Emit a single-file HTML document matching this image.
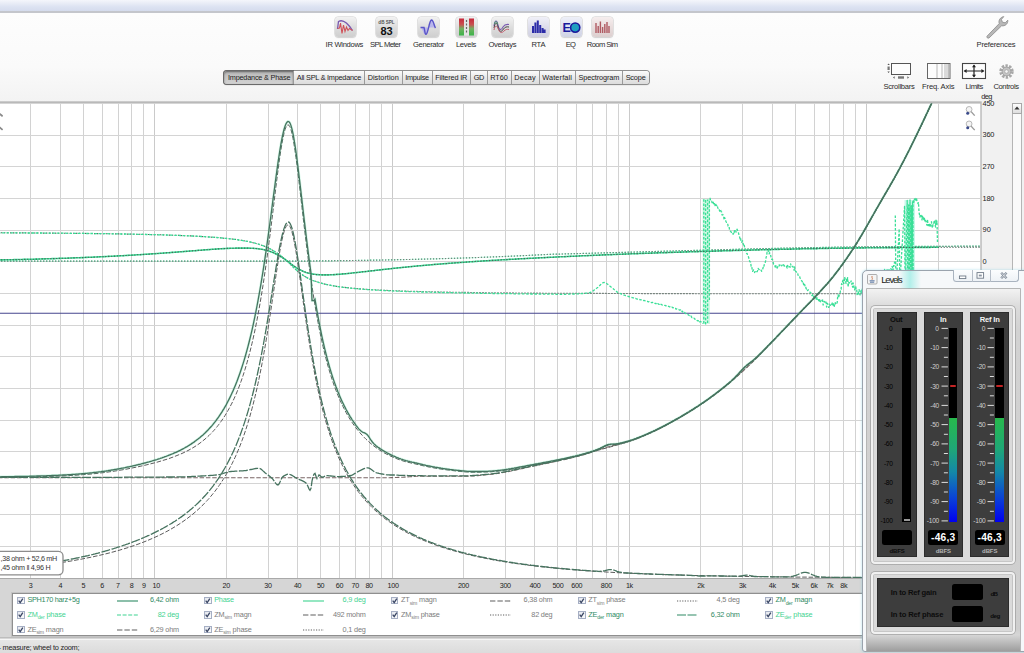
<!DOCTYPE html>
<html><head><meta charset="utf-8"><title>REW</title>
<style>
html,body{margin:0;padding:0}
body{width:1024px;height:653px;overflow:hidden;position:relative;background:#ececec;font-family:"Liberation Sans",sans-serif;}
.t{position:absolute;white-space:nowrap;}
.a{position:absolute;}
sub{font-size:70%;vertical-align:baseline;position:relative;top:2.5px;}
</style></head><body>

<div class="a" style="left:0;top:0;width:1024px;height:12px;background:linear-gradient(#f4f6fb 0%,#dde3f2 55%,#d3daec 100%);"></div>
<div class="a" style="left:0;top:11px;width:1024px;height:1.5px;background:#c4c6cc;"></div>
<div class="a" style="left:0;top:12.5px;width:1024px;height:89px;background:linear-gradient(#fdfdfd,#fafafa 60%,#f3f3f3);"></div>
<div class="a" style="left:335px;top:16.6px;width:21px;height:20px;border-radius:3.5px;background:linear-gradient(#f2f2f2,#dcdcdc 55%,#cfcfcf);box-shadow:0 0 0 0.6px #d0d0d0, 0 .8px 1.2px rgba(0,0,0,.15);overflow:hidden;"><svg width="21" height="20" viewBox="0 0 21 20" style="position:absolute;left:0;top:0"><path d="M2.5 12 L3.5 4.5 C7 2.5 12 5 17.5 13.5" fill="none" stroke="#7a5ab0" stroke-width="1.3"/><path d="M2.5 11.5 L4.5 11 L5.5 6 L7 16.5 L8.5 8 L10 14.5 L11.5 10 L13 13.5 L14.5 11.5 L17.5 13.5" fill="none" stroke="#d05058" stroke-width="1.1"/></svg></div>
<div class="t" style="left:325.6px;top:40.2px;font-size:7.6px;line-height:9.1px;color:#2b2b2b;letter-spacing:-0.30px;">IR Windows</div>
<div class="a" style="left:375.8px;top:16.6px;width:21px;height:20px;border-radius:3.5px;background:linear-gradient(#f2f2f2,#dcdcdc 55%,#cfcfcf);box-shadow:0 0 0 0.6px #d0d0d0, 0 .8px 1.2px rgba(0,0,0,.15);overflow:hidden;"><svg width="21" height="20" viewBox="0 0 21 20" style="position:absolute;left:0;top:0"><text x="10.5" y="6.9" font-size="4.6" font-weight="bold" text-anchor="middle" fill="#555" font-family="Liberation Sans, sans-serif">dB SPL</text><text x="10.5" y="17.9" font-size="11" font-weight="bold" text-anchor="middle" fill="#111" font-family="Liberation Sans, sans-serif">83</text></svg></div>
<div class="t" style="left:370.1px;top:40.2px;font-size:7.6px;line-height:9.1px;color:#2b2b2b;letter-spacing:-0.58px;">SPL Meter</div>
<div class="a" style="left:418px;top:16.6px;width:21px;height:20px;border-radius:3.5px;background:linear-gradient(#f2f2f2,#dcdcdc 55%,#cfcfcf);box-shadow:0 0 0 0.6px #d0d0d0, 0 .8px 1.2px rgba(0,0,0,.15);overflow:hidden;"><svg width="21" height="20" viewBox="0 0 21 20" style="position:absolute;left:0;top:0"><path d="M2.5 10.5 C4 10.5 5.5 18 7.5 17.5 C10.5 16.5 11 3.5 13.5 3 C15.5 2.7 16 9 17.5 10.5 Z" fill="#b9b6ec" stroke="none"/><path d="M2.5 10.5 L6 10.5 C7 14 7 17.6 8 17.3 C10.5 16 11 3.5 13.5 3 C15.5 2.7 16 9 17.5 11" fill="none" stroke="#5a55c8" stroke-width="1.4"/></svg></div>
<div class="t" style="left:413.0px;top:40.2px;font-size:7.6px;line-height:9.1px;color:#2b2b2b;letter-spacing:-0.36px;">Generator</div>
<div class="a" style="left:456px;top:16.6px;width:21px;height:20px;border-radius:3.5px;background:linear-gradient(#f2f2f2,#dcdcdc 55%,#cfcfcf);box-shadow:0 0 0 0.6px #d0d0d0, 0 .8px 1.2px rgba(0,0,0,.15);overflow:hidden;"><svg width="21" height="20" viewBox="0 0 21 20" style="position:absolute;left:0;top:0"><defs><linearGradient id="lg1" x1="0" y1="0" x2="0" y2="1"><stop offset="0" stop-color="#c8283c"/><stop offset=".35" stop-color="#c85050"/><stop offset=".6" stop-color="#70b060"/><stop offset="1" stop-color="#3cb44a"/></linearGradient></defs><rect x="3" y="1.5" width="5" height="17" fill="url(#lg1)"/><rect x="13" y="1.5" width="5" height="17" fill="url(#lg1)"/><rect x="8" y="1.5" width="5" height="17" fill="#e4e4e4"/><path d="M10.5 3 v2 M10.5 6.5 v2 M10.5 10 v2 M10.5 13.5 v2" stroke="#666" stroke-width="1.2"/></svg></div>
<div class="t" style="left:455.9px;top:40.2px;font-size:7.6px;line-height:9.1px;color:#2b2b2b;letter-spacing:-0.29px;">Levels</div>
<div class="a" style="left:492.3px;top:16.6px;width:21px;height:20px;border-radius:3.5px;background:linear-gradient(#f2f2f2,#dcdcdc 55%,#cfcfcf);box-shadow:0 0 0 0.6px #d0d0d0, 0 .8px 1.2px rgba(0,0,0,.15);overflow:hidden;"><svg width="21" height="20" viewBox="0 0 21 20" style="position:absolute;left:0;top:0"><path d="M2 9 C3 2 5 3 6 8 C7 13 9 14 11 10 C12.5 7.5 14 7 17 7.5" fill="none" stroke="#7a5ab0" stroke-width="1.1"/><path d="M2 11 C3 5 5 5 6 10 C7 15 9.5 15.5 11.5 12 C13 10 14.5 9.5 17 10" fill="none" stroke="#444" stroke-width="1"/><path d="M2 13 C3 8 5 8 6.5 12.5 C8 16.5 10 16 12 14 C13.5 12.5 15 12 17 12.5" fill="none" stroke="#c06070" stroke-width="1"/><path d="M2.5 7 C3.2 3.5 4.8 4 5.6 7" fill="none" stroke="#40a060" stroke-width=".9"/></svg></div>
<div class="t" style="left:488.4px;top:40.2px;font-size:7.6px;line-height:9.1px;color:#2b2b2b;letter-spacing:-0.27px;">Overlays</div>
<div class="a" style="left:528.3px;top:16.6px;width:21px;height:20px;border-radius:3.5px;background:linear-gradient(#f0f0f8,#dcdcea 55%,#d0d0e0);box-shadow:0 0 0 0.6px #d0d0d0, 0 .8px 1.2px rgba(0,0,0,.15);overflow:hidden;"><svg width="21" height="20" viewBox="0 0 21 20" style="position:absolute;left:0;top:0"><path d="M5 16 V9 M7.4 16 V5.5 M9.8 16 V3.5 M12.2 16 V8 M14.6 16 V11 M16.6 16 V12.5" stroke="#2c2ca8" stroke-width="2"/></svg></div>
<div class="t" style="left:531.5px;top:40.2px;font-size:7.6px;line-height:9.1px;color:#2b2b2b;letter-spacing:-0.27px;">RTA</div>
<div class="a" style="left:560.7px;top:16.6px;width:21px;height:20px;border-radius:3.5px;background:linear-gradient(#eef0f8,#dcdfee 55%,#d0d3e4);box-shadow:0 0 0 0.6px #d0d0d0, 0 .8px 1.2px rgba(0,0,0,.15);overflow:hidden;"><svg width="21" height="20" viewBox="0 0 21 20" style="position:absolute;left:0;top:0"><text x="1.6" y="15" font-size="12.5" font-weight="bold" fill="#1a1a9c" font-family="Liberation Sans, sans-serif">E</text><circle cx="14.2" cy="10.6" r="4.6" fill="#1e9ec0" stroke="#1a1a9c" stroke-width="1.6"/></svg></div>
<div class="t" style="left:565.8px;top:40.2px;font-size:7.6px;line-height:9.1px;color:#2b2b2b;letter-spacing:-0.89px;">EQ</div>
<div class="a" style="left:592.2px;top:16.6px;width:21px;height:20px;border-radius:3.5px;background:linear-gradient(#f6eeee,#e8dcdc 55%,#dccfcf);box-shadow:0 0 0 0.6px #d0d0d0, 0 .8px 1.2px rgba(0,0,0,.15);overflow:hidden;"><svg width="21" height="20" viewBox="0 0 21 20" style="position:absolute;left:0;top:0"><path d="M4 16 V6 M6.2 16 V9 M8.4 16 V4.5 M10.6 16 V10 M12.8 16 V7 M15 16 V5 M17 16 V9" stroke="#b05a62" stroke-width="1.4"/></svg></div>
<div class="t" style="left:586.8px;top:40.2px;font-size:7.6px;line-height:9.1px;color:#2b2b2b;letter-spacing:-0.58px;">Room Sim</div>
<svg class="a" style="left:984px;top:14px" width="27" height="25" viewBox="0 0 27 25"><path d="M3 22.2 L15.2 9.6 C14.2 6.5 16.2 3.2 19.8 2.6 L17.4 5.4 L18.4 8.2 L21.2 8.8 L23.8 6.2 C24.2 9.6 21.2 12.4 17.6 11.8 L5 24 C3.6 24.6 2.4 23.4 3 22.2 Z" fill="#b8b8b8" stroke="#8a8a8a" stroke-width=".8"/></svg>
<div class="t" style="left:976.6px;top:40.2px;font-size:7.6px;line-height:9.1px;color:#2b2b2b;letter-spacing:-0.20px;">Preferences</div>
<svg class="a" style="left:886px;top:62px" width="27" height="18" viewBox="0 0 27 18"><rect x="5.5" y="1.5" width="19" height="11" fill="#fdfdfd" stroke="#555" stroke-width="1"/><rect x="1.5" y="4.5" width="2.2" height="3.5" fill="#777"/><path d="M2.6 1.5 l1.2 1.6 h-2.4z M2.6 11 l1.2 -1.6 h-2.4z" fill="#555"/><rect x="12" y="14.3" width="6" height="2.4" fill="#777"/><path d="M7 15.5 l1.6 -1.2 v2.4z M23 15.5 l-1.6 -1.2 v2.4z" fill="#555"/></svg>
<div class="t" style="left:883.5px;top:82.4px;font-size:7.6px;line-height:9.1px;color:#2b2b2b;letter-spacing:-0.27px;">Scrollbars</div>
<svg class="a" style="left:926px;top:62px" width="26" height="18" viewBox="0 0 26 18"><rect x="1.5" y="1.5" width="22.5" height="15" fill="#fdfdfd" stroke="#666" stroke-width="1"/><path d="M11 2 V16 M16 2 V16 M19 2 V16 M21 2 V16 M22.6 2 V16" stroke="#9a9a9a" stroke-width=".7"/></svg>
<div class="t" style="left:922.1px;top:82.4px;font-size:7.6px;line-height:9.1px;color:#2b2b2b;letter-spacing:-0.15px;">Freq. Axis</div>
<svg class="a" style="left:961px;top:62px" width="26" height="18" viewBox="0 0 26 18"><rect x="1.5" y="1.5" width="23" height="15" fill="#fdfdfd" stroke="#444" stroke-width="1.1"/><path d="M3.5 9 H22.5 M13 3.2 V14.8" stroke="#222" stroke-width="1.2"/><path d="M2.6 9 l3 -2 v4z M23.4 9 l-3 -2 v4z M13 2.4 l-2 2.8 h4z M13 15.6 l-2 -2.8 h4z" fill="#222"/></svg>
<div class="t" style="left:965.5px;top:82.4px;font-size:7.6px;line-height:9.1px;color:#2b2b2b;letter-spacing:-0.39px;">Limits</div>
<svg class="a" style="left:998px;top:63px" width="17" height="17" viewBox="0 0 17 17"><circle cx="8.5" cy="8.5" r="5.4" fill="none" stroke="#a8a8a8" stroke-width="3.6" stroke-dasharray="2.2 1.2"/><circle cx="8.5" cy="8.5" r="4.4" fill="#c4c4c4" stroke="#999" stroke-width=".8"/><circle cx="8.5" cy="8.5" r="1.8" fill="#f4f4f4" stroke="#999" stroke-width=".6"/></svg>
<div class="t" style="left:993.4px;top:82.4px;font-size:7.6px;line-height:9.1px;color:#2b2b2b;letter-spacing:-0.37px;">Controls</div>
<div class="a" style="left:224.2px;top:71px;width:424.8px;height:13px;border-radius:3px;background:linear-gradient(#fbfbfb,#e9e9e9 50%,#dcdcdc);box-shadow:0 0 0 1px #8e8e8e,0 1px 1.5px rgba(0,0,0,.25);"></div>
<div class="a" style="left:224.2px;top:71px;width:69.3px;height:13px;border-radius:3px 0 0 3px;background:linear-gradient(#b4b4b4,#c6c6c6 45%,#d2d2d2);box-shadow:inset 0 1px 2px rgba(0,0,0,.45), 0 0 0 1px #6a6a6a;"></div>
<div class="t" style="left:224.7px;top:73.4px;width:68.8px;text-align:center;font-size:7.3px;line-height:9.6px;color:#1c1c1c;letter-spacing:-0.20px;">Impedance &amp; Phase</div>
<div class="a" style="left:293.0px;top:71px;width:1px;height:13px;background:#9a9a9a;"></div>
<div class="t" style="left:293.5px;top:73.4px;width:70.9px;text-align:center;font-size:7.3px;line-height:9.6px;color:#1c1c1c;letter-spacing:-0.23px;">All SPL &amp; Impedance</div>
<div class="a" style="left:363.9px;top:71px;width:1px;height:13px;background:#9a9a9a;"></div>
<div class="t" style="left:364.4px;top:73.4px;width:37.6px;text-align:center;font-size:7.3px;line-height:9.6px;color:#1c1c1c;letter-spacing:0.03px;">Distortion</div>
<div class="a" style="left:401.5px;top:71px;width:1px;height:13px;background:#9a9a9a;"></div>
<div class="t" style="left:402.0px;top:73.4px;width:30.0px;text-align:center;font-size:7.3px;line-height:9.6px;color:#1c1c1c;letter-spacing:-0.29px;">Impulse</div>
<div class="a" style="left:431.5px;top:71px;width:1px;height:13px;background:#9a9a9a;"></div>
<div class="t" style="left:432.0px;top:73.4px;width:38.5px;text-align:center;font-size:7.3px;line-height:9.6px;color:#1c1c1c;letter-spacing:-0.15px;">Filtered IR</div>
<div class="a" style="left:470.0px;top:71px;width:1px;height:13px;background:#9a9a9a;"></div>
<div class="t" style="left:470.5px;top:73.4px;width:16.5px;text-align:center;font-size:7.3px;line-height:9.6px;color:#1c1c1c;letter-spacing:-0.47px;">GD</div>
<div class="a" style="left:486.5px;top:71px;width:1px;height:13px;background:#9a9a9a;"></div>
<div class="t" style="left:487.0px;top:73.4px;width:24.0px;text-align:center;font-size:7.3px;line-height:9.6px;color:#1c1c1c;letter-spacing:-0.05px;">RT60</div>
<div class="a" style="left:510.5px;top:71px;width:1px;height:13px;background:#9a9a9a;"></div>
<div class="t" style="left:511.0px;top:73.4px;width:28.0px;text-align:center;font-size:7.3px;line-height:9.6px;color:#1c1c1c;letter-spacing:0.16px;">Decay</div>
<div class="a" style="left:538.5px;top:71px;width:1px;height:13px;background:#9a9a9a;"></div>
<div class="t" style="left:539.0px;top:73.4px;width:36.3px;text-align:center;font-size:7.3px;line-height:9.6px;color:#1c1c1c;letter-spacing:0.14px;">Waterfall</div>
<div class="a" style="left:574.8px;top:71px;width:1px;height:13px;background:#9a9a9a;"></div>
<div class="t" style="left:575.3px;top:73.4px;width:47.1px;text-align:center;font-size:7.3px;line-height:9.6px;color:#1c1c1c;letter-spacing:-0.11px;">Spectrogram</div>
<div class="a" style="left:621.9px;top:71px;width:1px;height:13px;background:#9a9a9a;"></div>
<div class="t" style="left:622.4px;top:73.4px;width:26.4px;text-align:center;font-size:7.3px;line-height:9.6px;color:#1c1c1c;letter-spacing:-0.16px;">Scope</div>
<svg class="a" style="left:0;top:0" width="1024" height="653" viewBox="0 0 1024 653">
<defs><clipPath id="cp"><rect x="0" y="103.6" width="980.3" height="474.4"/></clipPath></defs>
<rect x="-2" y="101.3" width="983.6999999999999" height="477.7" fill="#b9b9b9"/>
<rect x="-2" y="103.6" width="982.3" height="474.4" fill="#ffffff"/>
<g clip-path="url(#cp)">
<path d="M30.5 103.6 V578.0" stroke="#d2d2d2" stroke-width="1"/>
<path d="M60.5 103.6 V578.0" stroke="#d2d2d2" stroke-width="1"/>
<path d="M83.5 103.6 V578.0" stroke="#d2d2d2" stroke-width="1"/>
<path d="M102.5 103.6 V578.0" stroke="#d2d2d2" stroke-width="1"/>
<path d="M118.5 103.6 V578.0" stroke="#d2d2d2" stroke-width="1"/>
<path d="M131.5 103.6 V578.0" stroke="#d2d2d2" stroke-width="1"/>
<path d="M143.5 103.6 V578.0" stroke="#d2d2d2" stroke-width="1"/>
<path d="M154.5 103.6 V578.0" stroke="#cacaca" stroke-width="1"/>
<path d="M226.5 103.6 V578.0" stroke="#d2d2d2" stroke-width="1"/>
<path d="M268.5 103.6 V578.0" stroke="#d2d2d2" stroke-width="1"/>
<path d="M297.5 103.6 V578.0" stroke="#d2d2d2" stroke-width="1"/>
<path d="M320.5 103.6 V578.0" stroke="#d2d2d2" stroke-width="1"/>
<path d="M339.5 103.6 V578.0" stroke="#d2d2d2" stroke-width="1"/>
<path d="M355.5 103.6 V578.0" stroke="#d2d2d2" stroke-width="1"/>
<path d="M369.5 103.6 V578.0" stroke="#d2d2d2" stroke-width="1"/>
<path d="M381.5 103.6 V578.0" stroke="#d2d2d2" stroke-width="1"/>
<path d="M392.5 103.6 V578.0" stroke="#cacaca" stroke-width="1"/>
<path d="M463.5 103.6 V578.0" stroke="#d2d2d2" stroke-width="1"/>
<path d="M505.5 103.6 V578.0" stroke="#d2d2d2" stroke-width="1"/>
<path d="M534.5 103.6 V578.0" stroke="#d2d2d2" stroke-width="1"/>
<path d="M557.5 103.6 V578.0" stroke="#d2d2d2" stroke-width="1"/>
<path d="M576.5 103.6 V578.0" stroke="#d2d2d2" stroke-width="1"/>
<path d="M592.5 103.6 V578.0" stroke="#d2d2d2" stroke-width="1"/>
<path d="M606.5 103.6 V578.0" stroke="#d2d2d2" stroke-width="1"/>
<path d="M618.5 103.6 V578.0" stroke="#d2d2d2" stroke-width="1"/>
<path d="M629.5 103.6 V578.0" stroke="#cacaca" stroke-width="1"/>
<path d="M700.5 103.6 V578.0" stroke="#d2d2d2" stroke-width="1"/>
<path d="M742.5 103.6 V578.0" stroke="#d2d2d2" stroke-width="1"/>
<path d="M772.5 103.6 V578.0" stroke="#d2d2d2" stroke-width="1"/>
<path d="M795.5 103.6 V578.0" stroke="#d2d2d2" stroke-width="1"/>
<path d="M814.5 103.6 V578.0" stroke="#d2d2d2" stroke-width="1"/>
<path d="M829.5 103.6 V578.0" stroke="#d2d2d2" stroke-width="1"/>
<path d="M843.5 103.6 V578.0" stroke="#d2d2d2" stroke-width="1"/>
<path d="M855.5 103.6 V578.0" stroke="#d2d2d2" stroke-width="1"/>
<path d="M866.5 103.6 V578.0" stroke="#cacaca" stroke-width="1"/>
<path d="M938.5 103.6 V578.0" stroke="#d2d2d2" stroke-width="1"/>
<path d="M0 135.5 H980.3" stroke="#d4d4d4" stroke-width="1"/>
<path d="M0 166.5 H980.3" stroke="#d4d4d4" stroke-width="1"/>
<path d="M0 198.5 H980.3" stroke="#d4d4d4" stroke-width="1"/>
<path d="M0 230.5 H980.3" stroke="#d4d4d4" stroke-width="1"/>
<path d="M0 261.5 H980.3" stroke="#d4d4d4" stroke-width="1"/>
<path d="M0 293.5 H980.3" stroke="#d4d4d4" stroke-width="1"/>
<path d="M0 325.5 H980.3" stroke="#d4d4d4" stroke-width="1"/>
<path d="M0 356.5 H980.3" stroke="#d4d4d4" stroke-width="1"/>
<path d="M0 388.5 H980.3" stroke="#d4d4d4" stroke-width="1"/>
<path d="M0 420.5 H980.3" stroke="#d4d4d4" stroke-width="1"/>
<path d="M0 451.5 H980.3" stroke="#d4d4d4" stroke-width="1"/>
<path d="M0 483.5 H980.3" stroke="#d4d4d4" stroke-width="1"/>
<path d="M0 514.5 H980.3" stroke="#d4d4d4" stroke-width="1"/>
<path d="M0 546.5 H980.3" stroke="#d4d4d4" stroke-width="1"/>
<path d="M0 313.3 H980.3" stroke="#46468e" stroke-width="1.1"/>
<path d="M-2.0 261.1 L-1.0 261.1 L0.0 261.1 L1.0 261.1 L2.0 261.1 L3.0 261.1 L4.0 261.1 L5.0 261.1 L6.0 261.1 L7.0 261.1 L8.0 261.1 L9.0 261.1 L10.0 261.1 L11.0 261.1 L12.0 261.1 L13.0 261.1 L14.0 261.1 L15.0 261.1 L16.0 261.1 L17.0 261.1 L18.0 261.1 L19.0 261.1 L20.0 261.1 L21.0 261.1 L22.0 261.1 L23.0 261.1 L24.0 261.1 L25.0 261.1 L26.0 261.1 L27.0 261.1 L28.0 261.1 L29.0 261.1 L30.0 261.1 L31.0 261.1 L32.0 261.1 L33.0 261.1 L34.0 261.1 L35.0 261.1 L36.0 261.1 L37.0 261.1 L38.0 261.1 L39.0 261.1 L40.0 261.1 L41.0 261.1 L42.0 261.1 L43.0 261.1 L44.0 261.1 L45.0 261.1 L46.0 261.1 L47.0 261.1 L48.0 261.1 L49.0 261.1 L50.0 261.1 L51.0 261.1 L52.0 261.1 L53.0 261.1 L54.0 261.1 L55.0 261.1 L56.0 261.1 L57.0 261.1 L58.0 261.1 L59.0 261.1 L60.0 261.1 L61.0 261.1 L62.0 261.1 L63.0 261.1 L64.0 261.1 L65.0 261.1 L66.0 261.1 L67.0 261.1 L68.0 261.1 L69.0 261.1 L70.0 261.1 L71.0 261.1 L72.0 261.1 L73.0 261.1 L74.0 261.1 L75.0 261.1 L76.0 261.1 L77.0 261.1 L78.0 261.1 L79.0 261.1 L80.0 261.1 L81.0 261.1 L82.0 261.1 L83.0 261.1 L84.0 261.1 L85.0 261.1 L86.0 261.1 L87.0 261.1 L88.0 261.1 L89.0 261.1 L90.0 261.1 L91.0 261.1 L92.0 261.1 L93.0 261.1 L94.0 261.1 L95.0 261.1 L96.0 261.1 L97.0 261.1 L98.0 261.1 L99.0 261.1 L100.0 261.1 L101.0 261.1 L102.0 261.1 L103.0 261.1 L104.0 261.1 L105.0 261.1 L106.0 261.1 L107.0 261.1 L108.0 261.1 L109.0 261.1 L110.0 261.1 L111.0 261.1 L112.0 261.1 L113.0 261.1 L114.0 261.1 L115.0 261.1 L116.0 261.1 L117.0 261.1 L118.0 261.1 L119.0 261.1 L120.0 261.1 L121.0 261.1 L122.0 261.1 L123.0 261.1 L124.0 261.1 L125.0 261.1 L126.0 261.1 L127.0 261.1 L128.0 261.1 L129.0 261.1 L130.0 261.1 L131.0 261.1 L132.0 261.1 L133.0 261.1 L134.0 261.1 L135.0 261.1 L136.0 261.1 L137.0 261.1 L138.0 261.1 L139.0 261.1 L140.0 261.1 L141.0 261.1 L142.0 261.1 L143.0 261.1 L144.0 261.1 L145.0 261.1 L146.0 261.1 L147.0 261.1 L148.0 261.1 L149.0 261.1 L150.0 261.1 L151.0 261.1 L152.0 261.1 L153.0 261.1 L154.0 261.1 L155.0 261.1 L156.0 261.1 L157.0 261.1 L158.0 261.1 L159.0 261.1 L160.0 261.1 L161.0 261.1 L162.0 261.1 L163.0 261.1 L164.0 261.1 L165.0 261.1 L166.0 261.1 L167.0 261.1 L168.0 261.1 L169.0 261.1 L170.0 261.1 L171.0 261.1 L172.0 261.1 L173.0 261.1 L174.0 261.1 L175.0 261.1 L176.0 261.1 L177.0 261.1 L178.0 261.1 L179.0 261.1 L180.0 261.1 L181.0 261.1 L182.0 261.1 L183.0 261.1 L184.0 261.1 L185.0 261.1 L186.0 261.1 L187.0 261.1 L188.0 261.1 L189.0 261.1 L190.0 261.1 L191.0 261.1 L192.0 261.1 L193.0 261.1 L194.0 261.1 L195.0 261.1 L196.0 261.1 L197.0 261.1 L198.0 261.1 L199.0 261.1 L200.0 261.1 L201.0 261.1 L202.0 261.1 L203.0 261.1 L204.0 261.1 L205.0 261.1 L206.0 261.1 L207.0 261.1 L208.0 261.1 L209.0 261.1 L210.0 261.1 L211.0 261.1 L212.0 261.1 L213.0 261.1 L214.0 261.1 L215.0 261.1 L216.0 261.1 L217.0 261.1 L218.0 261.1 L219.0 261.1 L220.0 261.1 L221.0 261.1 L222.0 261.1 L223.0 261.1 L224.0 261.1 L225.0 261.1 L226.0 261.1 L227.0 261.1 L228.0 261.1 L229.0 261.1 L230.0 261.1 L231.0 261.1 L232.0 261.1 L233.0 261.1 L234.0 261.1 L235.0 261.1 L236.0 261.1 L237.0 261.1 L238.0 261.1 L239.0 261.1 L240.0 261.1 L241.0 261.1 L242.0 261.1 L243.0 261.1 L244.0 261.1 L245.0 261.1 L246.0 261.1 L247.0 261.1 L248.0 261.1 L249.0 261.1 L250.0 261.1 L251.0 261.1 L252.0 261.1 L253.0 261.1 L254.0 261.1 L255.0 261.1 L256.0 261.1 L257.0 261.1 L258.0 261.1 L259.0 261.1 L260.0 261.1 L261.0 261.1 L262.0 261.1 L263.0 261.1 L264.0 261.1 L265.0 261.1 L266.0 261.1 L267.0 261.1 L268.0 261.1 L269.0 261.1 L270.0 261.1 L271.0 261.1 L272.0 261.1 L273.0 261.1 L274.0 261.1 L275.0 261.1 L276.0 261.1 L277.0 261.1 L278.0 261.1 L279.0 261.1 L280.0 261.1 L281.0 261.1 L282.0 261.1 L283.0 261.1 L284.0 261.1 L285.0 261.1 L286.0 261.1 L287.0 261.1 L288.0 261.1 L289.0 261.1 L290.0 261.1 L291.0 261.1 L292.0 261.1 L293.0 261.1 L294.0 261.1 L295.0 261.1 L296.0 261.1 L297.0 261.1 L298.0 261.1 L299.0 261.1 L300.0 261.1 L301.0 261.1 L302.0 261.1 L303.0 261.1 L304.0 261.1 L305.0 261.1 L306.0 261.0 L307.0 261.0 L308.0 261.0 L309.0 261.0 L310.0 261.0 L311.0 261.0 L312.0 261.0 L313.0 261.0 L314.0 261.0 L315.0 261.0 L316.0 260.9 L317.0 260.9 L318.0 260.9 L319.0 260.9 L320.0 260.9 L321.0 260.9 L322.0 260.9 L323.0 260.9 L324.0 260.9 L325.0 260.9 L326.0 260.8 L327.0 260.8 L328.0 260.8 L329.0 260.8 L330.0 260.8 L331.0 260.8 L332.0 260.8 L333.0 260.8 L334.0 260.7 L335.0 260.7 L336.0 260.7 L337.0 260.7 L338.0 260.7 L339.0 260.7 L340.0 260.7 L341.0 260.7 L342.0 260.6 L343.0 260.6 L344.0 260.6 L345.0 260.6 L346.0 260.6 L347.0 260.6 L348.0 260.6 L349.0 260.6 L350.0 260.5 L351.0 260.5 L352.0 260.5 L353.0 260.5 L354.0 260.5 L355.0 260.5 L356.0 260.5 L357.0 260.4 L358.0 260.4 L359.0 260.4 L360.0 260.4 L361.0 260.4 L362.0 260.4 L363.0 260.3 L364.0 260.3 L365.0 260.3 L366.0 260.3 L367.0 260.3 L368.0 260.3 L369.0 260.3 L370.0 260.2 L371.0 260.2 L372.0 260.2 L373.0 260.2 L374.0 260.2 L375.0 260.2 L376.0 260.1 L377.0 260.1 L378.0 260.1 L379.0 260.1 L380.0 260.1 L381.0 260.0 L382.0 260.0 L383.0 260.0 L384.0 260.0 L385.0 260.0 L386.0 260.0 L387.0 259.9 L388.0 259.9 L389.0 259.9 L390.0 259.9 L391.0 259.9 L392.0 259.8 L393.0 259.8 L394.0 259.8 L395.0 259.8 L396.0 259.8 L397.0 259.7 L398.0 259.7 L399.0 259.7 L400.0 259.7 L401.0 259.7 L402.0 259.6 L403.0 259.6 L404.0 259.6 L405.0 259.6 L406.0 259.5 L407.0 259.5 L408.0 259.5 L409.0 259.5 L410.0 259.5 L411.0 259.4 L412.0 259.4 L413.0 259.4 L414.0 259.4 L415.0 259.3 L416.0 259.3 L417.0 259.3 L418.0 259.3 L419.0 259.2 L420.0 259.2 L421.0 259.2 L422.0 259.2 L423.0 259.1 L424.0 259.1 L425.0 259.1 L426.0 259.1 L427.0 259.0 L428.0 259.0 L429.0 259.0 L430.0 259.0 L431.0 258.9 L432.0 258.9 L433.0 258.9 L434.0 258.9 L435.0 258.8 L436.0 258.8 L437.0 258.8 L438.0 258.8 L439.0 258.7 L440.0 258.7 L441.0 258.7 L442.0 258.6 L443.0 258.6 L444.0 258.6 L445.0 258.6 L446.0 258.5 L447.0 258.5 L448.0 258.5 L449.0 258.4 L450.0 258.4 L451.0 258.4 L452.0 258.3 L453.0 258.3 L454.0 258.3 L455.0 258.3 L456.0 258.2 L457.0 258.2 L458.0 258.2 L459.0 258.1 L460.0 258.1 L461.0 258.1 L462.0 258.0 L463.0 258.0 L464.0 258.0 L465.0 257.9 L466.0 257.9 L467.0 257.9 L468.0 257.8 L469.0 257.8 L470.0 257.8 L471.0 257.7 L472.0 257.7 L473.0 257.7 L474.0 257.6 L475.0 257.6 L476.0 257.6 L477.0 257.5 L478.0 257.5 L479.0 257.5 L480.0 257.4 L481.0 257.4 L482.0 257.3 L483.0 257.3 L484.0 257.3 L485.0 257.2 L486.0 257.2 L487.0 257.2 L488.0 257.1 L489.0 257.1 L490.0 257.0 L491.0 257.0 L492.0 257.0 L493.0 256.9 L494.0 256.9 L495.0 256.8 L496.0 256.8 L497.0 256.8 L498.0 256.7 L499.0 256.7 L500.0 256.6 L501.0 256.6 L502.0 256.6 L503.0 256.5 L504.0 256.5 L505.0 256.4 L506.0 256.4 L507.0 256.4 L508.0 256.3 L509.0 256.3 L510.0 256.2 L511.0 256.2 L512.0 256.1 L513.0 256.1 L514.0 256.1 L515.0 256.0 L516.0 256.0 L517.0 255.9 L518.0 255.9 L519.0 255.8 L520.0 255.8 L521.0 255.7 L522.0 255.7 L523.0 255.7 L524.0 255.6 L525.0 255.6 L526.0 255.5 L527.0 255.5 L528.0 255.4 L529.0 255.4 L530.0 255.3 L531.0 255.3 L532.0 255.2 L533.0 255.2 L534.0 255.1 L535.0 255.1 L536.0 255.0 L537.0 255.0 L538.0 254.9 L539.0 254.9 L540.0 254.8 L541.0 254.8 L542.0 254.7 L543.0 254.7 L544.0 254.6 L545.0 254.6 L546.0 254.5 L547.0 254.5 L548.0 254.4 L549.0 254.4 L550.0 254.3 L551.0 254.3 L552.0 254.3 L553.0 254.2 L554.0 254.2 L555.0 254.2 L556.0 254.2 L557.0 254.1 L558.0 254.1 L559.0 254.1 L560.0 254.1 L561.0 254.0 L562.0 254.0 L563.0 254.0 L564.0 254.0 L565.0 253.9 L566.0 253.9 L567.0 253.9 L568.0 253.8 L569.0 253.8 L570.0 253.8 L571.0 253.8 L572.0 253.7 L573.0 253.7 L574.0 253.7 L575.0 253.7 L576.0 253.6 L577.0 253.6 L578.0 253.6 L579.0 253.6 L580.0 253.5 L581.0 253.5 L582.0 253.5 L583.0 253.4 L584.0 253.4 L585.0 253.4 L586.0 253.4 L587.0 253.3 L588.0 253.3 L589.0 253.3 L590.0 253.3 L591.0 253.2 L592.0 253.2 L593.0 253.2 L594.0 253.2 L595.0 253.1 L596.0 253.1 L597.0 253.1 L598.0 253.0 L599.0 253.0 L600.0 253.0 L601.0 253.0 L602.0 252.9 L603.0 252.9 L604.0 252.9 L605.0 252.9 L606.0 252.8 L607.0 252.8 L608.0 252.8 L609.0 252.7 L610.0 252.7 L611.0 252.7 L612.0 252.7 L613.0 252.6 L614.0 252.6 L615.0 252.6 L616.0 252.6 L617.0 252.5 L618.0 252.5 L619.0 252.5 L620.0 252.4 L621.0 252.4 L622.0 252.4 L623.0 252.4 L624.0 252.3 L625.0 252.3 L626.0 252.3 L627.0 252.2 L628.0 252.2 L629.0 252.2 L630.0 252.2 L631.0 252.1 L632.0 252.1 L633.0 252.1 L634.0 252.1 L635.0 252.0 L636.0 252.0 L637.0 252.0 L638.0 251.9 L639.0 251.9 L640.0 251.9 L641.0 251.9 L642.0 251.8 L643.0 251.8 L644.0 251.8 L645.0 251.8 L646.0 251.7 L647.0 251.7 L648.0 251.7 L649.0 251.6 L650.0 251.6 L651.0 251.6 L652.0 251.6 L653.0 251.5 L654.0 251.5 L655.0 251.5 L656.0 251.4 L657.0 251.4 L658.0 251.4 L659.0 251.4 L660.0 251.3 L661.0 251.3 L662.0 251.3 L663.0 251.3 L664.0 251.2 L665.0 251.2 L666.0 251.2 L667.0 251.1 L668.0 251.1 L669.0 251.1 L670.0 251.1 L671.0 251.0 L672.0 251.0 L673.0 251.0 L674.0 251.0 L675.0 250.9 L676.0 250.9 L677.0 250.9 L678.0 250.8 L679.0 250.8 L680.0 250.8 L681.0 250.8 L682.0 250.7 L683.0 250.7 L684.0 250.7 L685.0 250.7 L686.0 250.6 L687.0 250.6 L688.0 250.6 L689.0 250.5 L690.0 250.5 L691.0 250.5 L692.0 250.5 L693.0 250.4 L694.0 250.4 L695.0 250.4 L696.0 250.4 L697.0 250.3 L698.0 250.3 L699.0 250.3 L700.0 250.3 L701.0 250.2 L702.0 250.2 L703.0 250.2 L704.0 250.1 L705.0 250.1 L706.0 250.1 L707.0 250.1 L708.0 250.0 L709.0 250.0 L710.0 250.0 L711.0 250.0 L712.0 249.9 L713.0 249.9 L714.0 249.9 L715.0 249.9 L716.0 249.8 L717.0 249.8 L718.0 249.8 L719.0 249.8 L720.0 249.7 L721.0 249.7 L722.0 249.7 L723.0 249.7 L724.0 249.6 L725.0 249.6 L726.0 249.6 L727.0 249.5 L728.0 249.5 L729.0 249.5 L730.0 249.5 L731.0 249.4 L732.0 249.4 L733.0 249.4 L734.0 249.4 L735.0 249.3 L736.0 249.3 L737.0 249.3 L738.0 249.3 L739.0 249.2 L740.0 249.2 L741.0 249.2 L742.0 249.2 L743.0 249.1 L744.0 249.1 L745.0 249.1 L746.0 249.1 L747.0 249.0 L748.0 249.0 L749.0 249.0 L750.0 249.0 L751.0 248.9 L752.0 248.9 L753.0 248.9 L754.0 248.9 L755.0 248.8 L756.0 248.8 L757.0 248.8 L758.0 248.8 L759.0 248.8 L760.0 248.7 L761.0 248.7 L762.0 248.7 L763.0 248.7 L764.0 248.6 L765.0 248.6 L766.0 248.6 L767.0 248.6 L768.0 248.5 L769.0 248.5 L770.0 248.5 L771.0 248.5 L772.0 248.4 L773.0 248.4 L774.0 248.4 L775.0 248.4 L776.0 248.4 L777.0 248.3 L778.0 248.3 L779.0 248.3 L780.0 248.3 L781.0 248.2 L782.0 248.2 L783.0 248.2 L784.0 248.2 L785.0 248.1 L786.0 248.1 L787.0 248.1 L788.0 248.1 L789.0 248.1 L790.0 248.0 L791.0 248.0 L792.0 248.0 L793.0 248.0 L794.0 248.0 L795.0 247.9 L796.0 247.9 L797.0 247.9 L798.0 247.9 L799.0 247.9 L800.0 247.8 L801.0 247.8 L802.0 247.8 L803.0 247.8 L804.0 247.8 L805.0 247.7 L806.0 247.7 L807.0 247.7 L808.0 247.7 L809.0 247.7 L810.0 247.6 L811.0 247.6 L812.0 247.6 L813.0 247.6 L814.0 247.6 L815.0 247.5 L816.0 247.5 L817.0 247.5 L818.0 247.5 L819.0 247.5 L820.0 247.5 L821.0 247.4 L822.0 247.4 L823.0 247.4 L824.0 247.4 L825.0 247.4 L826.0 247.4 L827.0 247.3 L828.0 247.3 L829.0 247.3 L830.0 247.3 L831.0 247.3 L832.0 247.3 L833.0 247.3 L834.0 247.2 L835.0 247.2 L836.0 247.2 L837.0 247.2 L838.0 247.2 L839.0 247.2 L840.0 247.1 L841.0 247.1 L842.0 247.1 L843.0 247.1 L844.0 247.1 L845.0 247.1 L846.0 247.1 L847.0 247.1 L848.0 247.0 L849.0 247.0 L850.0 247.0 L851.0 247.0 L852.0 247.0 L853.0 247.0 L854.0 247.0 L855.0 247.0 L856.0 246.9 L857.0 246.9 L858.0 246.9 L859.0 246.9 L860.0 246.9 L861.0 246.9 L862.0 246.9 L863.0 246.9 L864.0 246.8 L865.0 246.8 L866.0 246.8 L867.0 246.8 L868.0 246.8 L869.0 246.8 L870.0 246.8 L871.0 246.8 L872.0 246.8 L873.0 246.8 L874.0 246.7 L875.0 246.7 L876.0 246.7 L877.0 246.7 L878.0 246.7 L879.0 246.7 L880.0 246.7 L881.0 246.7 L882.0 246.7 L883.0 246.7 L884.0 246.7 L885.0 246.6 L886.0 246.6 L887.0 246.6 L888.0 246.6 L889.0 246.6 L890.0 246.6 L891.0 246.6 L892.0 246.6 L893.0 246.6 L894.0 246.6 L895.0 246.6 L896.0 246.6 L897.0 246.6 L898.0 246.5 L899.0 246.5 L900.0 246.5 L901.0 246.5 L902.0 246.5 L903.0 246.5 L904.0 246.5 L905.0 246.5 L906.0 246.5 L907.0 246.5 L908.0 246.5 L909.0 246.5 L910.0 246.5 L911.0 246.5 L912.0 246.5 L913.0 246.4 L914.0 246.4 L915.0 246.4 L916.0 246.4 L917.0 246.4 L918.0 246.4 L919.0 246.4 L920.0 246.4 L921.0 246.4 L922.0 246.4 L923.0 246.4 L924.0 246.4 L925.0 246.4 L926.0 246.4 L927.0 246.4 L928.0 246.4 L929.0 246.4 L930.0 246.4 L931.0 246.3 L932.0 246.3 L933.0 246.3 L934.0 246.3 L935.0 246.3 L936.0 246.3 L937.0 246.3 L938.0 246.3 L939.0 246.3 L940.0 246.3 L941.0 246.3 L942.0 246.3 L943.0 246.3 L944.0 246.3 L945.0 246.3 L946.0 246.3 L947.0 246.3 L948.0 246.3 L949.0 246.3 L950.0 246.3 L951.0 246.3 L952.0 246.3 L953.0 246.3 L954.0 246.2 L955.0 246.2 L956.0 246.2 L957.0 246.2 L958.0 246.2 L959.0 246.2 L960.0 246.2 L961.0 246.2 L962.0 246.2 L963.0 246.2 L964.0 246.2 L965.0 246.2 L966.0 246.2 L967.0 246.2 L968.0 246.2 L969.0 246.2 L970.0 246.2 L971.0 246.2 L972.0 246.2 L973.0 246.2 L974.0 246.2 L975.0 246.2 L976.0 246.2 L977.0 246.2 L978.0 246.2 L979.0 246.2 L980.0 246.2 L981.0 246.2 L982.0 246.2" fill="none" stroke="#3adf97" stroke-width="1.2" stroke-dasharray="1.5 1.5"/>
<path d="M-2.0 261.1 L-1.0 261.1 L0.0 261.1 L1.0 261.1 L2.0 261.1 L3.0 261.1 L4.0 261.1 L5.0 261.1 L6.0 261.1 L7.0 261.1 L8.0 261.1 L9.0 261.1 L10.0 261.1 L11.0 261.1 L12.0 261.1 L13.0 261.1 L14.0 261.1 L15.0 261.1 L16.0 261.1 L17.0 261.1 L18.0 261.1 L19.0 261.1 L20.0 261.1 L21.0 261.1 L22.0 261.1 L23.0 261.1 L24.0 261.1 L25.0 261.1 L26.0 261.1 L27.0 261.1 L28.0 261.1 L29.0 261.1 L30.0 261.1 L31.0 261.1 L32.0 261.1 L33.0 261.1 L34.0 261.1 L35.0 261.1 L36.0 261.1 L37.0 261.1 L38.0 261.1 L39.0 261.1 L40.0 261.1 L41.0 261.1 L42.0 261.1 L43.0 261.1 L44.0 261.1 L45.0 261.1 L46.0 261.1 L47.0 261.1 L48.0 261.1 L49.0 261.1 L50.0 261.1 L51.0 261.1 L52.0 261.1 L53.0 261.1 L54.0 261.1 L55.0 261.1 L56.0 261.1 L57.0 261.1 L58.0 261.1 L59.0 261.1 L60.0 261.1 L61.0 261.1 L62.0 261.1 L63.0 261.1 L64.0 261.1 L65.0 261.1 L66.0 261.1 L67.0 261.1 L68.0 261.1 L69.0 261.1 L70.0 261.1 L71.0 261.1 L72.0 261.1 L73.0 261.1 L74.0 261.1 L75.0 261.1 L76.0 261.1 L77.0 261.1 L78.0 261.1 L79.0 261.1 L80.0 261.1 L81.0 261.1 L82.0 261.1 L83.0 261.1 L84.0 261.1 L85.0 261.1 L86.0 261.1 L87.0 261.1 L88.0 261.1 L89.0 261.1 L90.0 261.1 L91.0 261.1 L92.0 261.1 L93.0 261.1 L94.0 261.1 L95.0 261.1 L96.0 261.1 L97.0 261.1 L98.0 261.1 L99.0 261.1 L100.0 261.1 L101.0 261.1 L102.0 261.1 L103.0 261.1 L104.0 261.1 L105.0 261.1 L106.0 261.1 L107.0 261.1 L108.0 261.1 L109.0 261.1 L110.0 261.1 L111.0 261.1 L112.0 261.1 L113.0 261.1 L114.0 261.1 L115.0 261.1 L116.0 261.1 L117.0 261.1 L118.0 261.1 L119.0 261.1 L120.0 261.1 L121.0 261.1 L122.0 261.1 L123.0 261.1 L124.0 261.1 L125.0 261.1 L126.0 261.1 L127.0 261.1 L128.0 261.1 L129.0 261.1 L130.0 261.1 L131.0 261.1 L132.0 261.1 L133.0 261.1 L134.0 261.1 L135.0 261.1 L136.0 261.1 L137.0 261.1 L138.0 261.1 L139.0 261.1 L140.0 261.1 L141.0 261.1 L142.0 261.1 L143.0 261.1 L144.0 261.1 L145.0 261.1 L146.0 261.1 L147.0 261.1 L148.0 261.1 L149.0 261.1 L150.0 261.1 L151.0 261.1 L152.0 261.1 L153.0 261.1 L154.0 261.1 L155.0 261.1 L156.0 261.1 L157.0 261.1 L158.0 261.1 L159.0 261.1 L160.0 261.1 L161.0 261.1 L162.0 261.1 L163.0 261.1 L164.0 261.1 L165.0 261.1 L166.0 261.1 L167.0 261.1 L168.0 261.1 L169.0 261.1 L170.0 261.1 L171.0 261.1 L172.0 261.1 L173.0 261.1 L174.0 261.1 L175.0 261.1 L176.0 261.1 L177.0 261.1 L178.0 261.1 L179.0 261.1 L180.0 261.1 L181.0 261.1 L182.0 261.1 L183.0 261.1 L184.0 261.1 L185.0 261.1 L186.0 261.1 L187.0 261.1 L188.0 261.1 L189.0 261.1 L190.0 261.1 L191.0 261.1 L192.0 261.1 L193.0 261.1 L194.0 261.1 L195.0 261.1 L196.0 261.1 L197.0 261.1 L198.0 261.1 L199.0 261.1 L200.0 261.1 L201.0 261.1 L202.0 261.1 L203.0 261.1 L204.0 261.1 L205.0 261.1 L206.0 261.1 L207.0 261.1 L208.0 261.1 L209.0 261.1 L210.0 261.1 L211.0 261.1 L212.0 261.1 L213.0 261.1 L214.0 261.1 L215.0 261.1 L216.0 261.1 L217.0 261.1 L218.0 261.1 L219.0 261.1 L220.0 261.1 L221.0 261.1 L222.0 261.1 L223.0 261.1 L224.0 261.1 L225.0 261.1 L226.0 261.1 L227.0 261.1 L228.0 261.1 L229.0 261.1 L230.0 261.1 L231.0 261.1 L232.0 261.1 L233.0 261.1 L234.0 261.1 L235.0 261.1 L236.0 261.1 L237.0 261.1 L238.0 261.1 L239.0 261.1 L240.0 261.1 L241.0 261.1 L242.0 261.1 L243.0 261.1 L244.0 261.1 L245.0 261.1 L246.0 261.1 L247.0 261.1 L248.0 261.1 L249.0 261.1 L250.0 261.1 L251.0 261.1 L252.0 261.1 L253.0 261.1 L254.0 261.1 L255.0 261.1 L256.0 261.1 L257.0 261.1 L258.0 261.1 L259.0 261.1 L260.0 261.1 L261.0 261.1 L262.0 261.1 L263.0 261.1 L264.0 261.1 L265.0 261.1 L266.0 261.1 L267.0 261.1 L268.0 261.1 L269.0 261.1 L270.0 261.1 L271.0 261.1 L272.0 261.1 L273.0 261.1 L274.0 261.1 L275.0 261.1 L276.0 261.1 L277.0 261.1 L278.0 261.1 L279.0 261.1 L280.0 261.1 L281.0 261.1 L282.0 261.1 L283.0 261.1 L284.0 261.1 L285.0 261.1 L286.0 261.1 L287.0 261.1 L288.0 261.1 L289.0 261.1 L290.0 261.1 L291.0 261.1 L292.0 261.1 L293.0 261.1 L294.0 261.1 L295.0 261.1 L296.0 261.1 L297.0 261.1 L298.0 261.1 L299.0 261.1 L300.0 261.1 L301.0 261.1 L302.0 261.1 L303.0 261.1 L304.0 261.1 L305.0 261.1 L306.0 261.0 L307.0 261.0 L308.0 261.0 L309.0 261.0 L310.0 261.0 L311.0 261.0 L312.0 261.0 L313.0 261.0 L314.0 261.0 L315.0 261.0 L316.0 260.9 L317.0 260.9 L318.0 260.9 L319.0 260.9 L320.0 260.9 L321.0 260.9 L322.0 260.9 L323.0 260.9 L324.0 260.9 L325.0 260.9 L326.0 260.8 L327.0 260.8 L328.0 260.8 L329.0 260.8 L330.0 260.8 L331.0 260.8 L332.0 260.8 L333.0 260.8 L334.0 260.7 L335.0 260.7 L336.0 260.7 L337.0 260.7 L338.0 260.7 L339.0 260.7 L340.0 260.7 L341.0 260.7 L342.0 260.6 L343.0 260.6 L344.0 260.6 L345.0 260.6 L346.0 260.6 L347.0 260.6 L348.0 260.6 L349.0 260.6 L350.0 260.5 L351.0 260.5 L352.0 260.5 L353.0 260.5 L354.0 260.5 L355.0 260.5 L356.0 260.5 L357.0 260.4 L358.0 260.4 L359.0 260.4 L360.0 260.4 L361.0 260.4 L362.0 260.4 L363.0 260.3 L364.0 260.3 L365.0 260.3 L366.0 260.3 L367.0 260.3 L368.0 260.3 L369.0 260.3 L370.0 260.2 L371.0 260.2 L372.0 260.2 L373.0 260.2 L374.0 260.2 L375.0 260.2 L376.0 260.1 L377.0 260.1 L378.0 260.1 L379.0 260.1 L380.0 260.1 L381.0 260.0 L382.0 260.0 L383.0 260.0 L384.0 260.0 L385.0 260.0 L386.0 260.0 L387.0 259.9 L388.0 259.9 L389.0 259.9 L390.0 259.9 L391.0 259.9 L392.0 259.8 L393.0 259.8 L394.0 259.8 L395.0 259.8 L396.0 259.8 L397.0 259.7 L398.0 259.7 L399.0 259.7 L400.0 259.7 L401.0 259.7 L402.0 259.6 L403.0 259.6 L404.0 259.6 L405.0 259.6 L406.0 259.5 L407.0 259.5 L408.0 259.5 L409.0 259.5 L410.0 259.5 L411.0 259.4 L412.0 259.4 L413.0 259.4 L414.0 259.4 L415.0 259.3 L416.0 259.3 L417.0 259.3 L418.0 259.3 L419.0 259.2 L420.0 259.2 L421.0 259.2 L422.0 259.2 L423.0 259.1 L424.0 259.1 L425.0 259.1 L426.0 259.1 L427.0 259.0 L428.0 259.0 L429.0 259.0 L430.0 259.0 L431.0 258.9 L432.0 258.9 L433.0 258.9 L434.0 258.9 L435.0 258.8 L436.0 258.8 L437.0 258.8 L438.0 258.8 L439.0 258.7 L440.0 258.7 L441.0 258.7 L442.0 258.6 L443.0 258.6 L444.0 258.6 L445.0 258.6 L446.0 258.5 L447.0 258.5 L448.0 258.5 L449.0 258.4 L450.0 258.4 L451.0 258.4 L452.0 258.3 L453.0 258.3 L454.0 258.3 L455.0 258.3 L456.0 258.2 L457.0 258.2 L458.0 258.2 L459.0 258.1 L460.0 258.1 L461.0 258.1 L462.0 258.0 L463.0 258.0 L464.0 258.0 L465.0 257.9 L466.0 257.9 L467.0 257.9 L468.0 257.8 L469.0 257.8 L470.0 257.8 L471.0 257.7 L472.0 257.7 L473.0 257.7 L474.0 257.6 L475.0 257.6 L476.0 257.6 L477.0 257.5 L478.0 257.5 L479.0 257.5 L480.0 257.4 L481.0 257.4 L482.0 257.3 L483.0 257.3 L484.0 257.3 L485.0 257.2 L486.0 257.2 L487.0 257.2 L488.0 257.1 L489.0 257.1 L490.0 257.0 L491.0 257.0 L492.0 257.0 L493.0 256.9 L494.0 256.9 L495.0 256.8 L496.0 256.8 L497.0 256.8 L498.0 256.7 L499.0 256.7 L500.0 256.6 L501.0 256.6 L502.0 256.6 L503.0 256.5 L504.0 256.5 L505.0 256.4 L506.0 256.4 L507.0 256.4 L508.0 256.3 L509.0 256.3 L510.0 256.2 L511.0 256.2 L512.0 256.1 L513.0 256.1 L514.0 256.1 L515.0 256.0 L516.0 256.0 L517.0 255.9 L518.0 255.9 L519.0 255.8 L520.0 255.8 L521.0 255.7 L522.0 255.7 L523.0 255.7 L524.0 255.6 L525.0 255.6 L526.0 255.5 L527.0 255.5 L528.0 255.4 L529.0 255.4 L530.0 255.3 L531.0 255.3 L532.0 255.2 L533.0 255.2 L534.0 255.1 L535.0 255.1 L536.0 255.0 L537.0 255.0 L538.0 254.9 L539.0 254.9 L540.0 254.8 L541.0 254.8 L542.0 254.7 L543.0 254.7 L544.0 254.6 L545.0 254.6 L546.0 254.5 L547.0 254.5 L548.0 254.4 L549.0 254.4 L550.0 254.3 L551.0 254.3 L552.0 254.3 L553.0 254.2 L554.0 254.2 L555.0 254.2 L556.0 254.2 L557.0 254.1 L558.0 254.1 L559.0 254.1 L560.0 254.1 L561.0 254.0 L562.0 254.0 L563.0 254.0 L564.0 254.0 L565.0 253.9 L566.0 253.9 L567.0 253.9 L568.0 253.8 L569.0 253.8 L570.0 253.8 L571.0 253.8 L572.0 253.7 L573.0 253.7 L574.0 253.7 L575.0 253.7 L576.0 253.6 L577.0 253.6 L578.0 253.6 L579.0 253.6 L580.0 253.5 L581.0 253.5 L582.0 253.5 L583.0 253.4 L584.0 253.4 L585.0 253.4 L586.0 253.4 L587.0 253.3 L588.0 253.3 L589.0 253.3 L590.0 253.3 L591.0 253.2 L592.0 253.2 L593.0 253.2 L594.0 253.2 L595.0 253.1 L596.0 253.1 L597.0 253.1 L598.0 253.0 L599.0 253.0 L600.0 253.0 L601.0 253.0 L602.0 252.9 L603.0 252.9 L604.0 252.9 L605.0 252.9 L606.0 252.8 L607.0 252.8 L608.0 252.8 L609.0 252.7 L610.0 252.7 L611.0 252.7 L612.0 252.7 L613.0 252.6 L614.0 252.6 L615.0 252.6 L616.0 252.6 L617.0 252.5 L618.0 252.5 L619.0 252.5 L620.0 252.4 L621.0 252.4 L622.0 252.4 L623.0 252.4 L624.0 252.3 L625.0 252.3 L626.0 252.3 L627.0 252.2 L628.0 252.2 L629.0 252.2 L630.0 252.2 L631.0 252.1 L632.0 252.1 L633.0 252.1 L634.0 252.1 L635.0 252.0 L636.0 252.0 L637.0 252.0 L638.0 251.9 L639.0 251.9 L640.0 251.9 L641.0 251.9 L642.0 251.8 L643.0 251.8 L644.0 251.8 L645.0 251.8 L646.0 251.7 L647.0 251.7 L648.0 251.7 L649.0 251.6 L650.0 251.6 L651.0 251.6 L652.0 251.6 L653.0 251.5 L654.0 251.5 L655.0 251.5 L656.0 251.4 L657.0 251.4 L658.0 251.4 L659.0 251.4 L660.0 251.3 L661.0 251.3 L662.0 251.3 L663.0 251.3 L664.0 251.2 L665.0 251.2 L666.0 251.2 L667.0 251.1 L668.0 251.1 L669.0 251.1 L670.0 251.1 L671.0 251.0 L672.0 251.0 L673.0 251.0 L674.0 251.0 L675.0 250.9 L676.0 250.9 L677.0 250.9 L678.0 250.8 L679.0 250.8 L680.0 250.8 L681.0 250.8 L682.0 250.7 L683.0 250.7 L684.0 250.7 L685.0 250.7 L686.0 250.6 L687.0 250.6 L688.0 250.6 L689.0 250.5 L690.0 250.5 L691.0 250.5 L692.0 250.5 L693.0 250.4 L694.0 250.4 L695.0 250.4 L696.0 250.4 L697.0 250.3 L698.0 250.3 L699.0 250.3 L700.0 250.3 L701.0 250.2 L702.0 250.2 L703.0 250.2 L704.0 250.1 L705.0 250.1 L706.0 250.1 L707.0 250.1 L708.0 250.0 L709.0 250.0 L710.0 250.0 L711.0 250.0 L712.0 249.9 L713.0 249.9 L714.0 249.9 L715.0 249.9 L716.0 249.8 L717.0 249.8 L718.0 249.8 L719.0 249.8 L720.0 249.7 L721.0 249.7 L722.0 249.7 L723.0 249.7 L724.0 249.6 L725.0 249.6 L726.0 249.6 L727.0 249.5 L728.0 249.5 L729.0 249.5 L730.0 249.5 L731.0 249.4 L732.0 249.4 L733.0 249.4 L734.0 249.4 L735.0 249.3 L736.0 249.3 L737.0 249.3 L738.0 249.3 L739.0 249.2 L740.0 249.2 L741.0 249.2 L742.0 249.2 L743.0 249.1 L744.0 249.1 L745.0 249.1 L746.0 249.1 L747.0 249.0 L748.0 249.0 L749.0 249.0 L750.0 249.0 L751.0 248.9 L752.0 248.9 L753.0 248.9 L754.0 248.9 L755.0 248.8 L756.0 248.8 L757.0 248.8 L758.0 248.8 L759.0 248.8 L760.0 248.7 L761.0 248.7 L762.0 248.7 L763.0 248.7 L764.0 248.6 L765.0 248.6 L766.0 248.6 L767.0 248.6 L768.0 248.5 L769.0 248.5 L770.0 248.5 L771.0 248.5 L772.0 248.4 L773.0 248.4 L774.0 248.4 L775.0 248.4 L776.0 248.4 L777.0 248.3 L778.0 248.3 L779.0 248.3 L780.0 248.3 L781.0 248.2 L782.0 248.2 L783.0 248.2 L784.0 248.2 L785.0 248.1 L786.0 248.1 L787.0 248.1 L788.0 248.1 L789.0 248.1 L790.0 248.0 L791.0 248.0 L792.0 248.0 L793.0 248.0 L794.0 248.0 L795.0 247.9 L796.0 247.9 L797.0 247.9 L798.0 247.9 L799.0 247.9 L800.0 247.8 L801.0 247.8 L802.0 247.8 L803.0 247.8 L804.0 247.8 L805.0 247.7 L806.0 247.7 L807.0 247.7 L808.0 247.7 L809.0 247.7 L810.0 247.6 L811.0 247.6 L812.0 247.6 L813.0 247.6 L814.0 247.6 L815.0 247.5 L816.0 247.5 L817.0 247.5 L818.0 247.5 L819.0 247.5 L820.0 247.5 L821.0 247.4 L822.0 247.4 L823.0 247.4 L824.0 247.4 L825.0 247.4 L826.0 247.4 L827.0 247.3 L828.0 247.3 L829.0 247.3 L830.0 247.3 L831.0 247.3 L832.0 247.3 L833.0 247.3 L834.0 247.2 L835.0 247.2 L836.0 247.2 L837.0 247.2 L838.0 247.2 L839.0 247.2 L840.0 247.1 L841.0 247.1 L842.0 247.1 L843.0 247.1 L844.0 247.1 L845.0 247.1 L846.0 247.1 L847.0 247.1 L848.0 247.0 L849.0 247.0 L850.0 247.0 L851.0 247.0 L852.0 247.0 L853.0 247.0 L854.0 247.0 L855.0 247.0 L856.0 246.9 L857.0 246.9 L858.0 246.9 L859.0 246.9 L860.0 246.9 L861.0 246.9 L862.0 246.9 L863.0 246.9 L864.0 246.8 L865.0 246.8 L866.0 246.8 L867.0 246.8 L868.0 246.8 L869.0 246.8 L870.0 246.8 L871.0 246.8 L872.0 246.8 L873.0 246.8 L874.0 246.7 L875.0 246.7 L876.0 246.7 L877.0 246.7 L878.0 246.7 L879.0 246.7 L880.0 246.7 L881.0 246.7 L882.0 246.7 L883.0 246.7 L884.0 246.7 L885.0 246.6 L886.0 246.6 L887.0 246.6 L888.0 246.6 L889.0 246.6 L890.0 246.6 L891.0 246.6 L892.0 246.6 L893.0 246.6 L894.0 246.6 L895.0 246.6 L896.0 246.6 L897.0 246.6 L898.0 246.5 L899.0 246.5 L900.0 246.5 L901.0 246.5 L902.0 246.5 L903.0 246.5 L904.0 246.5 L905.0 246.5 L906.0 246.5 L907.0 246.5 L908.0 246.5 L909.0 246.5 L910.0 246.5 L911.0 246.5 L912.0 246.5 L913.0 246.4 L914.0 246.4 L915.0 246.4 L916.0 246.4 L917.0 246.4 L918.0 246.4 L919.0 246.4 L920.0 246.4 L921.0 246.4 L922.0 246.4 L923.0 246.4 L924.0 246.4 L925.0 246.4 L926.0 246.4 L927.0 246.4 L928.0 246.4 L929.0 246.4 L930.0 246.4 L931.0 246.3 L932.0 246.3 L933.0 246.3 L934.0 246.3 L935.0 246.3 L936.0 246.3 L937.0 246.3 L938.0 246.3 L939.0 246.3 L940.0 246.3 L941.0 246.3 L942.0 246.3 L943.0 246.3 L944.0 246.3 L945.0 246.3 L946.0 246.3 L947.0 246.3 L948.0 246.3 L949.0 246.3 L950.0 246.3 L951.0 246.3 L952.0 246.3 L953.0 246.3 L954.0 246.2 L955.0 246.2 L956.0 246.2 L957.0 246.2 L958.0 246.2 L959.0 246.2 L960.0 246.2 L961.0 246.2 L962.0 246.2 L963.0 246.2 L964.0 246.2 L965.0 246.2 L966.0 246.2 L967.0 246.2 L968.0 246.2 L969.0 246.2 L970.0 246.2 L971.0 246.2 L972.0 246.2 L973.0 246.2 L974.0 246.2 L975.0 246.2 L976.0 246.2 L977.0 246.2 L978.0 246.2 L979.0 246.2 L980.0 246.2 L981.0 246.2 L982.0 246.2" fill="none" stroke="#7a7a7a" stroke-width="1" stroke-dasharray="1.2 1.8"/>
<path d="M-2.0 232.8 L-1.0 232.8 L0.0 232.8 L1.0 232.8 L2.0 232.8 L3.0 232.8 L4.0 232.8 L5.0 232.8 L6.0 232.8 L7.0 232.8 L8.0 232.8 L9.0 232.8 L10.0 232.8 L11.0 232.9 L12.0 232.9 L13.0 232.9 L14.0 232.9 L15.0 232.9 L16.0 232.9 L17.0 232.9 L18.0 232.9 L19.0 232.9 L20.0 232.9 L21.0 232.9 L22.0 232.9 L23.0 232.9 L24.0 232.9 L25.0 232.9 L26.0 232.9 L27.0 232.9 L28.0 233.0 L29.0 233.0 L30.0 233.0 L31.0 233.0 L32.0 233.0 L33.0 233.0 L34.0 233.0 L35.0 233.0 L36.0 233.0 L37.0 233.0 L38.0 233.0 L39.0 233.0 L40.0 233.0 L41.0 233.0 L42.0 233.0 L43.0 233.1 L44.0 233.1 L45.0 233.1 L46.0 233.1 L47.0 233.1 L48.0 233.1 L49.0 233.1 L50.0 233.1 L51.0 233.1 L52.0 233.1 L53.0 233.1 L54.0 233.1 L55.0 233.1 L56.0 233.2 L57.0 233.2 L58.0 233.2 L59.0 233.2 L60.0 233.2 L61.0 233.2 L62.0 233.2 L63.0 233.2 L64.0 233.2 L65.0 233.2 L66.0 233.2 L67.0 233.3 L68.0 233.3 L69.0 233.3 L70.0 233.3 L71.0 233.3 L72.0 233.3 L73.0 233.3 L74.0 233.3 L75.0 233.3 L76.0 233.3 L77.0 233.4 L78.0 233.4 L79.0 233.4 L80.0 233.4 L81.0 233.4 L82.0 233.4 L83.0 233.4 L84.0 233.4 L85.0 233.4 L86.0 233.5 L87.0 233.5 L88.0 233.5 L89.0 233.5 L90.0 233.5 L91.0 233.5 L92.0 233.5 L93.0 233.5 L94.0 233.6 L95.0 233.6 L96.0 233.6 L97.0 233.6 L98.0 233.6 L99.0 233.6 L100.0 233.6 L101.0 233.6 L102.0 233.7 L103.0 233.7 L104.0 233.7 L105.0 233.7 L106.0 233.7 L107.0 233.7 L108.0 233.7 L109.0 233.8 L110.0 233.8 L111.0 233.8 L112.0 233.8 L113.0 233.8 L114.0 233.8 L115.0 233.9 L116.0 233.9 L117.0 233.9 L118.0 233.9 L119.0 233.9 L120.0 233.9 L121.0 234.0 L122.0 234.0 L123.0 234.0 L124.0 234.0 L125.0 234.0 L126.0 234.0 L127.0 234.1 L128.0 234.1 L129.0 234.1 L130.0 234.1 L131.0 234.1 L132.0 234.2 L133.0 234.2 L134.0 234.2 L135.0 234.2 L136.0 234.2 L137.0 234.3 L138.0 234.3 L139.0 234.3 L140.0 234.3 L141.0 234.3 L142.0 234.4 L143.0 234.4 L144.0 234.4 L145.0 234.4 L146.0 234.5 L147.0 234.5 L148.0 234.5 L149.0 234.5 L150.0 234.6 L151.0 234.6 L152.0 234.6 L153.0 234.6 L154.0 234.7 L155.0 234.7 L156.0 234.7 L157.0 234.7 L158.0 234.8 L159.0 234.8 L160.0 234.8 L161.0 234.8 L162.0 234.9 L163.0 234.9 L164.0 234.9 L165.0 235.0 L166.0 235.0 L167.0 235.0 L168.0 235.1 L169.0 235.1 L170.0 235.1 L171.0 235.2 L172.0 235.2 L173.0 235.2 L174.0 235.3 L175.0 235.3 L176.0 235.3 L177.0 235.4 L178.0 235.4 L179.0 235.4 L180.0 235.5 L181.0 235.5 L182.0 235.6 L183.0 235.6 L184.0 235.6 L185.0 235.7 L186.0 235.7 L187.0 235.8 L188.0 235.8 L189.0 235.9 L190.0 235.9 L191.0 235.9 L192.0 236.0 L193.0 236.0 L194.0 236.1 L195.0 236.1 L196.0 236.2 L197.0 236.2 L198.0 236.3 L199.0 236.4 L200.0 236.4 L201.0 236.5 L202.0 236.5 L203.0 236.6 L204.0 236.6 L205.0 236.7 L206.0 236.8 L207.0 236.8 L208.0 236.9 L209.0 237.0 L210.0 237.0 L211.0 237.1 L212.0 237.2 L213.0 237.2 L214.0 237.3 L215.0 237.4 L216.0 237.5 L217.0 237.5 L218.0 237.6 L219.0 237.7 L220.0 237.8 L221.0 237.9 L222.0 238.0 L223.0 238.1 L224.0 238.2 L225.0 238.3 L226.0 238.4 L227.0 238.5 L228.0 238.6 L229.0 238.7 L230.0 238.8 L231.0 238.9 L232.0 239.0 L233.0 239.1 L234.0 239.3 L235.0 239.4 L236.0 239.5 L237.0 239.7 L238.0 239.8 L239.0 240.0 L240.0 240.1 L241.0 240.3 L242.0 240.4 L243.0 240.6 L244.0 240.8 L245.0 241.0 L246.0 241.1 L247.0 241.3 L248.0 241.5 L249.0 241.7 L250.0 242.0 L251.0 242.2 L252.0 242.4 L253.0 242.7 L254.0 242.9 L255.0 243.2 L256.0 243.5 L257.0 243.7 L258.0 244.0 L259.0 244.3 L260.0 244.7 L261.0 245.0 L262.0 245.4 L263.0 245.7 L264.0 246.1 L265.0 246.5 L266.0 246.9 L267.0 247.4 L268.0 247.9 L269.0 248.3 L270.0 248.8 L271.0 249.4 L272.0 249.9 L273.0 250.5 L274.0 251.1 L275.0 251.7 L276.0 252.4 L277.0 253.0 L278.0 253.7 L279.0 254.5 L280.0 255.2 L281.0 256.0 L282.0 256.8 L283.0 257.6 L284.0 258.4 L285.0 259.3 L286.0 260.1 L287.0 261.0 L288.0 261.8 L289.0 262.8 L290.0 263.9 L291.0 264.9 L292.0 265.9 L293.0 266.9 L294.0 267.9 L295.0 268.8 L296.0 269.7 L297.0 270.6 L298.0 271.5 L299.0 272.3 L300.0 273.1 L301.0 273.8 L302.0 274.5 L303.0 275.2 L304.0 275.9 L305.0 276.5 L306.0 277.1 L307.0 277.6 L308.0 278.2 L309.0 278.7 L310.0 279.2 L311.0 279.6 L312.0 280.0 L313.0 280.5 L314.0 280.9 L315.0 281.2 L316.0 281.6 L317.0 281.9 L318.0 282.2 L319.0 282.6 L320.0 282.9 L321.0 283.1 L322.0 283.4 L323.0 283.7 L324.0 283.9 L325.0 284.2 L326.0 284.4 L327.0 284.6 L328.0 284.8 L329.0 285.0 L330.0 285.2 L331.0 285.4 L332.0 285.6 L333.0 285.8 L334.0 285.9 L335.0 286.1 L336.0 286.2 L337.0 286.4 L338.0 286.5 L339.0 286.7 L340.0 286.8 L341.0 287.0 L342.0 287.1 L343.0 287.2 L344.0 287.3 L345.0 287.4 L346.0 287.6 L347.0 287.7 L348.0 287.8 L349.0 287.9 L350.0 288.0 L351.0 288.1 L352.0 288.2 L353.0 288.3 L354.0 288.4 L355.0 288.4 L356.0 288.5 L357.0 288.6 L358.0 288.7 L359.0 288.8 L360.0 288.9 L361.0 288.9 L362.0 289.0 L363.0 289.1 L364.0 289.1 L365.0 289.2 L366.0 289.3 L367.0 289.3 L368.0 289.4 L369.0 289.5 L370.0 289.5 L371.0 289.6 L372.0 289.7 L373.0 289.7 L374.0 289.8 L375.0 289.8 L376.0 289.9 L377.0 289.9 L378.0 290.0 L379.0 290.0 L380.0 290.1 L381.0 290.1 L382.0 290.2 L383.0 290.2 L384.0 290.3 L385.0 290.3 L386.0 290.4 L387.0 290.4 L388.0 290.5 L389.0 290.5 L390.0 290.5 L391.0 290.6 L392.0 290.6 L393.0 290.7 L394.0 290.7 L395.0 290.7 L396.0 290.8 L397.0 290.8 L398.0 290.8 L399.0 290.9 L400.0 290.9 L401.0 290.9 L402.0 291.0 L403.0 291.0 L404.0 291.0 L405.0 291.1 L406.0 291.1 L407.0 291.1 L408.0 291.2 L409.0 291.2 L410.0 291.2 L411.0 291.3 L412.0 291.3 L413.0 291.3 L414.0 291.4 L415.0 291.4 L416.0 291.4 L417.0 291.4 L418.0 291.5 L419.0 291.5 L420.0 291.5 L421.0 291.5 L422.0 291.6 L423.0 291.6 L424.0 291.6 L425.0 291.6 L426.0 291.7 L427.0 291.7 L428.0 291.7 L429.0 291.7 L430.0 291.8 L431.0 291.8 L432.0 291.8 L433.0 291.8 L434.0 291.8 L435.0 291.9 L436.0 291.9 L437.0 291.9 L438.0 291.9 L439.0 291.9 L440.0 292.0 L441.0 292.0 L442.0 292.0 L443.0 292.0 L444.0 292.0 L445.0 292.1 L446.0 292.1 L447.0 292.1 L448.0 292.1 L449.0 292.1 L450.0 292.1 L451.0 292.2 L452.0 292.2 L453.0 292.2 L454.0 292.2 L455.0 292.2 L456.0 292.2 L457.0 292.3 L458.0 292.3 L459.0 292.3 L460.0 292.3 L461.0 292.3 L462.0 292.3 L463.0 292.4 L464.0 292.4 L465.0 292.4 L466.0 292.4 L467.0 292.4 L468.0 292.4 L469.0 292.4 L470.0 292.5 L471.0 292.5 L472.0 292.5 L473.0 292.5 L474.0 292.5 L475.0 292.5 L476.0 292.5 L477.0 292.5 L478.0 292.6 L479.0 292.6 L480.0 292.6 L481.0 292.6 L482.0 292.6 L483.0 292.6 L484.0 292.6 L485.0 292.6 L486.0 292.7 L487.0 292.7 L488.0 292.7 L489.0 292.7 L490.0 292.7 L491.0 292.7 L492.0 292.7 L493.0 292.7 L494.0 292.7 L495.0 292.8 L496.0 292.8 L497.0 292.8 L498.0 292.8 L499.0 292.8 L500.0 292.8 L501.0 292.8 L502.0 292.8 L503.0 292.8 L504.0 292.8 L505.0 292.9 L506.0 292.9 L507.0 292.9 L508.0 292.9 L509.0 292.9 L510.0 292.9 L511.0 292.9 L512.0 292.9 L513.0 292.9 L514.0 292.9 L515.0 292.9 L516.0 293.0 L517.0 293.0 L518.0 293.0 L519.0 293.0 L520.0 293.0 L521.0 293.0 L522.0 293.0 L523.0 293.0 L524.0 293.0 L525.0 293.0 L526.0 293.0 L527.0 293.0 L528.0 293.0 L529.0 293.1 L530.0 293.1 L531.0 293.1 L532.0 293.1 L533.0 293.1 L534.0 293.1 L535.0 293.1 L536.0 293.1 L537.0 293.1 L538.0 293.1 L539.0 293.1 L540.0 293.1 L541.0 293.1 L542.0 293.1 L543.0 293.2 L544.0 293.2 L545.0 293.2 L546.0 293.2 L547.0 293.2 L548.0 293.2 L549.0 293.2 L550.0 293.2 L551.0 293.2 L552.0 293.2 L553.0 293.2 L554.0 293.2 L555.0 293.2 L556.0 293.2 L557.0 293.2 L558.0 293.2 L559.0 293.2 L560.0 293.3 L561.0 293.3 L562.0 293.3 L563.0 293.3 L564.0 293.3 L565.0 293.3 L566.0 293.3 L567.0 293.3 L568.0 293.3 L569.0 293.3 L570.0 293.3 L571.0 293.3 L572.0 293.3 L573.0 293.3 L574.0 293.3 L575.0 293.3 L576.0 293.3 L577.0 293.3 L578.0 293.3 L579.0 293.3 L580.0 293.3 L581.0 293.4 L582.0 293.4 L583.0 293.4 L584.0 293.4 L585.0 293.4 L586.0 293.4 L587.0 293.4 L588.0 293.4 L589.0 293.4 L590.0 293.4 L591.0 293.4 L592.0 293.4 L593.0 293.4 L594.0 293.4 L595.0 293.4 L596.0 293.4 L597.0 293.4 L598.0 293.4 L599.0 293.4 L600.0 293.4 L601.0 293.4 L602.0 293.4 L603.0 293.4 L604.0 293.4 L605.0 293.4 L606.0 293.4 L607.0 293.5 L608.0 293.5 L609.0 293.5 L610.0 293.5 L611.0 293.5 L612.0 293.5 L613.0 293.5 L614.0 293.5 L615.0 293.5 L616.0 293.5 L617.0 293.5 L618.0 293.5 L619.0 293.5 L620.0 293.5 L621.0 293.5 L622.0 293.5 L623.0 293.5 L624.0 293.5 L625.0 293.5 L626.0 293.5 L627.0 293.5 L628.0 293.5 L629.0 293.5 L630.0 293.5 L631.0 293.5 L632.0 293.5 L633.0 293.5 L634.0 293.5 L635.0 293.5 L636.0 293.5 L637.0 293.5 L638.0 293.5 L639.0 293.5 L640.0 293.5 L641.0 293.5 L642.0 293.6 L643.0 293.6 L644.0 293.6 L645.0 293.6 L646.0 293.6 L647.0 293.6 L648.0 293.6 L649.0 293.6 L650.0 293.6 L651.0 293.6 L652.0 293.6 L653.0 293.6 L654.0 293.6 L655.0 293.6 L656.0 293.6 L657.0 293.6 L658.0 293.6 L659.0 293.6 L660.0 293.6 L661.0 293.6 L662.0 293.6 L663.0 293.6 L664.0 293.6 L665.0 293.6 L666.0 293.6 L667.0 293.6 L668.0 293.6 L669.0 293.6 L670.0 293.6 L671.0 293.6 L672.0 293.6 L673.0 293.6 L674.0 293.6 L675.0 293.6 L676.0 293.6 L677.0 293.6 L678.0 293.6 L679.0 293.6 L680.0 293.6 L681.0 293.6 L682.0 293.6 L683.0 293.6 L684.0 293.6 L685.0 293.6 L686.0 293.6 L687.0 293.6 L688.0 293.6 L689.0 293.6 L690.0 293.6 L691.0 293.6 L692.0 293.6 L693.0 293.6 L694.0 293.6 L695.0 293.7 L696.0 293.7 L697.0 293.7 L698.0 293.7 L699.0 293.7 L700.0 293.7 L701.0 293.7 L702.0 293.7 L703.0 293.7 L704.0 293.7 L705.0 293.7 L706.0 293.7 L707.0 293.7 L708.0 293.7 L709.0 293.7 L710.0 293.7 L711.0 293.7 L712.0 293.7 L713.0 293.7 L714.0 293.7 L715.0 293.7 L716.0 293.7 L717.0 293.7 L718.0 293.7 L719.0 293.7 L720.0 293.7 L721.0 293.7 L722.0 293.7 L723.0 293.7 L724.0 293.7 L725.0 293.7 L726.0 293.7 L727.0 293.7 L728.0 293.7 L729.0 293.7 L730.0 293.7 L731.0 293.7 L732.0 293.7 L733.0 293.7 L734.0 293.7 L735.0 293.7 L736.0 293.7 L737.0 293.7 L738.0 293.7 L739.0 293.7 L740.0 293.7 L741.0 293.7 L742.0 293.7 L743.0 293.7 L744.0 293.7 L745.0 293.7 L746.0 293.7 L747.0 293.7 L748.0 293.7 L749.0 293.7 L750.0 293.7 L751.0 293.7 L752.0 293.7 L753.0 293.7 L754.0 293.7 L755.0 293.7 L756.0 293.7 L757.0 293.7 L758.0 293.7 L759.0 293.7 L760.0 293.7 L761.0 293.7 L762.0 293.7 L763.0 293.7 L764.0 293.7 L765.0 293.7 L766.0 293.7 L767.0 293.7 L768.0 293.7 L769.0 293.7 L770.0 293.7 L771.0 293.7 L772.0 293.7 L773.0 293.7 L774.0 293.7 L775.0 293.7 L776.0 293.7 L777.0 293.7 L778.0 293.7 L779.0 293.7 L780.0 293.7 L781.0 293.7 L782.0 293.7 L783.0 293.7 L784.0 293.7 L785.0 293.7 L786.0 293.7 L787.0 293.7 L788.0 293.7 L789.0 293.7 L790.0 293.7 L791.0 293.7 L792.0 293.7 L793.0 293.7 L794.0 293.7 L795.0 293.7 L796.0 293.7 L797.0 293.7 L798.0 293.7 L799.0 293.7 L800.0 293.7 L801.0 293.7 L802.0 293.7 L803.0 293.7 L804.0 293.7 L805.0 293.7 L806.0 293.7 L807.0 293.7 L808.0 293.7 L809.0 293.7 L810.0 293.7 L811.0 293.8 L812.0 293.8 L813.0 293.8 L814.0 293.8 L815.0 293.8 L816.0 293.8 L817.0 293.8 L818.0 293.8 L819.0 293.8 L820.0 293.8 L821.0 293.8 L822.0 293.8 L823.0 293.8 L824.0 293.8 L825.0 293.8 L826.0 293.8 L827.0 293.8 L828.0 293.8 L829.0 293.8 L830.0 293.8 L831.0 293.8 L832.0 293.8 L833.0 293.8 L834.0 293.8 L835.0 293.8 L836.0 293.8 L837.0 293.8 L838.0 293.8 L839.0 293.8 L840.0 293.8 L841.0 293.8 L842.0 293.8 L843.0 293.8 L844.0 293.8 L845.0 293.8 L846.0 293.8 L847.0 293.8 L848.0 293.8 L849.0 293.8 L850.0 293.8 L851.0 293.8 L852.0 293.8 L853.0 293.8 L854.0 293.8 L855.0 293.8 L856.0 293.8 L857.0 293.8 L858.0 293.8 L859.0 293.8 L860.0 293.8 L861.0 293.8 L862.0 293.8 L863.0 293.8 L864.0 293.8 L865.0 293.8 L866.0 293.8 L867.0 293.8 L868.0 293.8 L869.0 293.8 L870.0 293.8 L871.0 293.8 L872.0 293.8 L873.0 293.8 L874.0 293.8 L875.0 293.8 L876.0 293.8 L877.0 293.8 L878.0 293.8 L879.0 293.8 L880.0 293.8 L881.0 293.8 L882.0 293.8 L883.0 293.8 L884.0 293.8 L885.0 293.8 L886.0 293.8 L887.0 293.8 L888.0 293.8 L889.0 293.8 L890.0 293.8 L891.0 293.8 L892.0 293.8 L893.0 293.8 L894.0 293.8 L895.0 293.8 L896.0 293.8 L897.0 293.8 L898.0 293.8 L899.0 293.8 L900.0 293.8 L901.0 293.8 L902.0 293.8 L903.0 293.8 L904.0 293.8 L905.0 293.8 L906.0 293.8 L907.0 293.8 L908.0 293.8 L909.0 293.8 L910.0 293.8 L911.0 293.8 L912.0 293.8 L913.0 293.8 L914.0 293.8 L915.0 293.8 L916.0 293.8 L917.0 293.8 L918.0 293.8 L919.0 293.8 L920.0 293.8 L921.0 293.8 L922.0 293.8 L923.0 293.8 L924.0 293.8 L925.0 293.8 L926.0 293.8 L927.0 293.8 L928.0 293.8 L929.0 293.8 L930.0 293.8 L931.0 293.8 L932.0 293.8 L933.0 293.8 L934.0 293.8 L935.0 293.8 L936.0 293.8 L937.0 293.8 L938.0 293.8 L939.0 293.8 L940.0 293.8 L941.0 293.8 L942.0 293.8 L943.0 293.8 L944.0 293.8 L945.0 293.8 L946.0 293.8 L947.0 293.8 L948.0 293.8 L949.0 293.8 L950.0 293.8 L951.0 293.8 L952.0 293.8 L953.0 293.8 L954.0 293.8 L955.0 293.8 L956.0 293.8 L957.0 293.8 L958.0 293.8 L959.0 293.8 L960.0 293.8 L961.0 293.8 L962.0 293.8 L963.0 293.8 L964.0 293.8 L965.0 293.8 L966.0 293.8 L967.0 293.8 L968.0 293.8 L969.0 293.8 L970.0 293.8 L971.0 293.8 L972.0 293.8 L973.0 293.8 L974.0 293.8 L975.0 293.8 L976.0 293.8 L977.0 293.8 L978.0 293.8 L979.0 293.8 L980.0 293.8 L981.0 293.8 L982.0 293.8" fill="none" stroke="#566860" stroke-width="1.1" stroke-dasharray="1.4 1.6"/>
<rect x="702.6" y="199" width="7.4" height="125" fill="#9ff0c8" opacity=".45"/>
<rect x="904.5" y="200" width="10.5" height="110" fill="#b8f4e4" opacity=".75"/>
<path d="M-2.0 232.8 L-1.0 232.8 L0.0 232.8 L1.0 232.8 L2.0 232.8 L3.0 232.8 L4.0 232.8 L5.0 232.8 L6.0 232.8 L7.0 232.8 L8.0 232.8 L9.0 232.8 L10.0 232.8 L11.0 232.9 L12.0 232.9 L13.0 232.9 L14.0 232.9 L15.0 232.9 L16.0 232.9 L17.0 232.9 L18.0 232.9 L19.0 232.9 L20.0 232.9 L21.0 232.9 L22.0 232.9 L23.0 232.9 L24.0 232.9 L25.0 232.9 L26.0 232.9 L27.0 232.9 L28.0 233.0 L29.0 233.0 L30.0 233.0 L31.0 233.0 L32.0 233.0 L33.0 233.0 L34.0 233.0 L35.0 233.0 L36.0 233.0 L37.0 233.0 L38.0 233.0 L39.0 233.0 L40.0 233.0 L41.0 233.0 L42.0 233.0 L43.0 233.1 L44.0 233.1 L45.0 233.1 L46.0 233.1 L47.0 233.1 L48.0 233.1 L49.0 233.1 L50.0 233.1 L51.0 233.1 L52.0 233.1 L53.0 233.1 L54.0 233.1 L55.0 233.1 L56.0 233.2 L57.0 233.2 L58.0 233.2 L59.0 233.2 L60.0 233.2 L61.0 233.2 L62.0 233.2 L63.0 233.2 L64.0 233.2 L65.0 233.2 L66.0 233.2 L67.0 233.3 L68.0 233.3 L69.0 233.3 L70.0 233.3 L71.0 233.3 L72.0 233.3 L73.0 233.3 L74.0 233.3 L75.0 233.3 L76.0 233.3 L77.0 233.4 L78.0 233.4 L79.0 233.4 L80.0 233.4 L81.0 233.4 L82.0 233.4 L83.0 233.4 L84.0 233.4 L85.0 233.4 L86.0 233.5 L87.0 233.5 L88.0 233.5 L89.0 233.5 L90.0 233.5 L91.0 233.5 L92.0 233.5 L93.0 233.5 L94.0 233.6 L95.0 233.6 L96.0 233.6 L97.0 233.6 L98.0 233.6 L99.0 233.6 L100.0 233.6 L101.0 233.6 L102.0 233.7 L103.0 233.7 L104.0 233.7 L105.0 233.7 L106.0 233.7 L107.0 233.7 L108.0 233.7 L109.0 233.8 L110.0 233.8 L111.0 233.8 L112.0 233.8 L113.0 233.8 L114.0 233.8 L115.0 233.9 L116.0 233.9 L117.0 233.9 L118.0 233.9 L119.0 233.9 L120.0 233.9 L121.0 234.0 L122.0 234.0 L123.0 234.0 L124.0 234.0 L125.0 234.0 L126.0 234.0 L127.0 234.1 L128.0 234.1 L129.0 234.1 L130.0 234.1 L131.0 234.1 L132.0 234.2 L133.0 234.2 L134.0 234.2 L135.0 234.2 L136.0 234.2 L137.0 234.3 L138.0 234.3 L139.0 234.3 L140.0 234.3 L141.0 234.3 L142.0 234.4 L143.0 234.4 L144.0 234.4 L145.0 234.4 L146.0 234.5 L147.0 234.5 L148.0 234.5 L149.0 234.5 L150.0 234.6 L151.0 234.6 L152.0 234.6 L153.0 234.6 L154.0 234.7 L155.0 234.7 L156.0 234.7 L157.0 234.7 L158.0 234.8 L159.0 234.8 L160.0 234.8 L161.0 234.8 L162.0 234.9 L163.0 234.9 L164.0 234.9 L165.0 235.0 L166.0 235.0 L167.0 235.0 L168.0 235.1 L169.0 235.1 L170.0 235.1 L171.0 235.2 L172.0 235.2 L173.0 235.2 L174.0 235.3 L175.0 235.3 L176.0 235.3 L177.0 235.4 L178.0 235.4 L179.0 235.4 L180.0 235.5 L181.0 235.5 L182.0 235.6 L183.0 235.6 L184.0 235.6 L185.0 235.7 L186.0 235.7 L187.0 235.8 L188.0 235.8 L189.0 235.9 L190.0 235.9 L191.0 235.9 L192.0 236.0 L193.0 236.0 L194.0 236.1 L195.0 236.1 L196.0 236.2 L197.0 236.2 L198.0 236.3 L199.0 236.4 L200.0 236.4 L201.0 236.5 L202.0 236.5 L203.0 236.6 L204.0 236.6 L205.0 236.7 L206.0 236.8 L207.0 236.8 L208.0 236.9 L209.0 237.0 L210.0 237.0 L211.0 237.1 L212.0 237.2 L213.0 237.2 L214.0 237.3 L215.0 237.4 L216.0 237.5 L217.0 237.5 L218.0 237.6 L219.0 237.7 L220.0 237.8 L221.0 237.9 L222.0 238.0 L223.0 238.1 L224.0 238.2 L225.0 238.3 L226.0 238.4 L227.0 238.5 L228.0 238.6 L229.0 238.7 L230.0 238.8 L231.0 238.9 L232.0 239.0 L233.0 239.1 L234.0 239.3 L235.0 239.4 L236.0 239.5 L237.0 239.7 L238.0 239.8 L239.0 240.0 L240.0 240.1 L241.0 240.3 L242.0 240.4 L243.0 240.6 L244.0 240.8 L245.0 241.0 L246.0 241.1 L247.0 241.3 L248.0 241.5 L249.0 241.7 L250.0 242.0 L251.0 242.2 L252.0 242.4 L253.0 242.7 L254.0 242.9 L255.0 243.2 L256.0 243.5 L257.0 243.7 L258.0 244.0 L259.0 244.3 L260.0 244.7 L261.0 245.0 L262.0 245.4 L263.0 245.7 L264.0 246.1 L265.0 246.5 L266.0 246.9 L267.0 247.4 L268.0 247.9 L269.0 248.3 L270.0 248.8 L271.0 249.4 L272.0 249.9 L273.0 250.5 L274.0 251.1 L275.0 251.7 L276.0 252.4 L277.0 253.0 L278.0 253.7 L279.0 254.5 L280.0 255.2 L281.0 256.0 L282.0 256.8 L283.0 257.6 L284.0 258.4 L285.0 259.3 L286.0 260.1 L287.0 261.0 L288.0 261.8 L289.0 262.8 L290.0 263.9 L291.0 264.9 L292.0 265.9 L293.0 266.9 L294.0 267.9 L295.0 268.8 L296.0 269.7 L297.0 270.6 L298.0 271.5 L299.0 272.3 L300.0 273.1 L301.0 273.8 L302.0 274.5 L303.0 275.2 L304.0 275.9 L305.0 276.5 L306.0 277.1 L307.0 277.6 L308.0 278.2 L309.0 278.7 L310.0 279.2 L311.0 279.6 L312.0 280.0 L313.0 280.5 L314.0 280.9 L315.0 281.2 L316.0 281.6 L317.0 281.9 L318.0 282.2 L319.0 282.6 L320.0 282.9 L321.0 283.1 L322.0 283.4 L323.0 283.7 L324.0 283.9 L325.0 284.2 L326.0 284.4 L327.0 284.6 L328.0 284.8 L329.0 285.0 L330.0 285.2 L331.0 285.4 L332.0 285.6 L333.0 285.8 L334.0 285.9 L335.0 286.1 L336.0 286.3 L337.0 286.4 L338.0 286.6 L339.0 286.7 L340.0 286.9 L341.0 287.0 L342.0 287.1 L343.0 287.3 L344.0 287.4 L345.0 287.5 L346.0 287.6 L347.0 287.7 L348.0 287.9 L349.0 288.0 L350.0 288.1 L351.0 288.2 L352.0 288.3 L353.0 288.4 L354.0 288.5 L355.0 288.6 L356.0 288.7 L357.0 288.7 L358.0 288.8 L359.0 288.9 L360.0 289.0 L361.0 289.1 L362.0 289.2 L363.0 289.2 L364.0 289.3 L365.0 289.4 L366.0 289.4 L367.0 289.5 L368.0 289.6 L369.0 289.7 L370.0 289.7 L371.0 289.8 L372.0 289.8 L373.0 289.9 L374.0 290.0 L375.0 290.0 L376.0 290.1 L377.0 290.1 L378.0 290.2 L379.0 290.3 L380.0 290.3 L381.0 290.4 L382.0 290.4 L383.0 290.5 L384.0 290.5 L385.0 290.6 L386.0 290.6 L387.0 290.7 L388.0 290.7 L389.0 290.8 L390.0 290.8 L391.0 290.9 L392.0 290.9 L393.0 290.9 L394.0 291.0 L395.0 291.0 L396.0 291.1 L397.0 291.1 L398.0 291.2 L399.0 291.2 L400.0 291.2 L401.0 291.3 L402.0 291.3 L403.0 291.3 L404.0 291.4 L405.0 291.4 L406.0 291.5 L407.0 291.5 L408.0 291.5 L409.0 291.6 L410.0 291.6 L411.0 291.6 L412.0 291.7 L413.0 291.7 L414.0 291.7 L415.0 291.8 L416.0 291.8 L417.0 291.8 L418.0 291.9 L419.0 291.9 L420.0 291.9 L421.0 292.0 L422.0 292.0 L423.0 292.0 L424.0 292.0 L425.0 292.1 L426.0 292.1 L427.0 292.1 L428.0 292.2 L429.0 292.2 L430.0 292.2 L431.0 292.2 L432.0 292.3 L433.0 292.3 L434.0 292.3 L435.0 292.3 L436.0 292.4 L437.0 292.4 L438.0 292.4 L439.0 292.4 L440.0 292.5 L441.0 292.5 L442.0 292.5 L443.0 292.5 L444.0 292.6 L445.0 292.6 L446.0 292.6 L447.0 292.6 L448.0 292.7 L449.0 292.7 L450.0 292.7 L451.0 292.7 L452.0 292.7 L453.0 292.8 L454.0 292.8 L455.0 292.8 L456.0 292.8 L457.0 292.8 L458.0 292.9 L459.0 292.9 L460.0 292.9 L461.0 292.9 L462.0 292.9 L463.0 293.0 L464.0 293.0 L465.0 293.0 L466.0 293.0 L467.0 293.0 L468.0 293.1 L469.0 293.1 L470.0 293.1 L471.0 293.1 L472.0 293.1 L473.0 293.1 L474.0 293.2 L475.0 293.2 L476.0 293.2 L477.0 293.2 L478.0 293.2 L479.0 293.3 L480.0 293.3 L481.0 293.3 L482.0 293.3 L483.0 293.3 L484.0 293.3 L485.0 293.4 L486.0 293.4 L487.0 293.4 L488.0 293.4 L489.0 293.4 L490.0 293.4 L491.0 293.4 L492.0 293.5 L493.0 293.5 L494.0 293.5 L495.0 293.5 L496.0 293.5 L497.0 293.5 L498.0 293.6 L499.0 293.6 L500.0 293.6 L501.0 293.6 L502.0 293.6 L503.0 293.6 L504.0 293.6 L505.0 293.7 L506.0 293.7 L507.0 293.7 L508.0 293.7 L509.0 293.7 L510.0 293.7 L511.0 293.7 L512.0 293.7 L513.0 293.8 L514.0 293.8 L515.0 293.8 L516.0 293.8 L517.0 293.8 L518.0 293.8 L519.0 293.8 L520.0 293.9 L521.0 293.9 L522.0 293.9 L523.0 293.9 L524.0 293.9 L525.0 293.9 L526.0 293.9 L527.0 293.9 L528.0 294.0 L529.0 294.0 L530.0 294.0 L531.0 294.0 L532.0 294.0 L533.0 294.0 L534.0 294.0 L535.0 294.0 L536.0 294.0 L537.0 294.1 L538.0 294.1 L539.0 294.1 L540.0 294.1 L541.0 294.1 L542.0 294.1 L543.0 294.1 L544.0 294.1 L545.0 294.1 L546.0 294.2 L547.0 294.2 L548.0 294.2 L549.0 294.2 L550.0 294.2 L551.0 294.2 L552.0 294.2 L553.0 294.2 L554.0 294.2 L555.0 294.2 L556.0 294.3 L557.0 294.3 L558.0 294.3 L559.0 294.3 L560.0 294.3 L560.0 294.3 L560.5 294.3 L561.0 294.3 L561.5 294.3 L562.0 294.3 L562.5 294.3 L563.0 294.3 L563.5 294.3 L564.0 294.3 L564.5 294.3 L565.0 294.3 L565.5 294.3 L566.0 294.2 L566.5 294.2 L567.0 294.2 L567.5 294.2 L568.0 294.2 L568.5 294.2 L569.0 294.2 L569.5 294.2 L570.0 294.2 L570.5 294.1 L571.0 294.1 L571.5 294.1 L572.0 294.1 L572.5 294.1 L573.0 294.1 L573.5 294.0 L574.0 294.0 L574.5 294.0 L575.0 294.0 L575.5 294.0 L576.0 294.0 L576.5 293.9 L577.0 293.9 L577.5 293.9 L578.0 293.9 L578.5 293.9 L579.0 293.8 L579.5 293.8 L580.0 293.8 L580.5 293.7 L581.0 293.7 L581.5 293.7 L582.0 293.6 L582.5 293.6 L583.0 293.5 L583.5 293.5 L584.0 293.4 L584.5 293.4 L585.0 293.3 L585.5 293.3 L586.0 293.2 L586.5 293.2 L587.0 293.1 L587.5 293.0 L588.0 293.0 L588.5 292.9 L589.0 292.8 L589.5 292.7 L590.0 292.5 L590.5 292.4 L591.0 292.1 L591.5 291.9 L592.0 291.6 L592.5 291.3 L593.0 290.9 L593.5 290.6 L594.0 290.2 L594.5 289.8 L595.0 289.5 L595.5 289.1 L596.0 288.7 L596.5 288.3 L597.0 288.0 L597.5 287.6 L598.0 287.2 L598.5 286.7 L599.0 286.2 L599.5 285.7 L600.0 285.2 L600.5 284.7 L601.0 284.2 L601.5 283.7 L602.0 283.3 L602.5 283.0 L603.0 282.7 L603.5 282.6 L604.0 282.5 L604.5 282.5 L605.0 282.7 L605.5 282.9 L606.0 283.1 L606.5 283.4 L607.0 283.8 L607.5 284.1 L608.0 284.5 L608.5 285.0 L609.0 285.4 L609.5 285.8 L610.0 286.2 L610.5 286.6 L611.0 287.0 L611.5 287.4 L612.0 287.7 L612.5 288.2 L613.0 288.6 L613.5 289.0 L614.0 289.4 L614.5 289.9 L615.0 290.3 L615.5 290.7 L616.0 291.1 L616.5 291.5 L617.0 291.9 L617.5 292.2 L618.0 292.5 L618.5 292.8 L619.0 293.0 L619.5 293.2 L620.0 293.4 L620.5 293.7 L621.0 293.9 L621.5 294.1 L622.0 294.3 L622.5 294.5 L623.0 294.7 L623.5 294.9 L624.0 295.1 L624.5 295.2 L625.0 295.4 L625.5 295.6 L626.0 295.7 L626.5 295.9 L627.0 296.0 L627.5 296.2 L628.0 296.4 L628.5 296.5 L629.0 296.6 L629.5 296.9 L630.0 297.0 L630.5 297.2 L631.0 297.3 L631.5 297.4 L632.0 297.5 L632.5 297.7 L633.0 297.8 L633.5 297.9 L634.0 298.1 L634.5 298.1 L635.0 298.4 L635.5 298.3 L636.0 298.6 L636.5 298.8 L637.0 299.0 L637.5 299.1 L638.0 298.9 L638.5 299.3 L639.0 299.5 L639.5 299.6 L640.0 299.5 L640.5 299.7 L641.0 300.0 L641.5 299.8 L642.0 300.1 L642.5 300.3 L643.0 300.2 L643.5 300.5 L644.0 300.4 L644.5 300.6 L645.0 300.7 L645.5 301.0 L646.0 301.1 L646.5 301.3 L647.0 301.2 L647.5 301.4 L648.0 301.8 L648.5 301.8 L649.0 301.6 L649.5 302.1 L650.0 302.0 L650.5 302.3 L651.0 302.4 L651.5 302.7 L652.0 302.7 L652.5 302.4 L653.0 302.6 L653.5 303.1 L654.0 303.1 L654.5 303.4 L655.0 303.4 L655.5 303.3 L656.0 303.8 L656.5 303.5 L657.0 303.3 L657.5 304.3 L658.0 303.6 L658.5 304.2 L659.0 304.4 L659.5 304.4 L660.0 304.0 L660.5 304.8 L661.0 304.3 L661.5 304.4 L662.0 304.8 L662.5 305.2 L663.0 305.2 L663.5 305.4 L664.0 305.2 L664.5 305.4 L665.0 305.3 L665.5 305.6 L666.0 305.9 L666.5 305.8 L667.0 306.2 L667.5 306.0 L668.0 306.1 L668.5 306.4 L669.0 306.5 L669.5 306.8 L670.0 306.9 L670.5 307.5 L671.0 307.0 L671.5 307.2 L672.0 307.1 L672.5 307.5 L673.0 307.9 L673.5 307.6 L674.0 308.0 L674.5 308.4 L675.0 308.3 L675.5 308.3 L676.0 309.0 L676.5 308.9 L677.0 309.1 L677.5 309.6 L678.0 309.8 L678.5 309.5 L679.0 309.6 L679.5 310.1 L680.0 310.2 L680.5 309.9 L681.0 311.2 L681.5 311.1 L682.0 311.6 L682.5 311.2 L683.0 312.3 L683.5 312.0 L684.0 312.4 L684.5 312.3 L685.0 313.0 L685.5 313.3 L686.0 313.6 L686.5 314.1 L687.0 314.3 L687.5 314.9 L688.0 314.7 L688.5 314.8 L689.0 315.4 L689.5 315.9 L690.0 316.4 L690.5 316.6 L691.0 316.0 L691.5 317.0 L692.0 317.7 L692.5 317.5 L693.0 317.6 L693.5 318.2 L694.0 318.2 L694.5 318.9 L695.0 319.0 L695.5 319.8 L696.0 319.8 L696.5 319.7 L697.0 320.4 L697.5 320.8 L698.0 320.6 L698.5 320.9 L699.0 320.5 L699.5 321.9 L700.0 321.6 L700.5 321.4 L701.0 321.8 L701.5 322.6 L702.0 323.2 L702.5 323.1 L703.0 323.6" fill="none" stroke="#3adf97" stroke-width="1.3" stroke-dasharray="2.6 1.6" stroke-linejoin="round"/>
<path d="M703.8 323.6 V199 M705.6 324.5 V200 M707.6 323 V199.5 M709.4 300 V199" fill="none" stroke="#3adf97" stroke-width="1.3" stroke-dasharray="2.6 1.6" stroke-linejoin="round"/>
<path d="M709.6 198.0 L710.1 198.3 L710.6 200.9 L711.1 201.0 L711.6 201.0 L712.1 202.7 L712.6 201.1 L713.1 202.0 L713.6 203.7 L714.1 204.8 L714.6 203.6 L715.1 205.6 L715.6 204.0 L716.1 205.4 L716.6 205.5 L717.1 204.9 L717.6 207.2 L718.1 208.5 L718.6 208.2 L719.1 209.0 L719.6 211.1 L720.1 209.5 L720.6 210.0 L721.1 211.6 L721.6 211.9 L722.1 215.0 L722.6 214.9 L723.1 214.8 L723.6 215.9 L724.1 219.9 L724.6 217.7 L725.1 218.5 L725.6 220.5 L726.1 221.8 L726.6 222.4 L727.1 222.4 L727.6 223.3 L728.1 226.1 L728.6 226.8 L729.1 226.6 L729.6 230.4 L730.1 231.1 L730.6 231.2 L731.1 231.9 L731.6 233.0 L732.1 232.8 L732.6 232.7 L733.1 234.3 L733.6 232.1 L734.1 232.7 L734.6 230.1 L735.1 230.9 L735.6 230.6 L736.1 232.2 L736.6 229.6 L737.1 229.2 L737.6 230.6 L738.1 231.5 L738.6 233.4 L739.1 235.6 L739.6 237.0 L740.1 238.9 L740.6 237.8 L741.1 241.9 L741.6 242.4 L742.1 241.5 L742.6 240.8 L743.1 243.8 L743.6 245.1 L744.1 244.1 L744.6 247.5 L745.1 248.5 L745.6 249.2 L746.1 251.8 L746.6 253.4 L747.1 253.4 L747.6 255.4 L748.1 256.0 L748.6 257.2 L749.1 259.3 L749.6 261.2 L750.1 261.9 L750.6 262.1 L751.1 266.2 L751.6 265.8 L752.1 268.8 L752.6 271.4 L753.1 270.5 L753.6 269.8 L754.1 269.9 L754.6 272.5 L755.1 271.6 L755.6 272.3 L756.1 272.7 L756.6 271.9 L757.1 271.7 L757.6 270.8 L758.1 268.3 L758.6 269.0 L759.1 269.6 L759.6 269.0 L760.1 269.4 L760.6 269.3 L761.1 270.2 L761.6 271.3 L762.1 270.0 L762.6 269.9 L763.1 267.5 L763.6 268.1 L764.1 265.3 L764.6 263.8 L765.1 263.1 L765.6 260.7 L766.1 257.4 L766.6 256.0 L767.1 252.1 L767.6 252.5 L768.1 251.9 L768.6 250.6 L769.1 253.9 L769.6 252.7 L770.1 254.8 L770.6 254.8 L771.1 257.5 L771.6 259.3 L772.1 258.9 L772.6 259.7 L773.1 262.1 L773.6 264.0 L774.1 264.0 L774.6 264.8 L775.1 266.8 L775.6 264.6 L776.1 267.1 L776.6 266.7 L777.1 268.2 L777.6 267.1 L778.1 266.3 L778.6 266.5 L779.1 265.0 L779.6 265.8 L780.1 264.7 L780.6 264.7 L781.1 264.4 L781.6 265.9 L782.1 265.0 L782.6 265.7 L783.1 265.8 L783.6 264.7 L784.1 266.1 L784.6 266.0 L785.1 266.1 L785.6 265.6 L786.1 265.6 L786.6 266.8 L787.1 268.1 L787.6 265.4 L788.1 266.6 L788.6 265.8 L789.1 266.9 L789.6 266.6 L790.1 267.2 L790.6 263.8 L791.1 265.8 L791.6 265.5 L792.1 266.5 L792.6 266.3 L793.1 266.8 L793.6 268.6 L794.1 270.3 L794.6 266.8 L795.1 269.8 L795.6 271.2 L796.1 271.7 L796.6 272.1 L797.1 271.9 L797.6 273.0 L798.1 275.3 L798.6 276.4 L799.1 276.4 L799.6 276.5 L800.1 278.2 L800.6 278.8 L801.1 280.3 L801.6 280.8 L802.1 281.0 L802.6 282.6 L803.1 282.1 L803.6 284.6 L804.1 285.7 L804.6 284.3 L805.1 286.5 L805.6 286.0 L806.1 288.5 L806.6 289.1 L807.1 288.7 L807.6 290.5 L808.1 289.8 L808.6 290.3 L809.1 290.9 L809.6 291.8 L810.1 292.2 L810.6 293.2 L811.1 293.0 L811.6 294.8 L812.1 295.6 L812.6 294.6 L813.1 294.1 L813.6 296.7 L814.1 297.6 L814.6 296.7 L815.1 295.9 L815.6 298.0 L816.1 299.8 L816.6 296.3 L817.1 299.4 L817.6 298.8 L818.1 298.5 L818.6 300.6 L819.1 298.6 L819.6 301.0 L820.1 302.7 L820.6 301.5 L821.1 300.4 L821.6 299.5 L822.1 300.4 L822.6 299.9 L823.1 305.0 L823.6 302.6 L824.1 301.7 L824.6 301.5 L825.1 302.1 L825.6 303.4 L826.1 302.2 L826.6 307.0 L827.1 303.4 L827.6 303.5 L828.1 305.4 L828.6 307.4 L829.1 307.2 L829.6 304.2 L830.1 305.4 L830.6 305.2 L831.1 305.9 L831.6 305.4 L832.1 303.2 L832.6 302.6 L833.1 305.1 L833.6 302.6 L834.1 307.2 L834.6 304.7 L835.1 302.6 L835.6 303.8 L836.1 302.9 L836.6 302.7 L837.1 303.6 L837.6 297.4 L838.1 294.9 L838.6 297.9 L839.1 295.3 L839.6 294.3 L840.1 292.9 L840.6 289.4 L841.1 289.3 L841.6 283.7 L842.1 284.3 L842.6 281.3 L843.1 280.1 L843.6 283.5 L844.1 283.0 L844.6 277.0 L845.1 278.6 L845.6 281.7 L846.1 283.5 L846.6 279.4 L847.1 280.6 L847.6 277.6 L848.1 287.1 L848.6 282.2 L849.1 283.2 L849.6 282.6 L850.1 283.3 L850.6 282.7 L851.1 280.8 L851.6 284.2 L852.1 283.3 L852.6 287.2 L853.1 282.9 L853.6 284.1 L854.1 287.8 L854.6 289.9 L855.1 287.8 L855.6 286.3 L856.1 288.5 L856.6 288.2 L857.1 294.7 L857.6 292.7 L858.1 294.0 L858.6 291.7 L859.1 289.6 L859.6 293.9 L860.1 295.0 L860.6 292.1 L861.1 290.4 L861.6 293.0 L862.1 289.1 L862.6 291.7 L863.1 287.7 L863.6 286.8 L864.1 290.4 L864.6 289.5 L865.1 293.0 L865.6 287.0 L866.1 287.3 L866.6 283.8 L867.1 281.4 L867.6 281.1 L868.1 286.1 L868.6 281.5 L869.1 286.7 L869.6 286.9 L870.1 282.2 L870.6 286.6 L871.1 282.6 L871.6 284.5 L872.1 280.7 L872.6 283.3 L873.1 278.1 L873.6 281.7 L874.1 278.6 L874.6 279.1 L875.1 280.6 L875.6 279.1 L876.1 278.1 L876.6 279.8 L877.1 279.6 L877.6 273.8 L878.1 278.3 L878.6 278.3 L879.1 274.4 L879.6 276.9 L880.1 272.3 L880.6 278.9 L881.1 274.4 L881.6 274.5 L882.1 277.4 L882.6 273.7 L883.1 275.3 L883.6 270.9 L884.1 271.8 L884.6 269.4 L885.1 272.1 L885.6 274.8 L886.1 272.5 L886.6 273.8 L887.1 268.8 L887.6 268.9 L888.1 269.6 L888.6 272.0 L889.1 271.1 L889.6 269.9 L890.1 271.2 L890.6 268.9 L891.1 268.8 L891.6 271.7 L892.1 266.4 L892.6 267.7 L893.1 270.4 L893.6 265.6 L894.1 265.9 L894.6 261.5" fill="none" stroke="#3adf97" stroke-width="1.3" stroke-dasharray="2.6 1.6" stroke-linejoin="round"/>
<path d="M895.3 215.4 L895.9 291.1 L899.2 228.9 L899.8 284.0 L904.6 205.7 L905.2 297.4 L907.2 200.5 L907.8 288.0 L908.6 204.9 L909.2 303.8 L910.0 199.8 L910.6 286.8 L911.4 205.7 L912.0 279.3 L912.6 201.8 L913.2 304.2 L913.0 204.7 L913.5 199.4 L914.0 202.1 L914.5 198.8 L915.0 200.5 L915.5 201.1 L916.0 198.4 L916.5 197.6 L917.0 202.0 L917.5 202.2 L918.0 203.7 L918.5 202.6 L919.0 211.9 L919.5 214.8 L920.0 217.1 L920.5 214.2 L921.0 215.1 L921.5 216.3 L922.0 219.8 L922.5 216.1 L923.0 219.0 L923.5 217.8 L924.0 220.9 L924.5 217.4 L925.0 222.1 L925.5 220.6 L926.0 221.5 L926.5 223.5 L927.0 225.2 L927.5 219.3 L928.0 225.5 L928.5 224.8 L929.0 223.2 L929.5 227.0 L930.0 224.4 L930.5 226.8 L931.0 222.5 L931.5 221.8 L932.0 226.2 L932.5 228.1 L933.0 224.6 L933.5 225.0 L934.0 222.0 L934.5 220.2 L935.0 222.8 L935.5 227.0 L936.0 220.1 L936.5 223.6 L937.0 221.1 L937.5 243.5" fill="none" stroke="#3adf97" stroke-width="1.3" stroke-dasharray="2.6 1.6" stroke-linejoin="round"/>
<path d="M-2.0 260.0 L-1.0 259.9 L0.0 259.9 L1.0 259.9 L2.0 259.9 L3.0 259.9 L4.0 259.8 L5.0 259.8 L6.0 259.8 L7.0 259.8 L8.0 259.8 L9.0 259.7 L10.0 259.7 L11.0 259.7 L12.0 259.7 L13.0 259.7 L14.0 259.6 L15.0 259.6 L16.0 259.6 L17.0 259.6 L18.0 259.5 L19.0 259.5 L20.0 259.5 L21.0 259.5 L22.0 259.5 L23.0 259.4 L24.0 259.4 L25.0 259.4 L26.0 259.4 L27.0 259.3 L28.0 259.3 L29.0 259.3 L30.0 259.3 L31.0 259.2 L32.0 259.2 L33.0 259.2 L34.0 259.2 L35.0 259.1 L36.0 259.1 L37.0 259.1 L38.0 259.1 L39.0 259.0 L40.0 259.0 L41.0 259.0 L42.0 258.9 L43.0 258.9 L44.0 258.9 L45.0 258.9 L46.0 258.8 L47.0 258.8 L48.0 258.8 L49.0 258.7 L50.0 258.7 L51.0 258.7 L52.0 258.6 L53.0 258.6 L54.0 258.6 L55.0 258.6 L56.0 258.5 L57.0 258.5 L58.0 258.5 L59.0 258.4 L60.0 258.4 L61.0 258.4 L62.0 258.3 L63.0 258.3 L64.0 258.3 L65.0 258.2 L66.0 258.2 L67.0 258.2 L68.0 258.1 L69.0 258.1 L70.0 258.0 L71.0 258.0 L72.0 258.0 L73.0 257.9 L74.0 257.9 L75.0 257.9 L76.0 257.8 L77.0 257.8 L78.0 257.7 L79.0 257.7 L80.0 257.7 L81.0 257.6 L82.0 257.6 L83.0 257.6 L84.0 257.5 L85.0 257.5 L86.0 257.4 L87.0 257.4 L88.0 257.3 L89.0 257.3 L90.0 257.3 L91.0 257.2 L92.0 257.2 L93.0 257.1 L94.0 257.1 L95.0 257.0 L96.0 257.0 L97.0 257.0 L98.0 256.9 L99.0 256.9 L100.0 256.8 L101.0 256.8 L102.0 256.7 L103.0 256.7 L104.0 256.6 L105.0 256.6 L106.0 256.5 L107.0 256.5 L108.0 256.4 L109.0 256.4 L110.0 256.3 L111.0 256.3 L112.0 256.2 L113.0 256.2 L114.0 256.1 L115.0 256.1 L116.0 256.0 L117.0 256.0 L118.0 255.9 L119.0 255.9 L120.0 255.8 L121.0 255.8 L122.0 255.7 L123.0 255.7 L124.0 255.6 L125.0 255.5 L126.0 255.5 L127.0 255.4 L128.0 255.4 L129.0 255.3 L130.0 255.3 L131.0 255.2 L132.0 255.1 L133.0 255.1 L134.0 255.0 L135.0 255.0 L136.0 254.9 L137.0 254.8 L138.0 254.8 L139.0 254.7 L140.0 254.7 L141.0 254.6 L142.0 254.5 L143.0 254.5 L144.0 254.4 L145.0 254.3 L146.0 254.3 L147.0 254.2 L148.0 254.1 L149.0 254.1 L150.0 254.0 L151.0 253.9 L152.0 253.9 L153.0 253.8 L154.0 253.7 L155.0 253.7 L156.0 253.6 L157.0 253.5 L158.0 253.5 L159.0 253.4 L160.0 253.3 L161.0 253.2 L162.0 253.2 L163.0 253.1 L164.0 253.0 L165.0 253.0 L166.0 252.9 L167.0 252.8 L168.0 252.7 L169.0 252.7 L170.0 252.6 L171.0 252.5 L172.0 252.4 L173.0 252.4 L174.0 252.3 L175.0 252.2 L176.0 252.1 L177.0 252.1 L178.0 252.0 L179.0 251.9 L180.0 251.8 L181.0 251.8 L182.0 251.7 L183.0 251.6 L184.0 251.5 L185.0 251.4 L186.0 251.4 L187.0 251.3 L188.0 251.2 L189.0 251.1 L190.0 251.0 L191.0 251.0 L192.0 250.9 L193.0 250.8 L194.0 250.7 L195.0 250.7 L196.0 250.6 L197.0 250.5 L198.0 250.4 L199.0 250.3 L200.0 250.3 L201.0 250.2 L202.0 250.1 L203.0 250.0 L204.0 249.9 L205.0 249.9 L206.0 249.8 L207.0 249.7 L208.0 249.6 L209.0 249.6 L210.0 249.5 L211.0 249.4 L212.0 249.3 L213.0 249.3 L214.0 249.2 L215.0 249.1 L216.0 249.1 L217.0 249.0 L218.0 248.9 L219.0 248.9 L220.0 248.8 L221.0 248.7 L222.0 248.7 L223.0 248.6 L224.0 248.6 L225.0 248.5 L226.0 248.5 L227.0 248.4 L228.0 248.4 L229.0 248.4 L230.0 248.3 L231.0 248.3 L232.0 248.2 L233.0 248.2 L234.0 248.2 L235.0 248.2 L236.0 248.1 L237.0 248.1 L238.0 248.1 L239.0 248.1 L240.0 248.1 L241.0 248.1 L242.0 248.1 L243.0 248.1 L244.0 248.1 L245.0 248.1 L246.0 248.1 L247.0 248.1 L248.0 248.1 L249.0 248.1 L250.0 248.2 L251.0 248.2 L252.0 248.3 L253.0 248.3 L254.0 248.4 L255.0 248.5 L256.0 248.5 L257.0 248.6 L258.0 248.7 L259.0 248.9 L260.0 249.0 L261.0 249.2 L262.0 249.3 L263.0 249.5 L264.0 249.7 L265.0 250.0 L266.0 250.2 L267.0 250.5 L268.0 250.8 L269.0 251.1 L270.0 251.4 L271.0 251.8 L272.0 252.2 L273.0 252.6 L274.0 253.0 L275.0 253.5 L276.0 254.0 L277.0 254.5 L278.0 255.0 L279.0 255.6 L280.0 256.1 L281.0 256.8 L282.0 257.4 L283.0 258.0 L284.0 258.7 L285.0 259.4 L286.0 260.1 L287.0 260.8 L288.0 261.5 L289.0 262.3 L290.0 263.1 L291.0 263.9 L292.0 264.6 L293.0 265.4 L294.0 266.1 L295.0 266.8 L296.0 267.5 L297.0 268.1 L298.0 268.7 L299.0 269.3 L300.0 269.8 L301.0 270.3 L302.0 270.8 L303.0 271.2 L304.0 271.7 L305.0 272.0 L306.0 272.4 L307.0 272.7 L308.0 273.0 L309.0 273.2 L310.0 273.5 L311.0 273.7 L312.0 273.9 L313.0 274.1 L314.0 274.2 L315.0 274.3 L316.0 274.5 L317.0 274.6 L318.0 274.6 L319.0 274.7 L320.0 274.8 L321.0 274.8 L322.0 274.9 L323.0 274.9 L324.0 274.9 L325.0 274.9 L326.0 274.9 L327.0 274.9 L328.0 274.9 L329.0 274.9 L330.0 274.8 L331.0 274.8 L332.0 274.7 L333.0 274.7 L334.0 274.6 L335.0 274.6 L336.0 274.5 L337.0 274.4 L338.0 274.4 L339.0 274.3 L340.0 274.2 L341.0 274.1 L342.0 274.0 L343.0 273.9 L344.0 273.9 L345.0 273.8 L346.0 273.7 L347.0 273.6 L348.0 273.5 L349.0 273.4 L350.0 273.3 L351.0 273.2 L352.0 273.0 L353.0 272.9 L354.0 272.8 L355.0 272.7 L356.0 272.6 L357.0 272.5 L358.0 272.4 L359.0 272.3 L360.0 272.2 L361.0 272.0 L362.0 271.9 L363.0 271.8 L364.0 271.7 L365.0 271.6 L366.0 271.5 L367.0 271.4 L368.0 271.2 L369.0 271.1 L370.0 271.0 L371.0 270.9 L372.0 270.8 L373.0 270.7 L374.0 270.6 L375.0 270.4 L376.0 270.3 L377.0 270.2 L378.0 270.1 L379.0 270.0 L380.0 269.9 L381.0 269.8 L382.0 269.6 L383.0 269.5 L384.0 269.4 L385.0 269.3 L386.0 269.2 L387.0 269.1 L388.0 269.0 L389.0 268.9 L390.0 268.8 L391.0 268.7 L392.0 268.5 L393.0 268.4 L394.0 268.3 L395.0 268.2 L396.0 268.1 L397.0 268.0 L398.0 267.9 L399.0 267.8 L400.0 267.7 L401.0 267.6 L402.0 267.5 L403.0 267.4 L404.0 267.3 L405.0 267.2 L406.0 267.1 L407.0 267.0 L408.0 266.9 L409.0 266.8 L410.0 266.7 L411.0 266.6 L412.0 266.5 L413.0 266.4 L414.0 266.3 L415.0 266.2 L416.0 266.1 L417.0 266.0 L418.0 265.9 L419.0 265.8 L420.0 265.8 L421.0 265.7 L422.0 265.6 L423.0 265.5 L424.0 265.4 L425.0 265.3 L426.0 265.2 L427.0 265.1 L428.0 265.0 L429.0 265.0 L430.0 264.9 L431.0 264.8 L432.0 264.7 L433.0 264.6 L434.0 264.5 L435.0 264.4 L436.0 264.4 L437.0 264.3 L438.0 264.2 L439.0 264.1 L440.0 264.0 L441.0 264.0 L442.0 263.9 L443.0 263.8 L444.0 263.7 L445.0 263.6 L446.0 263.6 L447.0 263.5 L448.0 263.4 L449.0 263.3 L450.0 263.3 L451.0 263.2 L452.0 263.1 L453.0 263.0 L454.0 263.0 L455.0 262.9 L456.0 262.8 L457.0 262.7 L458.0 262.7 L459.0 262.6 L460.0 262.5 L461.0 262.5 L462.0 262.4 L463.0 262.3 L464.0 262.2 L465.0 262.2 L466.0 262.1 L467.0 262.0 L468.0 262.0 L469.0 261.9 L470.0 261.8 L471.0 261.8 L472.0 261.7 L473.0 261.6 L474.0 261.6 L475.0 261.5 L476.0 261.4 L477.0 261.4 L478.0 261.3 L479.0 261.2 L480.0 261.2 L481.0 261.1 L482.0 261.0 L483.0 261.0 L484.0 260.9 L485.0 260.9 L486.0 260.8 L487.0 260.7 L488.0 260.7 L489.0 260.6 L490.0 260.5 L491.0 260.5 L492.0 260.4 L493.0 260.4 L494.0 260.3 L495.0 260.2 L496.0 260.2 L497.0 260.1 L498.0 260.1 L499.0 260.0 L500.0 260.0 L501.0 259.9 L502.0 259.8 L503.0 259.8 L504.0 259.7 L505.0 259.7 L506.0 259.6 L507.0 259.6 L508.0 259.5 L509.0 259.4 L510.0 259.4 L511.0 259.3 L512.0 259.3 L513.0 259.2 L514.0 259.2 L515.0 259.1 L516.0 259.1 L517.0 259.0 L518.0 258.9 L519.0 258.9 L520.0 258.8 L521.0 258.8 L522.0 258.7 L523.0 258.7 L524.0 258.6 L525.0 258.6 L526.0 258.5 L527.0 258.5 L528.0 258.4 L529.0 258.4 L530.0 258.3 L531.0 258.3 L532.0 258.2 L533.0 258.2 L534.0 258.1 L535.0 258.1 L536.0 258.0 L537.0 258.0 L538.0 257.9 L539.0 257.9 L540.0 257.8 L541.0 257.8 L542.0 257.7 L543.0 257.7 L544.0 257.6 L545.0 257.6 L546.0 257.5 L547.0 257.5 L548.0 257.4 L549.0 257.4 L550.0 257.3 L551.0 257.3 L552.0 257.2 L553.0 257.2 L554.0 257.1 L555.0 257.1 L556.0 257.0 L557.0 257.0 L558.0 256.9 L559.0 256.9 L560.0 256.8 L561.0 256.8 L562.0 256.7 L563.0 256.7 L564.0 256.7 L565.0 256.6 L566.0 256.6 L567.0 256.5 L568.0 256.5 L569.0 256.4 L570.0 256.4 L571.0 256.3 L572.0 256.3 L573.0 256.2 L574.0 256.2 L575.0 256.2 L576.0 256.1 L577.0 256.1 L578.0 256.0 L579.0 256.0 L580.0 255.9 L581.0 255.9 L582.0 255.8 L583.0 255.8 L584.0 255.8 L585.0 255.7 L586.0 255.7 L587.0 255.6 L588.0 255.6 L589.0 255.5 L590.0 255.5 L591.0 255.5 L592.0 255.4 L593.0 255.4 L594.0 255.3 L595.0 255.3 L596.0 255.2 L597.0 255.2 L598.0 255.2 L599.0 255.1 L600.0 255.1 L601.0 255.0 L602.0 255.0 L603.0 254.9 L604.0 254.9 L605.0 254.9 L606.0 254.8 L607.0 254.8 L608.0 254.7 L609.0 254.7 L610.0 254.7 L611.0 254.6 L612.0 254.6 L613.0 254.5 L614.0 254.5 L615.0 254.5 L616.0 254.4 L617.0 254.4 L618.0 254.3 L619.0 254.3 L620.0 254.3 L621.0 254.2 L622.0 254.2 L623.0 254.1 L624.0 254.1 L625.0 254.1 L626.0 254.0 L627.0 254.0 L628.0 254.0 L629.0 253.9 L630.0 253.9 L631.0 253.8 L632.0 253.8 L633.0 253.8 L634.0 253.7 L635.0 253.7 L636.0 253.7 L637.0 253.6 L638.0 253.6 L639.0 253.5 L640.0 253.5 L641.0 253.5 L642.0 253.4 L643.0 253.4 L644.0 253.4 L645.0 253.3 L646.0 253.3 L647.0 253.3 L648.0 253.2 L649.0 253.2 L650.0 253.1 L651.0 253.1 L652.0 253.1 L653.0 253.0 L654.0 253.0 L655.0 253.0 L656.0 252.9 L657.0 252.9 L658.0 252.9 L659.0 252.8 L660.0 252.8 L661.0 252.8 L662.0 252.7 L663.0 252.7 L664.0 252.7 L665.0 252.6 L666.0 252.6 L667.0 252.6 L668.0 252.5 L669.0 252.5 L670.0 252.5 L671.0 252.4 L672.0 252.4 L673.0 252.4 L674.0 252.3 L675.0 252.3 L676.0 252.3 L677.0 252.2 L678.0 252.2 L679.0 252.2 L680.0 252.1 L681.0 252.1 L682.0 252.1 L683.0 252.0 L684.0 252.0 L685.0 252.0 L686.0 251.9 L687.0 251.9 L688.0 251.9 L689.0 251.8 L690.0 251.8 L691.0 251.8 L692.0 251.7 L693.0 251.7 L694.0 251.7 L695.0 251.7 L696.0 251.6 L697.0 251.6 L698.0 251.6 L699.0 251.5 L700.0 251.5 L701.0 251.5 L702.0 251.4 L703.0 251.4 L704.0 251.4 L705.0 251.4 L706.0 251.3 L707.0 251.3 L708.0 251.3 L709.0 251.2 L710.0 251.2 L711.0 251.2 L712.0 251.1 L713.0 251.1 L714.0 251.1 L715.0 251.1 L716.0 251.0 L717.0 251.0 L718.0 251.0 L719.0 250.9 L720.0 250.9 L721.0 250.9 L722.0 250.9 L723.0 250.8 L724.0 250.8 L725.0 250.8 L726.0 250.7 L727.0 250.7 L728.0 250.7 L729.0 250.7 L730.0 250.6 L731.0 250.6 L732.0 250.6 L733.0 250.5 L734.0 250.5 L735.0 250.5 L736.0 250.5 L737.0 250.4 L738.0 250.4 L739.0 250.4 L740.0 250.4 L741.0 250.3 L742.0 250.3 L743.0 250.3 L744.0 250.2 L745.0 250.2 L746.0 250.2 L747.0 250.2 L748.0 250.1 L749.0 250.1 L750.0 250.1 L751.0 250.1 L752.0 250.0 L753.0 250.0 L754.0 250.0 L755.0 250.0 L756.0 249.9 L757.0 249.9 L758.0 249.9 L759.0 249.9 L760.0 249.8 L761.0 249.8 L762.0 249.8 L763.0 249.8 L764.0 249.7 L765.0 249.7 L766.0 249.7 L767.0 249.7 L768.0 249.6 L769.0 249.6 L770.0 249.6 L771.0 249.6 L772.0 249.5 L773.0 249.5 L774.0 249.5 L775.0 249.5 L776.0 249.4 L777.0 249.4 L778.0 249.4 L779.0 249.4 L780.0 249.3 L781.0 249.3 L782.0 249.3 L783.0 249.3 L784.0 249.2 L785.0 249.2 L786.0 249.2 L787.0 249.2 L788.0 249.2 L789.0 249.1 L790.0 249.1 L791.0 249.1 L792.0 249.1 L793.0 249.0 L794.0 249.0 L795.0 249.0 L796.0 249.0 L797.0 249.0 L798.0 248.9 L799.0 248.9 L800.0 248.9 L801.0 248.9 L802.0 248.8 L803.0 248.8 L804.0 248.8 L805.0 248.8 L806.0 248.8 L807.0 248.7 L808.0 248.7 L809.0 248.7 L810.0 248.7 L811.0 248.7 L812.0 248.6 L813.0 248.6 L814.0 248.6 L815.0 248.6 L816.0 248.6 L817.0 248.6 L818.0 248.5 L819.0 248.5 L820.0 248.5 L821.0 248.5 L822.0 248.5 L823.0 248.4 L824.0 248.4 L825.0 248.4 L826.0 248.4 L827.0 248.4 L828.0 248.4 L829.0 248.3 L830.0 248.3 L831.0 248.3 L832.0 248.3 L833.0 248.3 L834.0 248.3 L835.0 248.2 L836.0 248.2 L837.0 248.2 L838.0 248.2 L839.0 248.2 L840.0 248.2 L841.0 248.2 L842.0 248.1 L843.0 248.1 L844.0 248.1 L845.0 248.1 L846.0 248.1 L847.0 248.1 L848.0 248.1 L849.0 248.0 L850.0 248.0 L851.0 248.0 L852.0 248.0 L853.0 248.0 L854.0 248.0 L855.0 248.0 L856.0 248.0 L857.0 247.9 L858.0 247.9 L859.0 247.9 L860.0 247.9 L861.0 247.9 L862.0 247.9 L863.0 247.9 L864.0 247.9 L865.0 247.9 L866.0 247.8 L867.0 247.8 L868.0 247.8 L869.0 247.8 L870.0 247.8 L871.0 247.8 L872.0 247.8 L873.0 247.8 L874.0 247.8 L875.0 247.7 L876.0 247.7 L877.0 247.7 L878.0 247.7 L879.0 247.7 L880.0 247.7 L881.0 247.7 L882.0 247.7 L883.0 247.7 L884.0 247.7 L885.0 247.7 L886.0 247.6 L887.0 247.6 L888.0 247.6 L889.0 247.6 L890.0 247.6 L891.0 247.6 L892.0 247.6 L893.0 247.6 L894.0 247.6 L895.0 247.6 L896.0 247.6 L897.0 247.6 L898.0 247.6 L899.0 247.5 L900.0 247.5 L901.0 247.5 L902.0 247.5 L903.0 247.5 L904.0 247.5 L905.0 247.5 L906.0 247.5 L907.0 247.5 L908.0 247.5 L909.0 247.5 L910.0 247.5 L911.0 247.5 L912.0 247.5 L913.0 247.4 L914.0 247.4 L915.0 247.4 L916.0 247.4 L917.0 247.4 L918.0 247.4 L919.0 247.4 L920.0 247.4 L921.0 247.4 L922.0 247.4 L923.0 247.4 L924.0 247.4 L925.0 247.4 L926.0 247.4 L927.0 247.4 L928.0 247.4 L929.0 247.4 L930.0 247.4 L931.0 247.3 L932.0 247.3 L933.0 247.3 L934.0 247.3 L935.0 247.3 L936.0 247.3 L937.0 247.3 L938.0 247.3 L939.0 247.3" fill="none" stroke="#3adf97" stroke-width="1.6"/>
<path d="M-2.0 260.0 L-1.0 259.9 L0.0 259.9 L1.0 259.9 L2.0 259.9 L3.0 259.9 L4.0 259.8 L5.0 259.8 L6.0 259.8 L7.0 259.8 L8.0 259.8 L9.0 259.7 L10.0 259.7 L11.0 259.7 L12.0 259.7 L13.0 259.7 L14.0 259.6 L15.0 259.6 L16.0 259.6 L17.0 259.6 L18.0 259.5 L19.0 259.5 L20.0 259.5 L21.0 259.5 L22.0 259.5 L23.0 259.4 L24.0 259.4 L25.0 259.4 L26.0 259.4 L27.0 259.3 L28.0 259.3 L29.0 259.3 L30.0 259.3 L31.0 259.2 L32.0 259.2 L33.0 259.2 L34.0 259.2 L35.0 259.1 L36.0 259.1 L37.0 259.1 L38.0 259.1 L39.0 259.0 L40.0 259.0 L41.0 259.0 L42.0 258.9 L43.0 258.9 L44.0 258.9 L45.0 258.9 L46.0 258.8 L47.0 258.8 L48.0 258.8 L49.0 258.7 L50.0 258.7 L51.0 258.7 L52.0 258.6 L53.0 258.6 L54.0 258.6 L55.0 258.6 L56.0 258.5 L57.0 258.5 L58.0 258.5 L59.0 258.4 L60.0 258.4 L61.0 258.4 L62.0 258.3 L63.0 258.3 L64.0 258.3 L65.0 258.2 L66.0 258.2 L67.0 258.2 L68.0 258.1 L69.0 258.1 L70.0 258.0 L71.0 258.0 L72.0 258.0 L73.0 257.9 L74.0 257.9 L75.0 257.9 L76.0 257.8 L77.0 257.8 L78.0 257.7 L79.0 257.7 L80.0 257.7 L81.0 257.6 L82.0 257.6 L83.0 257.6 L84.0 257.5 L85.0 257.5 L86.0 257.4 L87.0 257.4 L88.0 257.3 L89.0 257.3 L90.0 257.3 L91.0 257.2 L92.0 257.2 L93.0 257.1 L94.0 257.1 L95.0 257.0 L96.0 257.0 L97.0 257.0 L98.0 256.9 L99.0 256.9 L100.0 256.8 L101.0 256.8 L102.0 256.7 L103.0 256.7 L104.0 256.6 L105.0 256.6 L106.0 256.5 L107.0 256.5 L108.0 256.4 L109.0 256.4 L110.0 256.3 L111.0 256.3 L112.0 256.2 L113.0 256.2 L114.0 256.1 L115.0 256.1 L116.0 256.0 L117.0 256.0 L118.0 255.9 L119.0 255.9 L120.0 255.8 L121.0 255.8 L122.0 255.7 L123.0 255.7 L124.0 255.6 L125.0 255.5 L126.0 255.5 L127.0 255.4 L128.0 255.4 L129.0 255.3 L130.0 255.3 L131.0 255.2 L132.0 255.1 L133.0 255.1 L134.0 255.0 L135.0 255.0 L136.0 254.9 L137.0 254.8 L138.0 254.8 L139.0 254.7 L140.0 254.7 L141.0 254.6 L142.0 254.5 L143.0 254.5 L144.0 254.4 L145.0 254.3 L146.0 254.3 L147.0 254.2 L148.0 254.1 L149.0 254.1 L150.0 254.0 L151.0 253.9 L152.0 253.9 L153.0 253.8 L154.0 253.7 L155.0 253.7 L156.0 253.6 L157.0 253.5 L158.0 253.5 L159.0 253.4 L160.0 253.3 L161.0 253.2 L162.0 253.2 L163.0 253.1 L164.0 253.0 L165.0 253.0 L166.0 252.9 L167.0 252.8 L168.0 252.7 L169.0 252.7 L170.0 252.6 L171.0 252.5 L172.0 252.4 L173.0 252.4 L174.0 252.3 L175.0 252.2 L176.0 252.1 L177.0 252.1 L178.0 252.0 L179.0 251.9 L180.0 251.8 L181.0 251.8 L182.0 251.7 L183.0 251.6 L184.0 251.5 L185.0 251.4 L186.0 251.4 L187.0 251.3 L188.0 251.2 L189.0 251.1 L190.0 251.0 L191.0 251.0 L192.0 250.9 L193.0 250.8 L194.0 250.7 L195.0 250.7 L196.0 250.6 L197.0 250.5 L198.0 250.4 L199.0 250.3 L200.0 250.3 L201.0 250.2 L202.0 250.1 L203.0 250.0 L204.0 249.9 L205.0 249.9 L206.0 249.8 L207.0 249.7 L208.0 249.6 L209.0 249.6 L210.0 249.5 L211.0 249.4 L212.0 249.3 L213.0 249.3 L214.0 249.2 L215.0 249.1 L216.0 249.1 L217.0 249.0 L218.0 248.9 L219.0 248.9 L220.0 248.8 L221.0 248.7 L222.0 248.7 L223.0 248.6 L224.0 248.6 L225.0 248.5 L226.0 248.5 L227.0 248.4 L228.0 248.4 L229.0 248.4 L230.0 248.3 L231.0 248.3 L232.0 248.2 L233.0 248.2 L234.0 248.2 L235.0 248.2 L236.0 248.1 L237.0 248.1 L238.0 248.1 L239.0 248.1 L240.0 248.1 L241.0 248.1 L242.0 248.1 L243.0 248.1 L244.0 248.1 L245.0 248.1 L246.0 248.1 L247.0 248.1 L248.0 248.1 L249.0 248.1 L250.0 248.2 L251.0 248.2 L252.0 248.3 L253.0 248.3 L254.0 248.4 L255.0 248.5 L256.0 248.5 L257.0 248.6 L258.0 248.7 L259.0 248.9 L260.0 249.0 L261.0 249.2 L262.0 249.3 L263.0 249.5 L264.0 249.7 L265.0 250.0 L266.0 250.2 L267.0 250.5 L268.0 250.8 L269.0 251.1 L270.0 251.4 L271.0 251.8 L272.0 252.2 L273.0 252.6 L274.0 253.0 L275.0 253.5 L276.0 254.0 L277.0 254.5 L278.0 255.0 L279.0 255.6 L280.0 256.1 L281.0 256.8 L282.0 257.4 L283.0 258.0 L284.0 258.7 L285.0 259.4 L286.0 260.1 L287.0 260.8 L288.0 261.5 L289.0 262.3 L290.0 263.1 L291.0 263.9 L292.0 264.6 L293.0 265.4 L294.0 266.1 L295.0 266.8 L296.0 267.5 L297.0 268.1 L298.0 268.7 L299.0 269.3 L300.0 269.8 L301.0 270.3 L302.0 270.8 L303.0 271.2 L304.0 271.7 L305.0 272.0 L306.0 272.4 L307.0 272.7 L308.0 273.0 L309.0 273.2 L310.0 273.5 L311.0 273.7 L312.0 273.9 L313.0 274.1 L314.0 274.2 L315.0 274.3 L316.0 274.5 L317.0 274.6 L318.0 274.6 L319.0 274.7 L320.0 274.8 L321.0 274.8 L322.0 274.9 L323.0 274.9 L324.0 274.9 L325.0 274.9 L326.0 274.9 L327.0 274.9 L328.0 274.9 L329.0 274.9 L330.0 274.8 L331.0 274.8 L332.0 274.7 L333.0 274.7 L334.0 274.6 L335.0 274.6 L336.0 274.5 L337.0 274.4 L338.0 274.4 L339.0 274.3 L340.0 274.2 L341.0 274.1 L342.0 274.0 L343.0 273.9 L344.0 273.9 L345.0 273.8 L346.0 273.7 L347.0 273.6 L348.0 273.5 L349.0 273.4 L350.0 273.3 L351.0 273.2 L352.0 273.0 L353.0 272.9 L354.0 272.8 L355.0 272.7 L356.0 272.6 L357.0 272.5 L358.0 272.4 L359.0 272.3 L360.0 272.2 L361.0 272.0 L362.0 271.9 L363.0 271.8 L364.0 271.7 L365.0 271.6 L366.0 271.5 L367.0 271.4 L368.0 271.2 L369.0 271.1 L370.0 271.0 L371.0 270.9 L372.0 270.8 L373.0 270.7 L374.0 270.6 L375.0 270.4 L376.0 270.3 L377.0 270.2 L378.0 270.1 L379.0 270.0 L380.0 269.9 L381.0 269.8 L382.0 269.6 L383.0 269.5 L384.0 269.4 L385.0 269.3 L386.0 269.2 L387.0 269.1 L388.0 269.0 L389.0 268.9 L390.0 268.8 L391.0 268.7 L392.0 268.5 L393.0 268.4 L394.0 268.3 L395.0 268.2 L396.0 268.1 L397.0 268.0 L398.0 267.9 L399.0 267.8 L400.0 267.7 L401.0 267.6 L402.0 267.5 L403.0 267.4 L404.0 267.3 L405.0 267.2 L406.0 267.1 L407.0 267.0 L408.0 266.9 L409.0 266.8 L410.0 266.7 L411.0 266.6 L412.0 266.5 L413.0 266.4 L414.0 266.3 L415.0 266.2 L416.0 266.1 L417.0 266.0 L418.0 265.9 L419.0 265.8 L420.0 265.8 L421.0 265.7 L422.0 265.6 L423.0 265.5 L424.0 265.4 L425.0 265.3 L426.0 265.2 L427.0 265.1 L428.0 265.0 L429.0 265.0 L430.0 264.9 L431.0 264.8 L432.0 264.7 L433.0 264.6 L434.0 264.5 L435.0 264.4 L436.0 264.4 L437.0 264.3 L438.0 264.2 L439.0 264.1 L440.0 264.0 L441.0 264.0 L442.0 263.9 L443.0 263.8 L444.0 263.7 L445.0 263.6 L446.0 263.6 L447.0 263.5 L448.0 263.4 L449.0 263.3 L450.0 263.3 L451.0 263.2 L452.0 263.1 L453.0 263.0 L454.0 263.0 L455.0 262.9 L456.0 262.8 L457.0 262.7 L458.0 262.7 L459.0 262.6 L460.0 262.5 L461.0 262.5 L462.0 262.4 L463.0 262.3 L464.0 262.2 L465.0 262.2 L466.0 262.1 L467.0 262.0 L468.0 262.0 L469.0 261.9 L470.0 261.8 L471.0 261.8 L472.0 261.7 L473.0 261.6 L474.0 261.6 L475.0 261.5 L476.0 261.4 L477.0 261.4 L478.0 261.3 L479.0 261.2 L480.0 261.2 L481.0 261.1 L482.0 261.0 L483.0 261.0 L484.0 260.9 L485.0 260.9 L486.0 260.8 L487.0 260.7 L488.0 260.7 L489.0 260.6 L490.0 260.5 L491.0 260.5 L492.0 260.4 L493.0 260.4 L494.0 260.3 L495.0 260.2 L496.0 260.2 L497.0 260.1 L498.0 260.1 L499.0 260.0 L500.0 260.0 L501.0 259.9 L502.0 259.8 L503.0 259.8 L504.0 259.7 L505.0 259.7 L506.0 259.6 L507.0 259.6 L508.0 259.5 L509.0 259.4 L510.0 259.4 L511.0 259.3 L512.0 259.3 L513.0 259.2 L514.0 259.2 L515.0 259.1 L516.0 259.1 L517.0 259.0 L518.0 258.9 L519.0 258.9 L520.0 258.8 L521.0 258.8 L522.0 258.7 L523.0 258.7 L524.0 258.6 L525.0 258.6 L526.0 258.5 L527.0 258.5 L528.0 258.4 L529.0 258.4 L530.0 258.3 L531.0 258.3 L532.0 258.2 L533.0 258.2 L534.0 258.1 L535.0 258.1 L536.0 258.0 L537.0 258.0 L538.0 257.9 L539.0 257.9 L540.0 257.8 L541.0 257.8 L542.0 257.7 L543.0 257.7 L544.0 257.6 L545.0 257.6 L546.0 257.5 L547.0 257.5 L548.0 257.4 L549.0 257.4 L550.0 257.3 L551.0 257.3 L552.0 257.2 L553.0 257.2 L554.0 257.1 L555.0 257.1 L556.0 257.0 L557.0 257.0 L558.0 256.9 L559.0 256.9 L560.0 256.8 L561.0 256.8 L562.0 256.7 L563.0 256.7 L564.0 256.7 L565.0 256.6 L566.0 256.6 L567.0 256.5 L568.0 256.5 L569.0 256.4 L570.0 256.4 L571.0 256.3 L572.0 256.3 L573.0 256.2 L574.0 256.2 L575.0 256.2 L576.0 256.1 L577.0 256.1 L578.0 256.0 L579.0 256.0 L580.0 255.9 L581.0 255.9 L582.0 255.8 L583.0 255.8 L584.0 255.8 L585.0 255.7 L586.0 255.7 L587.0 255.6 L588.0 255.6 L589.0 255.5 L590.0 255.5 L591.0 255.5 L592.0 255.4 L593.0 255.4 L594.0 255.3 L595.0 255.3 L596.0 255.2 L597.0 255.2 L598.0 255.2 L599.0 255.1 L600.0 255.1 L601.0 255.0 L602.0 255.0 L603.0 254.9 L604.0 254.9 L605.0 254.9 L606.0 254.8 L607.0 254.8 L608.0 254.7 L609.0 254.7 L610.0 254.7 L611.0 254.6 L612.0 254.6 L613.0 254.5 L614.0 254.5 L615.0 254.5 L616.0 254.4 L617.0 254.4 L618.0 254.3 L619.0 254.3 L620.0 254.3 L621.0 254.2 L622.0 254.2 L623.0 254.1 L624.0 254.1 L625.0 254.1 L626.0 254.0 L627.0 254.0 L628.0 254.0 L629.0 253.9 L630.0 253.9 L631.0 253.8 L632.0 253.8 L633.0 253.8 L634.0 253.7 L635.0 253.7 L636.0 253.7 L637.0 253.6 L638.0 253.6 L639.0 253.5 L640.0 253.5 L641.0 253.5 L642.0 253.4 L643.0 253.4 L644.0 253.4 L645.0 253.3 L646.0 253.3 L647.0 253.3 L648.0 253.2 L649.0 253.2 L650.0 253.1 L651.0 253.1 L652.0 253.1 L653.0 253.0 L654.0 253.0 L655.0 253.0 L656.0 252.9 L657.0 252.9 L658.0 252.9 L659.0 252.8 L660.0 252.8 L661.0 252.8 L662.0 252.7 L663.0 252.7 L664.0 252.7 L665.0 252.6 L666.0 252.6 L667.0 252.6 L668.0 252.5 L669.0 252.5 L670.0 252.5 L671.0 252.4 L672.0 252.4 L673.0 252.4 L674.0 252.3 L675.0 252.3 L676.0 252.3 L677.0 252.2 L678.0 252.2 L679.0 252.2 L680.0 252.1 L681.0 252.1 L682.0 252.1 L683.0 252.0 L684.0 252.0 L685.0 252.0 L686.0 251.9 L687.0 251.9 L688.0 251.9 L689.0 251.8 L690.0 251.8 L691.0 251.8 L692.0 251.7 L693.0 251.7 L694.0 251.7 L695.0 251.7 L696.0 251.6 L697.0 251.6 L698.0 251.6 L699.0 251.5 L700.0 251.5 L701.0 251.5 L702.0 251.4 L703.0 251.4 L704.0 251.4 L705.0 251.4 L706.0 251.3 L707.0 251.3 L708.0 251.3 L709.0 251.2 L710.0 251.2 L711.0 251.2 L712.0 251.1 L713.0 251.1 L714.0 251.1 L715.0 251.1 L716.0 251.0 L717.0 251.0 L718.0 251.0 L719.0 250.9 L720.0 250.9 L721.0 250.9 L722.0 250.9 L723.0 250.8 L724.0 250.8 L725.0 250.8 L726.0 250.7 L727.0 250.7 L728.0 250.7 L729.0 250.7 L730.0 250.6 L731.0 250.6 L732.0 250.6 L733.0 250.5 L734.0 250.5 L735.0 250.5 L736.0 250.5 L737.0 250.4 L738.0 250.4 L739.0 250.4 L740.0 250.4 L741.0 250.3 L742.0 250.3 L743.0 250.3 L744.0 250.2 L745.0 250.2 L746.0 250.2 L747.0 250.2 L748.0 250.1 L749.0 250.1 L750.0 250.1 L751.0 250.1 L752.0 250.0 L753.0 250.0 L754.0 250.0 L755.0 250.0 L756.0 249.9 L757.0 249.9 L758.0 249.9 L759.0 249.9 L760.0 249.8 L761.0 249.8 L762.0 249.8 L763.0 249.8 L764.0 249.7 L765.0 249.7 L766.0 249.7 L767.0 249.7 L768.0 249.6 L769.0 249.6 L770.0 249.6 L771.0 249.6 L772.0 249.5 L773.0 249.5 L774.0 249.5 L775.0 249.5 L776.0 249.4 L777.0 249.4 L778.0 249.4 L779.0 249.4 L780.0 249.3 L781.0 249.3 L782.0 249.3 L783.0 249.3 L784.0 249.2 L785.0 249.2 L786.0 249.2 L787.0 249.2 L788.0 249.2 L789.0 249.1 L790.0 249.1 L791.0 249.1 L792.0 249.1 L793.0 249.0 L794.0 249.0 L795.0 249.0 L796.0 249.0 L797.0 249.0 L798.0 248.9 L799.0 248.9 L800.0 248.9 L801.0 248.9 L802.0 248.8 L803.0 248.8 L804.0 248.8 L805.0 248.8 L806.0 248.8 L807.0 248.7 L808.0 248.7 L809.0 248.7 L810.0 248.7 L811.0 248.7 L812.0 248.6 L813.0 248.6 L814.0 248.6 L815.0 248.6 L816.0 248.6 L817.0 248.6 L818.0 248.5 L819.0 248.5 L820.0 248.5 L821.0 248.5 L822.0 248.5 L823.0 248.4 L824.0 248.4 L825.0 248.4 L826.0 248.4 L827.0 248.4 L828.0 248.4 L829.0 248.3 L830.0 248.3 L831.0 248.3 L832.0 248.3 L833.0 248.3 L834.0 248.3 L835.0 248.2 L836.0 248.2 L837.0 248.2 L838.0 248.2 L839.0 248.2 L840.0 248.2 L841.0 248.2 L842.0 248.1 L843.0 248.1 L844.0 248.1 L845.0 248.1 L846.0 248.1 L847.0 248.1 L848.0 248.1 L849.0 248.0 L850.0 248.0 L851.0 248.0 L852.0 248.0 L853.0 248.0 L854.0 248.0 L855.0 248.0 L856.0 248.0 L857.0 247.9 L858.0 247.9 L859.0 247.9 L860.0 247.9 L861.0 247.9 L862.0 247.9 L863.0 247.9 L864.0 247.9 L865.0 247.9 L866.0 247.8 L867.0 247.8 L868.0 247.8 L869.0 247.8 L870.0 247.8 L871.0 247.8 L872.0 247.8 L873.0 247.8 L874.0 247.8 L875.0 247.7 L876.0 247.7 L877.0 247.7 L878.0 247.7 L879.0 247.7 L880.0 247.7 L881.0 247.7 L882.0 247.7 L883.0 247.7 L884.0 247.7 L885.0 247.7 L886.0 247.6 L887.0 247.6 L888.0 247.6 L889.0 247.6 L890.0 247.6 L891.0 247.6 L892.0 247.6 L893.0 247.6 L894.0 247.6 L895.0 247.6 L896.0 247.6 L897.0 247.6 L898.0 247.6 L899.0 247.5 L900.0 247.5 L901.0 247.5 L902.0 247.5 L903.0 247.5 L904.0 247.5 L905.0 247.5 L906.0 247.5 L907.0 247.5 L908.0 247.5 L909.0 247.5 L910.0 247.5 L911.0 247.5 L912.0 247.5 L913.0 247.4 L914.0 247.4 L915.0 247.4 L916.0 247.4 L917.0 247.4 L918.0 247.4 L919.0 247.4 L920.0 247.4 L921.0 247.4 L922.0 247.4 L923.0 247.4 L924.0 247.4 L925.0 247.4 L926.0 247.4 L927.0 247.4 L928.0 247.4 L929.0 247.4 L930.0 247.4 L931.0 247.3 L932.0 247.3 L933.0 247.3 L934.0 247.3 L935.0 247.3 L936.0 247.3 L937.0 247.3 L938.0 247.3 L939.0 247.3 L940.0 247.3 L941.0 247.3 L942.0 247.3 L943.0 247.3 L944.0 247.3 L945.0 247.3 L946.0 247.3 L947.0 247.3 L948.0 247.3 L949.0 247.3 L950.0 247.3 L951.0 247.3 L952.0 247.3 L953.0 247.3 L954.0 247.2 L955.0 247.2 L956.0 247.2 L957.0 247.2 L958.0 247.2 L959.0 247.2 L960.0 247.2 L961.0 247.2 L962.0 247.2 L963.0 247.2 L964.0 247.2 L965.0 247.2 L966.0 247.2 L967.0 247.2 L968.0 247.2 L969.0 247.2 L970.0 247.2 L971.0 247.2 L972.0 247.2 L973.0 247.2 L974.0 247.2 L975.0 247.2 L976.0 247.2 L977.0 247.2 L978.0 247.2 L979.0 247.2 L980.0 247.2 L981.0 247.2 L982.0 247.2" fill="none" stroke="#4c6258" stroke-width="1.1" stroke-dasharray="1.4 1.5"/>
<path d="M-2.0 477.4 L-1.0 477.4 L0.0 477.4 L1.0 477.4 L2.0 477.4 L3.0 477.3 L4.0 477.3 L5.0 477.3 L6.0 477.3 L7.0 477.3 L8.0 477.3 L9.0 477.3 L10.0 477.3 L11.0 477.2 L12.0 477.2 L13.0 477.2 L14.0 477.2 L15.0 477.2 L16.0 477.2 L17.0 477.2 L18.0 477.1 L19.0 477.1 L20.0 477.1 L21.0 477.1 L22.0 477.1 L23.0 477.1 L24.0 477.0 L25.0 477.0 L26.0 477.0 L27.0 477.0 L28.0 477.0 L29.0 476.9 L30.0 476.9 L31.0 476.9 L32.0 476.9 L33.0 476.9 L34.0 476.8 L35.0 476.8 L36.0 476.8 L37.0 476.8 L38.0 476.7 L39.0 476.7 L40.0 476.7 L41.0 476.7 L42.0 476.6 L43.0 476.6 L44.0 476.6 L45.0 476.6 L46.0 476.5 L47.0 476.5 L48.0 476.5 L49.0 476.4 L50.0 476.4 L51.0 476.4 L52.0 476.3 L53.0 476.3 L54.0 476.3 L55.0 476.2 L56.0 476.2 L57.0 476.1 L58.0 476.1 L59.0 476.1 L60.0 476.0 L61.0 476.0 L62.0 475.9 L63.0 475.9 L64.0 475.8 L65.0 475.8 L66.0 475.7 L67.0 475.7 L68.0 475.6 L69.0 475.6 L70.0 475.5 L71.0 475.5 L72.0 475.4 L73.0 475.4 L74.0 475.3 L75.0 475.2 L76.0 475.2 L77.0 475.1 L78.0 475.0 L79.0 475.0 L80.0 474.9 L81.0 474.8 L82.0 474.7 L83.0 474.7 L84.0 474.6 L85.0 474.5 L86.0 474.4 L87.0 474.3 L88.0 474.3 L89.0 474.2 L90.0 474.1 L91.0 474.0 L92.0 473.9 L93.0 473.8 L94.0 473.7 L95.0 473.6 L96.0 473.5 L97.0 473.4 L98.0 473.3 L99.0 473.1 L100.0 473.0 L101.0 472.9 L102.0 472.8 L103.0 472.7 L104.0 472.6 L105.0 472.4 L106.0 472.3 L107.0 472.2 L108.0 472.0 L109.0 471.9 L110.0 471.7 L111.0 471.6 L112.0 471.5 L113.0 471.3 L114.0 471.2 L115.0 471.0 L116.0 470.9 L117.0 470.7 L118.0 470.5 L119.0 470.4 L120.0 470.2 L121.0 470.0 L122.0 469.9 L123.0 469.7 L124.0 469.5 L125.0 469.3 L126.0 469.2 L127.0 469.0 L128.0 468.8 L129.0 468.6 L130.0 468.4 L131.0 468.2 L132.0 468.0 L133.0 467.8 L134.0 467.6 L135.0 467.4 L136.0 467.2 L137.0 467.0 L138.0 466.8 L139.0 466.6 L140.0 466.3 L141.0 466.1 L142.0 465.9 L143.0 465.7 L144.0 465.4 L145.0 465.2 L146.0 465.0 L147.0 464.7 L148.0 464.5 L149.0 464.2 L150.0 464.0 L151.0 463.7 L152.0 463.5 L153.0 463.2 L154.0 463.0 L155.0 462.7 L156.0 462.4 L157.0 462.2 L158.0 461.9 L159.0 461.6 L160.0 461.3 L161.0 461.0 L162.0 460.7 L163.0 460.4 L164.0 460.1 L165.0 459.8 L166.0 459.5 L167.0 459.2 L168.0 458.8 L169.0 458.5 L170.0 458.2 L171.0 457.8 L172.0 457.4 L173.0 457.1 L174.0 456.7 L175.0 456.3 L176.0 455.9 L177.0 455.5 L178.0 455.1 L179.0 454.7 L180.0 454.3 L181.0 453.9 L182.0 453.4 L183.0 453.0 L184.0 452.5 L185.0 452.0 L186.0 451.5 L187.0 451.0 L188.0 450.5 L189.0 450.0 L190.0 449.4 L191.0 448.9 L192.0 448.3 L193.0 447.7 L194.0 447.1 L195.0 446.5 L196.0 445.8 L197.0 445.1 L198.0 444.5 L199.0 443.8 L200.0 443.0 L201.0 442.3 L202.0 441.5 L203.0 440.7 L204.0 439.9 L205.0 439.1 L206.0 438.2 L207.0 437.3 L208.0 436.4 L209.0 435.5 L210.0 434.5 L211.0 433.5 L212.0 432.5 L213.0 431.4 L214.0 430.3 L215.0 429.2 L216.0 428.0 L217.0 426.8 L218.0 425.5 L219.0 424.2 L220.0 422.9 L221.0 421.5 L222.0 420.1 L223.0 418.6 L224.0 417.1 L225.0 415.6 L226.0 413.9 L227.0 412.3 L228.0 410.5 L229.0 408.7 L230.0 406.9 L231.0 404.9 L232.0 403.0 L233.0 400.9 L234.0 398.8 L235.0 396.5 L236.0 394.3 L237.0 391.9 L238.0 389.4 L239.0 386.9 L240.0 384.2 L241.0 381.5 L242.0 378.6 L243.0 375.7 L244.0 372.6 L245.0 369.4 L246.0 366.1 L247.0 362.7 L248.0 359.1 L249.0 355.4 L250.0 351.5 L251.0 347.5 L252.0 343.4 L253.0 339.0 L254.0 334.5 L255.0 329.9 L256.0 325.0 L257.0 319.9 L258.0 314.7 L259.0 309.2 L260.0 303.6 L261.0 297.7 L262.0 291.6 L263.0 285.3 L264.0 278.7 L265.0 271.9 L266.0 265.0 L267.0 257.7 L268.0 250.3 L269.0 242.7 L270.0 234.9 L271.0 227.0 L272.0 218.9 L273.0 210.8 L274.0 202.5 L275.0 194.3 L276.0 186.2 L277.0 178.2 L278.0 170.4 L279.0 162.9 L280.0 155.8 L281.0 149.2 L282.0 143.2 L283.0 137.9 L284.0 133.3 L285.0 129.7 L286.0 127.0 L287.0 125.4 L288.0 124.8 L289.0 125.3 L290.0 126.9 L291.0 129.7 L292.0 133.6 L293.0 138.4 L294.0 144.1 L295.0 150.6 L296.0 157.7 L297.0 165.3 L298.0 173.3 L299.0 181.6 L300.0 190.2 L301.0 198.8 L302.0 207.4 L303.0 216.1 L304.0 224.6 L305.0 233.0 L306.0 241.3 L307.0 249.3 L308.0 257.2 L309.0 264.8 L310.0 272.1 L311.0 279.2 L312.0 286.1 L313.0 292.7 L314.0 299.1 L315.0 305.2 L316.0 311.1 L317.0 316.8 L318.0 322.2 L319.0 327.5 L320.0 332.5 L321.0 337.3 L322.0 341.9 L323.0 346.4 L324.0 350.6 L325.0 354.7 L326.0 358.7 L327.0 362.4 L328.0 366.1 L329.0 369.5 L330.0 372.9 L331.0 376.1 L332.0 379.2 L333.0 382.2 L334.0 385.1 L335.0 387.8 L336.0 390.5 L337.0 393.1 L338.0 395.5 L339.0 397.9 L340.0 400.2 L341.0 402.4 L342.0 404.6 L343.0 406.6 L344.0 408.6 L345.0 410.5 L346.0 412.4 L347.0 414.2 L348.0 415.9 L349.0 417.6 L350.0 419.2 L351.0 420.8 L352.0 422.3 L353.0 423.8 L354.0 425.2 L355.0 426.6 L356.0 427.9 L357.0 429.2 L358.0 430.4 L359.0 431.6 L360.0 432.8 L361.0 434.0 L362.0 435.1 L363.0 436.1 L364.0 437.2 L365.0 438.2 L366.0 439.2 L367.0 440.1 L368.0 441.0 L369.0 441.9 L370.0 442.8 L371.0 443.7 L372.0 444.5 L373.0 445.3 L374.0 446.1 L375.0 446.8 L376.0 447.5 L377.0 448.3 L378.0 449.0 L379.0 449.6 L380.0 450.3 L381.0 450.9 L382.0 451.5 L383.0 452.1 L384.0 452.7 L385.0 453.3 L386.0 453.8 L387.0 454.3 L388.0 454.8 L389.0 455.3 L390.0 455.8 L391.0 456.3 L392.0 456.7 L393.0 457.2 L394.0 457.6 L395.0 458.0 L396.0 458.4 L397.0 458.8 L398.0 459.2 L399.0 459.6 L400.0 459.9 L401.0 460.3 L402.0 460.6 L403.0 460.9 L404.0 461.2 L405.0 461.5 L406.0 461.8 L407.0 462.0 L408.0 462.3 L409.0 462.5 L410.0 462.7 L411.0 463.0 L412.0 463.2 L413.0 463.4 L414.0 463.6 L415.0 463.8 L416.0 464.1 L417.0 464.3 L418.0 464.5 L419.0 464.7 L420.0 465.0 L421.0 465.2 L422.0 465.5 L423.0 465.7 L424.0 465.9 L425.0 466.1 L426.0 466.3 L427.0 466.5 L428.0 466.8 L429.0 467.0 L430.0 467.1 L431.0 467.3 L432.0 467.5 L433.0 467.7 L434.0 467.9 L435.0 468.1 L436.0 468.2 L437.0 468.4 L438.0 468.6 L439.0 468.7 L440.0 468.9 L441.0 469.0 L442.0 469.2 L443.0 469.3 L444.0 469.5 L445.0 469.6 L446.0 469.7 L447.0 469.9 L448.0 470.0 L449.0 470.1 L450.0 470.3 L451.0 470.4 L452.0 470.5 L453.0 470.6 L454.0 470.7 L455.0 470.8 L456.0 471.0 L457.0 471.1 L458.0 471.2 L459.0 471.3 L460.0 471.4 L461.0 471.5 L462.0 471.6 L463.0 471.7 L464.0 471.8 L465.0 471.9 L466.0 471.9 L467.0 472.0 L468.0 472.0 L469.0 472.1 L470.0 472.1 L471.0 472.2 L472.0 472.2 L473.0 472.2 L474.0 472.2 L475.0 472.2 L476.0 472.2 L477.0 472.2 L478.0 472.2 L479.0 472.2 L480.0 472.2 L481.0 472.1 L482.0 472.1 L483.0 472.1 L484.0 472.1 L485.0 472.0 L486.0 472.0 L487.0 472.0 L488.0 471.9 L489.0 471.9 L490.0 471.8 L491.0 471.8 L492.0 471.7 L493.0 471.6 L494.0 471.5 L495.0 471.5 L496.0 471.4 L497.0 471.3 L498.0 471.2 L499.0 471.0 L500.0 470.9 L501.0 470.8 L502.0 470.7 L503.0 470.5 L504.0 470.4 L505.0 470.2 L506.0 470.1 L507.0 469.9 L508.0 469.8 L509.0 469.6 L510.0 469.4 L511.0 469.3 L512.0 469.1 L513.0 468.9 L514.0 468.7 L515.0 468.6 L516.0 468.4 L517.0 468.2 L518.0 468.0 L519.0 467.8 L520.0 467.6 L521.0 467.4 L522.0 467.2 L523.0 467.0 L524.0 466.9 L525.0 466.7 L526.0 466.5 L527.0 466.3 L528.0 466.1 L529.0 465.9 L530.0 465.7 L531.0 465.5 L532.0 465.3 L533.0 465.1 L534.0 464.9 L535.0 464.8 L536.0 464.6 L537.0 464.4 L538.0 464.2 L539.0 464.0 L540.0 463.8 L541.0 463.7 L542.0 463.5 L543.0 463.3 L544.0 463.1 L545.0 462.9 L546.0 462.7 L547.0 462.5 L548.0 462.3 L549.0 462.1 L550.0 461.9 L551.0 461.7 L552.0 461.6 L553.0 461.4 L554.0 461.2 L555.0 461.0 L556.0 460.8 L557.0 460.6 L558.0 460.3 L559.0 460.1 L560.0 459.9 L561.0 459.7 L562.0 459.5 L563.0 459.3 L564.0 459.1 L565.0 458.9 L566.0 458.7 L567.0 458.4 L568.0 458.2 L569.0 458.0 L570.0 457.8 L571.0 457.5 L572.0 457.3 L573.0 457.1 L574.0 456.8 L575.0 456.6 L576.0 456.3 L577.0 456.1 L578.0 455.9 L579.0 455.6 L580.0 455.4 L581.0 455.1 L582.0 454.9 L583.0 454.6 L584.0 454.3 L585.0 454.1 L586.0 453.8 L587.0 453.5 L588.0 453.2 L589.0 452.9 L590.0 452.6 L591.0 452.3 L592.0 452.0 L593.0 451.7 L594.0 451.4 L595.0 451.2 L596.0 450.9 L597.0 450.6 L598.0 450.3 L599.0 450.0 L600.0 449.7 L601.0 449.5 L602.0 449.2 L603.0 448.9 L604.0 448.6 L605.0 448.4 L606.0 448.1 L607.0 447.8 L608.0 447.6 L609.0 447.3 L610.0 447.0 L611.0 446.7 L612.0 446.5 L613.0 446.2 L614.0 445.9 L615.0 445.6 L616.0 445.3 L617.0 445.1 L618.0 444.8 L619.0 444.5 L620.0 444.2 L621.0 443.9 L622.0 443.6 L623.0 443.3 L624.0 443.0 L625.0 442.7 L626.0 442.4 L627.0 442.1 L628.0 441.8 L629.0 441.4 L630.0 441.1 L631.0 440.8 L632.0 440.4 L633.0 440.1 L634.0 439.7 L635.0 439.4 L636.0 439.0 L637.0 438.6 L638.0 438.2 L639.0 437.8 L640.0 437.4 L641.0 437.0 L642.0 436.6 L643.0 436.2 L644.0 435.8 L645.0 435.3 L646.0 434.9 L647.0 434.5 L648.0 434.0 L649.0 433.6 L650.0 433.1 L651.0 432.7 L652.0 432.2 L653.0 431.8 L654.0 431.3 L655.0 430.9 L656.0 430.4 L657.0 429.9 L658.0 429.4 L659.0 428.9 L660.0 428.4 L661.0 427.9 L662.0 427.4 L663.0 426.9 L664.0 426.4 L665.0 425.9 L666.0 425.3 L667.0 424.8 L668.0 424.3 L669.0 423.7 L670.0 423.2 L671.0 422.6 L672.0 422.1 L673.0 421.5 L674.0 421.0 L675.0 420.4 L676.0 419.8 L677.0 419.3 L678.0 418.7 L679.0 418.1 L680.0 417.6 L681.0 417.0 L682.0 416.4 L683.0 415.8 L684.0 415.2 L685.0 414.6 L686.0 414.0 L687.0 413.4 L688.0 412.8 L689.0 412.2 L690.0 411.6 L691.0 411.0 L692.0 410.4 L693.0 409.7 L694.0 409.1 L695.0 408.4 L696.0 407.8 L697.0 407.2 L698.0 406.5 L699.0 405.8 L700.0 405.2 L701.0 404.5 L702.0 403.8 L703.0 403.1 L704.0 402.5 L705.0 401.8 L706.0 401.1 L707.0 400.4 L708.0 399.7 L709.0 398.9 L710.0 398.2 L711.0 397.5 L712.0 396.8 L713.0 396.0 L714.0 395.3 L715.0 394.5 L716.0 393.8 L717.0 393.0 L718.0 392.3 L719.0 391.5 L720.0 390.7 L721.0 389.9 L722.0 389.1 L723.0 388.3 L724.0 387.5 L725.0 386.7 L726.0 385.9 L727.0 385.1 L728.0 384.3 L729.0 383.4 L730.0 382.6 L731.0 381.7 L732.0 380.9 L733.0 380.0 L734.0 379.2 L735.0 378.3 L736.0 377.4 L737.0 376.5 L738.0 375.6 L739.0 374.7 L740.0 373.8 L741.0 372.9 L742.0 372.0 L743.0 371.0 L744.0 370.1 L745.0 369.2 L746.0 368.3 L747.0 367.3 L748.0 366.4 L749.0 365.4 L750.0 364.5 L751.0 363.5 L752.0 362.5 L753.0 361.6 L754.0 360.6 L755.0 359.6 L756.0 358.6 L757.0 357.6 L758.0 356.6 L759.0 355.6 L760.0 354.6 L761.0 353.5 L762.0 352.5 L763.0 351.5 L764.0 350.5 L765.0 349.4 L766.0 348.4 L767.0 347.4 L768.0 346.3 L769.0 345.3 L770.0 344.3 L771.0 343.2 L772.0 342.2 L773.0 341.2 L774.0 340.1 L775.0 339.1 L776.0 338.1 L777.0 337.0 L778.0 336.0 L779.0 334.9 L780.0 333.9 L781.0 332.9 L782.0 331.8 L783.0 330.8 L784.0 329.7 L785.0 328.7 L786.0 327.6 L787.0 326.5 L788.0 325.5 L789.0 324.4 L790.0 323.4 L791.0 322.3 L792.0 321.3 L793.0 320.2 L794.0 319.2 L795.0 318.1 L796.0 317.1 L797.0 316.1 L798.0 315.0 L799.0 314.0 L800.0 313.0 L801.0 311.9 L802.0 310.9 L803.0 309.9 L804.0 308.8 L805.0 307.8 L806.0 306.8 L807.0 305.8 L808.0 304.7 L809.0 303.7 L810.0 302.7 L811.0 301.6 L812.0 300.6 L813.0 299.5 L814.0 298.5 L815.0 297.4 L816.0 296.4 L817.0 295.3 L818.0 294.2 L819.0 293.2 L820.0 292.1 L821.0 291.0 L822.0 289.9 L823.0 288.8 L824.0 287.7 L825.0 286.6 L826.0 285.5 L827.0 284.4 L828.0 283.3 L829.0 282.1 L830.0 280.9 L831.0 279.7 L832.0 278.5 L833.0 277.3 L834.0 276.0 L835.0 274.7 L836.0 273.4 L837.0 272.1 L838.0 270.8 L839.0 269.5 L840.0 268.1 L841.0 266.7 L842.0 265.4 L843.0 264.0 L844.0 262.6 L845.0 261.1 L846.0 259.7 L847.0 258.3 L848.0 256.8 L849.0 255.3 L850.0 253.9 L851.0 252.4 L852.0 250.9 L853.0 249.4 L854.0 247.8 L855.0 246.3 L856.0 244.7 L857.0 243.1 L858.0 241.5 L859.0 239.9 L860.0 238.2 L861.0 236.5 L862.0 234.8 L863.0 233.1 L864.0 231.4 L865.0 229.7 L866.0 227.9 L867.0 226.2 L868.0 224.4 L869.0 222.6 L870.0 220.9 L871.0 219.1 L872.0 217.3 L873.0 215.5 L874.0 213.8 L875.0 212.0 L876.0 210.2 L877.0 208.5 L878.0 206.8 L879.0 205.0 L880.0 203.3 L881.0 201.6 L882.0 199.9 L883.0 198.1 L884.0 196.4 L885.0 194.7 L886.0 193.0 L887.0 191.3 L888.0 189.6 L889.0 187.8 L890.0 186.1 L891.0 184.4 L892.0 182.6 L893.0 180.8 L894.0 179.1 L895.0 177.3 L896.0 175.5 L897.0 173.7 L898.0 171.9 L899.0 170.0 L900.0 168.2 L901.0 166.3 L902.0 164.4 L903.0 162.5 L904.0 160.6 L905.0 158.6 L906.0 156.7 L907.0 154.7 L908.0 152.8 L909.0 150.8 L910.0 148.8 L911.0 146.8 L912.0 144.8 L913.0 142.7 L914.0 140.7 L915.0 138.6 L916.0 136.6 L917.0 134.5 L918.0 132.4 L919.0 130.4 L920.0 128.3 L921.0 126.2 L922.0 124.1 L923.0 122.0 L924.0 119.9 L925.0 117.8 L926.0 115.6 L927.0 113.5 L928.0 111.4 L929.0 109.3 L930.0 107.1 L931.0 105.0 L932.0 102.9 L933.0 100.7 L934.0 98.6 L935.0 96.4 L936.0 94.2 L937.0 92.1 L938.0 89.9 L939.0 87.7 L940.0 85.5 L941.0 83.3 L942.0 81.1 L943.0 78.9 L944.0 76.6 L945.0 74.4 L946.0 72.2 L947.0 69.9 L948.0 67.7 L949.0 65.4 L950.0 63.2 L951.0 60.9 L952.0 58.7 L953.0 56.4 L954.0 54.1 L955.0 51.9 L956.0 49.6 L957.0 47.3 L958.0 45.1 L959.0 42.8 L960.0 40.5 L961.0 38.2 L962.0 35.9 L963.0 33.7 L964.0 31.4 L965.0 29.1 L966.0 26.8 L967.0 24.5 L968.0 22.2 L969.0 19.9 L970.0 17.5 L971.0 15.2 L972.0 12.9 L973.0 10.6 L974.0 8.2 L975.0 5.9 L976.0 3.6 L977.0 1.2 L978.0 -1.1 L979.0 -3.4 L980.0 -5.8 L981.0 -8.1 L982.0 -10.5" fill="none" stroke="#5c5c5c" stroke-width="1" stroke-dasharray="4.6 1.8"/>
<path d="M-2.0 569.7 L-1.0 569.6 L0.0 569.5 L1.0 569.5 L2.0 569.4 L3.0 569.3 L4.0 569.2 L5.0 569.1 L6.0 569.0 L7.0 568.9 L8.0 568.9 L9.0 568.8 L10.0 568.7 L11.0 568.6 L12.0 568.5 L13.0 568.4 L14.0 568.3 L15.0 568.2 L16.0 568.1 L17.0 568.0 L18.0 567.9 L19.0 567.8 L20.0 567.7 L21.0 567.6 L22.0 567.5 L23.0 567.4 L24.0 567.3 L25.0 567.2 L26.0 567.1 L27.0 567.0 L28.0 566.9 L29.0 566.8 L30.0 566.7 L31.0 566.5 L32.0 566.4 L33.0 566.3 L34.0 566.2 L35.0 566.1 L36.0 566.0 L37.0 565.8 L38.0 565.7 L39.0 565.6 L40.0 565.5 L41.0 565.4 L42.0 565.2 L43.0 565.1 L44.0 565.0 L45.0 564.8 L46.0 564.7 L47.0 564.6 L48.0 564.5 L49.0 564.3 L50.0 564.2 L51.0 564.0 L52.0 563.9 L53.0 563.8 L54.0 563.6 L55.0 563.5 L56.0 563.3 L57.0 563.2 L58.0 563.0 L59.0 562.9 L60.0 562.7 L61.0 562.6 L62.0 562.4 L63.0 562.3 L64.0 562.1 L65.0 562.0 L66.0 561.8 L67.0 561.6 L68.0 561.5 L69.0 561.3 L70.0 561.2 L71.0 561.0 L72.0 560.8 L73.0 560.6 L74.0 560.5 L75.0 560.3 L76.0 560.1 L77.0 559.9 L78.0 559.7 L79.0 559.6 L80.0 559.4 L81.0 559.2 L82.0 559.0 L83.0 558.8 L84.0 558.6 L85.0 558.4 L86.0 558.2 L87.0 558.0 L88.0 557.8 L89.0 557.6 L90.0 557.4 L91.0 557.2 L92.0 557.0 L93.0 556.8 L94.0 556.6 L95.0 556.3 L96.0 556.1 L97.0 555.9 L98.0 555.7 L99.0 555.4 L100.0 555.2 L101.0 555.0 L102.0 554.7 L103.0 554.5 L104.0 554.3 L105.0 554.0 L106.0 553.8 L107.0 553.5 L108.0 553.3 L109.0 553.0 L110.0 552.8 L111.0 552.5 L112.0 552.2 L113.0 552.0 L114.0 551.7 L115.0 551.4 L116.0 551.1 L117.0 550.9 L118.0 550.6 L119.0 550.3 L120.0 550.0 L121.0 549.7 L122.0 549.4 L123.0 549.1 L124.0 548.8 L125.0 548.5 L126.0 548.2 L127.0 547.9 L128.0 547.6 L129.0 547.2 L130.0 546.9 L131.0 546.6 L132.0 546.2 L133.0 545.9 L134.0 545.6 L135.0 545.2 L136.0 544.9 L137.0 544.5 L138.0 544.2 L139.0 543.8 L140.0 543.4 L141.0 543.0 L142.0 542.7 L143.0 542.3 L144.0 541.9 L145.0 541.5 L146.0 541.1 L147.0 540.7 L148.0 540.3 L149.0 539.9 L150.0 539.4 L151.0 539.0 L152.0 538.6 L153.0 538.1 L154.0 537.7 L155.0 537.2 L156.0 536.8 L157.0 536.3 L158.0 535.9 L159.0 535.4 L160.0 534.9 L161.0 534.4 L162.0 533.9 L163.0 533.4 L164.0 532.9 L165.0 532.4 L166.0 531.8 L167.0 531.3 L168.0 530.8 L169.0 530.2 L170.0 529.7 L171.0 529.1 L172.0 528.5 L173.0 527.9 L174.0 527.3 L175.0 526.7 L176.0 526.1 L177.0 525.5 L178.0 524.9 L179.0 524.2 L180.0 523.6 L181.0 522.9 L182.0 522.2 L183.0 521.5 L184.0 520.8 L185.0 520.1 L186.0 519.4 L187.0 518.7 L188.0 517.9 L189.0 517.1 L190.0 516.4 L191.0 515.6 L192.0 514.8 L193.0 514.0 L194.0 513.1 L195.0 512.3 L196.0 511.4 L197.0 510.5 L198.0 509.6 L199.0 508.7 L200.0 507.8 L201.0 506.8 L202.0 505.8 L203.0 504.9 L204.0 503.8 L205.0 502.8 L206.0 501.8 L207.0 500.7 L208.0 499.6 L209.0 498.5 L210.0 497.3 L211.0 496.1 L212.0 494.9 L213.0 493.7 L214.0 492.5 L215.0 491.2 L216.0 489.9 L217.0 488.5 L218.0 487.1 L219.0 485.7 L220.0 484.3 L221.0 482.8 L222.0 481.3 L223.0 479.7 L224.0 478.2 L225.0 476.5 L226.0 474.8 L227.0 473.1 L228.0 471.4 L229.0 469.5 L230.0 467.7 L231.0 465.8 L232.0 463.8 L233.0 461.7 L234.0 459.7 L235.0 457.5 L236.0 455.3 L237.0 453.0 L238.0 450.7 L239.0 448.3 L240.0 445.8 L241.0 443.2 L242.0 440.5 L243.0 437.8 L244.0 435.0 L245.0 432.0 L246.0 429.0 L247.0 425.9 L248.0 422.7 L249.0 419.3 L250.0 415.9 L251.0 412.3 L252.0 408.6 L253.0 404.8 L254.0 400.8 L255.0 396.7 L256.0 392.5 L257.0 388.1 L258.0 383.5 L259.0 378.8 L260.0 373.9 L261.0 368.9 L262.0 363.7 L263.0 358.3 L264.0 352.7 L265.0 347.0 L266.0 341.1 L267.0 335.0 L268.0 328.8 L269.0 322.4 L270.0 315.9 L271.0 309.2 L272.0 302.5 L273.0 295.7 L274.0 288.9 L275.0 282.1 L276.0 275.4 L277.0 268.8 L278.0 262.3 L279.0 256.2 L280.0 250.3 L281.0 244.9 L282.0 239.9 L283.0 235.6 L284.0 231.9 L285.0 228.9 L286.0 226.7 L287.0 225.3 L288.0 224.8 L289.0 225.2 L290.0 226.6 L291.0 228.9 L292.0 232.0 L293.0 236.0 L294.0 240.7 L295.0 246.0 L296.0 251.8 L297.0 258.1 L298.0 264.7 L299.0 271.6 L300.0 278.6 L301.0 285.8 L302.0 293.0 L303.0 300.1 L304.0 307.2 L305.0 314.2 L306.0 321.1 L307.0 327.9 L308.0 334.5 L309.0 340.9 L310.0 347.1 L311.0 353.1 L312.0 358.9 L313.0 364.6 L314.0 370.0 L315.0 375.3 L316.0 380.3 L317.0 385.2 L318.0 390.0 L319.0 394.5 L320.0 398.9 L321.0 403.1 L322.0 407.2 L323.0 411.1 L324.0 414.9 L325.0 418.5 L326.0 422.1 L327.0 425.5 L328.0 428.7 L329.0 431.9 L330.0 435.0 L331.0 437.9 L332.0 440.8 L333.0 443.5 L334.0 446.2 L335.0 448.8 L336.0 451.3 L337.0 453.7 L338.0 456.1 L339.0 458.4 L340.0 460.6 L341.0 462.7 L342.0 464.8 L343.0 466.8 L344.0 468.8 L345.0 470.7 L346.0 472.6 L347.0 474.4 L348.0 476.1 L349.0 477.8 L350.0 479.5 L351.0 481.1 L352.0 482.7 L353.0 484.2 L354.0 485.7 L355.0 487.2 L356.0 488.6 L357.0 490.0 L358.0 491.3 L359.0 492.7 L360.0 494.0 L361.0 495.2 L362.0 496.5 L363.0 497.7 L364.0 498.8 L365.0 500.0 L366.0 501.1 L367.0 502.2 L368.0 503.3 L369.0 504.3 L370.0 505.4 L371.0 506.4 L372.0 507.4 L373.0 508.3 L374.0 509.3 L375.0 510.2 L376.0 511.1 L377.0 512.0 L378.0 512.9 L379.0 513.8 L380.0 514.6 L381.0 515.4 L382.0 516.2 L383.0 517.0 L384.0 517.8 L385.0 518.6 L386.0 519.4 L387.0 520.1 L388.0 520.8 L389.0 521.5 L390.0 522.2 L391.0 522.9 L392.0 523.6 L393.0 524.3 L394.0 524.9 L395.0 525.6 L396.0 526.2 L397.0 526.8 L398.0 527.5 L399.0 528.1 L400.0 528.7 L401.0 529.2 L402.0 529.8 L403.0 530.4 L404.0 530.9 L405.0 531.5 L406.0 532.0 L407.0 532.6 L408.0 533.1 L409.0 533.6 L410.0 534.1 L411.0 534.6 L412.0 535.1 L413.0 535.6 L414.0 536.1 L415.0 536.6 L416.0 537.0 L417.0 537.5 L418.0 537.9 L419.0 538.4 L420.0 538.8 L421.0 539.3 L422.0 539.7 L423.0 540.1 L424.0 540.5 L425.0 540.9 L426.0 541.4 L427.0 541.8 L428.0 542.2 L429.0 542.5 L430.0 542.9 L431.0 543.3 L432.0 543.7 L433.0 544.1 L434.0 544.4 L435.0 544.8 L436.0 545.1 L437.0 545.5 L438.0 545.8 L439.0 546.2 L440.0 546.5 L441.0 546.9 L442.0 547.2 L443.0 547.5 L444.0 547.8 L445.0 548.1 L446.0 548.5 L447.0 548.8 L448.0 549.1 L449.0 549.4 L450.0 549.7 L451.0 550.0 L452.0 550.3 L453.0 550.6 L454.0 550.8 L455.0 551.1 L456.0 551.4 L457.0 551.7 L458.0 552.0 L459.0 552.2 L460.0 552.5 L461.0 552.8 L462.0 553.0 L463.0 553.3 L464.0 553.5 L465.0 553.8 L466.0 554.0 L467.0 554.3 L468.0 554.5 L469.0 554.7 L470.0 555.0 L471.0 555.2 L472.0 555.5 L473.0 555.7 L474.0 555.9 L475.0 556.1 L476.0 556.4 L477.0 556.6 L478.0 556.8 L479.0 557.0 L480.0 557.2 L481.0 557.4 L482.0 557.6 L483.0 557.8 L484.0 558.0 L485.0 558.2 L486.0 558.4 L487.0 558.6 L488.0 558.8 L489.0 559.0 L490.0 559.2 L491.0 559.4 L492.0 559.6 L493.0 559.8 L494.0 560.0 L495.0 560.1 L496.0 560.3 L497.0 560.5 L498.0 560.7 L499.0 560.8 L500.0 561.0 L501.0 561.2 L502.0 561.3 L503.0 561.5 L504.0 561.7 L505.0 561.8 L506.0 562.0 L507.0 562.2 L508.0 562.3 L509.0 562.5 L510.0 562.6 L511.0 562.8 L512.0 562.9 L513.0 563.1 L514.0 563.2 L515.0 563.4 L516.0 563.5 L517.0 563.7 L518.0 563.8 L519.0 563.9 L520.0 564.1 L521.0 564.2 L522.0 564.3 L523.0 564.5 L524.0 564.6 L525.0 564.7 L526.0 564.9 L527.0 565.0 L528.0 565.1 L529.0 565.3 L530.0 565.4 L531.0 565.5 L532.0 565.6 L533.0 565.8 L534.0 565.9 L535.0 566.0 L536.0 566.1 L537.0 566.2 L538.0 566.3 L539.0 566.5 L540.0 566.6 L541.0 566.7 L542.0 566.8 L543.0 566.9 L544.0 567.0 L545.0 567.1 L546.0 567.2 L547.0 567.3 L548.0 567.4 L549.0 567.5 L550.0 567.6 L551.0 567.7 L552.0 567.8 L553.0 567.9 L554.0 568.0 L555.0 568.1 L556.0 568.2 L557.0 568.3 L558.0 568.4 L559.0 568.5 L560.0 568.6 L561.0 568.7 L562.0 568.8 L563.0 568.9 L564.0 569.0 L565.0 569.1 L566.0 569.1 L567.0 569.2 L568.0 569.3 L569.0 569.4 L570.0 569.5 L571.0 569.6 L572.0 569.6 L573.0 569.7 L574.0 569.8 L575.0 569.9 L576.0 570.0 L577.0 570.0 L578.0 570.1 L579.0 570.2 L580.0 570.3 L581.0 570.4 L582.0 570.4 L583.0 570.5 L584.0 570.6 L585.0 570.6 L586.0 570.7 L587.0 570.8 L588.0 570.9 L589.0 570.9 L590.0 571.0 L591.0 571.1 L592.0 571.1 L593.0 571.2 L594.0 571.3 L595.0 571.3 L596.0 571.4 L597.0 571.5 L598.0 571.5 L599.0 571.6 L600.0 571.6 L601.0 571.7 L602.0 571.8 L603.0 571.8 L604.0 571.9 L605.0 571.9 L606.0 572.0 L607.0 572.1 L608.0 572.1 L609.0 572.2 L610.0 572.2 L611.0 572.3 L612.0 572.3 L613.0 572.4 L614.0 572.5 L615.0 572.5 L616.0 572.6 L617.0 572.6 L618.0 572.7 L619.0 572.7 L620.0 572.8 L621.0 572.8 L622.0 572.9 L623.0 572.9 L624.0 573.0 L625.0 573.0 L626.0 573.1 L627.0 573.1 L628.0 573.2 L629.0 573.2 L630.0 573.3 L631.0 573.3 L632.0 573.3 L633.0 573.4 L634.0 573.4 L635.0 573.5 L636.0 573.5 L637.0 573.6 L638.0 573.6 L639.0 573.7 L640.0 573.7 L641.0 573.7 L642.0 573.8 L643.0 573.8 L644.0 573.9 L645.0 573.9 L646.0 573.9 L647.0 574.0 L648.0 574.0 L649.0 574.1 L650.0 574.1 L651.0 574.1 L652.0 574.2 L653.0 574.2 L654.0 574.2 L655.0 574.3 L656.0 574.3 L657.0 574.4 L658.0 574.4 L659.0 574.4 L660.0 574.5 L661.0 574.5 L662.0 574.5 L663.0 574.6 L664.0 574.6 L665.0 574.6 L666.0 574.7 L667.0 574.7 L668.0 574.7 L669.0 574.8 L670.0 574.8 L671.0 574.8 L672.0 574.8 L673.0 574.9 L674.0 574.9 L675.0 574.9 L676.0 575.0 L677.0 575.0 L678.0 575.0 L679.0 575.1 L680.0 575.1 L681.0 575.1 L682.0 575.1 L683.0 575.2 L684.0 575.2 L685.0 575.2 L686.0 575.2 L687.0 575.3 L688.0 575.3 L689.0 575.3 L690.0 575.4 L691.0 575.4 L692.0 575.4 L693.0 575.4 L694.0 575.5 L695.0 575.5 L696.0 575.5 L697.0 575.5 L698.0 575.5 L699.0 575.6 L700.0 575.6 L701.0 575.6 L702.0 575.6 L703.0 575.7 L704.0 575.7 L705.0 575.7 L706.0 575.7 L707.0 575.8 L708.0 575.8 L709.0 575.8 L710.0 575.8 L711.0 575.8 L712.0 575.9 L713.0 575.9 L714.0 575.9 L715.0 575.9 L716.0 575.9 L717.0 576.0 L718.0 576.0 L719.0 576.0 L720.0 576.0 L721.0 576.0 L722.0 576.1 L723.0 576.1 L724.0 576.1 L725.0 576.1 L726.0 576.1 L727.0 576.2 L728.0 576.2 L729.0 576.2 L730.0 576.2 L731.0 576.2 L732.0 576.2 L733.0 576.3 L734.0 576.3 L735.0 576.3 L736.0 576.3 L737.0 576.3 L738.0 576.3 L739.0 576.4 L740.0 576.4 L741.0 576.4 L742.0 576.4 L743.0 576.4 L744.0 576.4 L745.0 576.4 L746.0 576.5 L747.0 576.5 L748.0 576.5 L749.0 576.5 L750.0 576.5 L751.0 576.5 L752.0 576.5 L753.0 576.6 L754.0 576.6 L755.0 576.6 L756.0 576.6 L757.0 576.6 L758.0 576.6 L759.0 576.6 L760.0 576.7 L761.0 576.7 L762.0 576.7 L763.0 576.7 L764.0 576.7 L765.0 576.7 L766.0 576.7 L767.0 576.7 L768.0 576.8 L769.0 576.8 L770.0 576.8 L771.0 576.8 L772.0 576.8 L773.0 576.8 L774.0 576.8 L775.0 576.8 L776.0 576.9 L777.0 576.9 L778.0 576.9 L779.0 576.9 L780.0 576.9 L781.0 576.9 L782.0 576.9 L783.0 576.9 L784.0 576.9 L785.0 576.9 L786.0 577.0 L787.0 577.0 L788.0 577.0 L789.0 577.0 L790.0 577.0 L791.0 577.0 L792.0 577.0 L793.0 577.0 L794.0 577.0 L795.0 577.0 L796.0 577.1 L797.0 577.1 L798.0 577.1 L799.0 577.1 L800.0 577.1 L801.0 577.1 L802.0 577.1 L803.0 577.1 L804.0 577.1 L805.0 577.1 L806.0 577.1 L807.0 577.1 L808.0 577.2 L809.0 577.2 L810.0 577.2 L811.0 577.2 L812.0 577.2 L813.0 577.2 L814.0 577.2 L815.0 577.2 L816.0 577.2 L817.0 577.2 L818.0 577.2 L819.0 577.2 L820.0 577.2 L821.0 577.3 L822.0 577.3 L823.0 577.3 L824.0 577.3 L825.0 577.3 L826.0 577.3 L827.0 577.3 L828.0 577.3 L829.0 577.3 L830.0 577.3 L831.0 577.3 L832.0 577.3 L833.0 577.3 L834.0 577.3 L835.0 577.4 L836.0 577.4 L837.0 577.4 L838.0 577.4 L839.0 577.4 L840.0 577.4 L841.0 577.4 L842.0 577.4 L843.0 577.4 L844.0 577.4 L845.0 577.4 L846.0 577.4 L847.0 577.4 L848.0 577.4 L849.0 577.4 L850.0 577.4 L851.0 577.4 L852.0 577.5 L853.0 577.5 L854.0 577.5 L855.0 577.5 L856.0 577.5 L857.0 577.5 L858.0 577.5 L859.0 577.5 L860.0 577.5 L861.0 577.5 L862.0 577.5 L863.0 577.5 L864.0 577.5 L865.0 577.5 L866.0 577.5 L867.0 577.5 L868.0 577.5 L869.0 577.5 L870.0 577.5 L871.0 577.5 L872.0 577.5 L873.0 577.6 L874.0 577.6 L875.0 577.6 L876.0 577.6 L877.0 577.6 L878.0 577.6 L879.0 577.6 L880.0 577.6 L881.0 577.6 L882.0 577.6 L883.0 577.6 L884.0 577.6 L885.0 577.6 L886.0 577.6 L887.0 577.6 L888.0 577.6 L889.0 577.6 L890.0 577.6 L891.0 577.6 L892.0 577.6 L893.0 577.6 L894.0 577.6 L895.0 577.6 L896.0 577.6 L897.0 577.6 L898.0 577.6 L899.0 577.7 L900.0 577.7 L901.0 577.7 L902.0 577.7 L903.0 577.7 L904.0 577.7 L905.0 577.7 L906.0 577.7 L907.0 577.7 L908.0 577.7 L909.0 577.7 L910.0 577.7 L911.0 577.7 L912.0 577.7 L913.0 577.7 L914.0 577.7 L915.0 577.7 L916.0 577.7 L917.0 577.7 L918.0 577.7 L919.0 577.7 L920.0 577.7 L921.0 577.7 L922.0 577.7 L923.0 577.7 L924.0 577.7 L925.0 577.7 L926.0 577.7 L927.0 577.7 L928.0 577.7 L929.0 577.7 L930.0 577.7 L931.0 577.7 L932.0 577.7 L933.0 577.7 L934.0 577.8 L935.0 577.8 L936.0 577.8 L937.0 577.8 L938.0 577.8 L939.0 577.8 L940.0 577.8 L941.0 577.8 L942.0 577.8 L943.0 577.8 L944.0 577.8 L945.0 577.8 L946.0 577.8 L947.0 577.8 L948.0 577.8 L949.0 577.8 L950.0 577.8 L951.0 577.8 L952.0 577.8 L953.0 577.8 L954.0 577.8 L955.0 577.8 L956.0 577.8 L957.0 577.8 L958.0 577.8 L959.0 577.8 L960.0 577.8 L961.0 577.8 L962.0 577.8 L963.0 577.8 L964.0 577.8 L965.0 577.8 L966.0 577.8 L967.0 577.8 L968.0 577.8 L969.0 577.8 L970.0 577.8 L971.0 577.8 L972.0 577.8 L973.0 577.8 L974.0 577.8 L975.0 577.8 L976.0 577.8 L977.0 577.8 L978.0 577.8 L979.0 577.8 L980.0 577.8 L981.0 577.8 L982.0 577.8" fill="none" stroke="#5c5c5c" stroke-width="1" stroke-dasharray="4.6 1.8"/>
<path d="M-2.0 477.8 L-1.0 477.8 L0.0 477.8 L1.0 477.8 L2.0 477.8 L3.0 477.8 L4.0 477.8 L5.0 477.8 L6.0 477.8 L7.0 477.8 L8.0 477.8 L9.0 477.8 L10.0 477.8 L11.0 477.8 L12.0 477.8 L13.0 477.8 L14.0 477.8 L15.0 477.8 L16.0 477.8 L17.0 477.8 L18.0 477.8 L19.0 477.8 L20.0 477.8 L21.0 477.8 L22.0 477.8 L23.0 477.8 L24.0 477.8 L25.0 477.8 L26.0 477.8 L27.0 477.8 L28.0 477.8 L29.0 477.8 L30.0 477.8 L31.0 477.8 L32.0 477.8 L33.0 477.8 L34.0 477.8 L35.0 477.8 L36.0 477.8 L37.0 477.8 L38.0 477.8 L39.0 477.8 L40.0 477.8 L41.0 477.8 L42.0 477.8 L43.0 477.8 L44.0 477.8 L45.0 477.8 L46.0 477.8 L47.0 477.8 L48.0 477.8 L49.0 477.8 L50.0 477.8 L51.0 477.8 L52.0 477.8 L53.0 477.8 L54.0 477.8 L55.0 477.8 L56.0 477.8 L57.0 477.8 L58.0 477.8 L59.0 477.8 L60.0 477.8 L61.0 477.8 L62.0 477.8 L63.0 477.8 L64.0 477.8 L65.0 477.8 L66.0 477.8 L67.0 477.8 L68.0 477.8 L69.0 477.8 L70.0 477.8 L71.0 477.8 L72.0 477.8 L73.0 477.8 L74.0 477.8 L75.0 477.8 L76.0 477.8 L77.0 477.8 L78.0 477.8 L79.0 477.8 L80.0 477.8 L81.0 477.8 L82.0 477.8 L83.0 477.8 L84.0 477.8 L85.0 477.8 L86.0 477.8 L87.0 477.8 L88.0 477.8 L89.0 477.8 L90.0 477.8 L91.0 477.8 L92.0 477.8 L93.0 477.8 L94.0 477.8 L95.0 477.8 L96.0 477.8 L97.0 477.8 L98.0 477.8 L99.0 477.8 L100.0 477.8 L101.0 477.8 L102.0 477.8 L103.0 477.8 L104.0 477.8 L105.0 477.8 L106.0 477.8 L107.0 477.8 L108.0 477.8 L109.0 477.8 L110.0 477.8 L111.0 477.8 L112.0 477.8 L113.0 477.8 L114.0 477.8 L115.0 477.8 L116.0 477.8 L117.0 477.8 L118.0 477.8 L119.0 477.8 L120.0 477.8 L121.0 477.8 L122.0 477.8 L123.0 477.8 L124.0 477.8 L125.0 477.8 L126.0 477.8 L127.0 477.8 L128.0 477.8 L129.0 477.8 L130.0 477.8 L131.0 477.8 L132.0 477.8 L133.0 477.8 L134.0 477.8 L135.0 477.8 L136.0 477.8 L137.0 477.8 L138.0 477.8 L139.0 477.8 L140.0 477.8 L141.0 477.8 L142.0 477.8 L143.0 477.8 L144.0 477.8 L145.0 477.8 L146.0 477.8 L147.0 477.8 L148.0 477.8 L149.0 477.8 L150.0 477.8 L151.0 477.8 L152.0 477.8 L153.0 477.8 L154.0 477.8 L155.0 477.8 L156.0 477.8 L157.0 477.8 L158.0 477.8 L159.0 477.8 L160.0 477.8 L161.0 477.8 L162.0 477.8 L163.0 477.8 L164.0 477.8 L165.0 477.8 L166.0 477.8 L167.0 477.8 L168.0 477.8 L169.0 477.8 L170.0 477.8 L171.0 477.8 L172.0 477.8 L173.0 477.8 L174.0 477.8 L175.0 477.8 L176.0 477.8 L177.0 477.8 L178.0 477.8 L179.0 477.8 L180.0 477.8 L181.0 477.8 L182.0 477.8 L183.0 477.8 L184.0 477.8 L185.0 477.8 L186.0 477.8 L187.0 477.8 L188.0 477.8 L189.0 477.8 L190.0 477.8 L191.0 477.8 L192.0 477.8 L193.0 477.8 L194.0 477.8 L195.0 477.8 L196.0 477.8 L197.0 477.8 L198.0 477.8 L199.0 477.8 L200.0 477.8 L201.0 477.8 L202.0 477.8 L203.0 477.8 L204.0 477.8 L205.0 477.8 L206.0 477.8 L207.0 477.8 L208.0 477.8 L209.0 477.8 L210.0 477.8 L211.0 477.8 L212.0 477.8 L213.0 477.8 L214.0 477.8 L215.0 477.8 L216.0 477.8 L217.0 477.8 L218.0 477.8 L219.0 477.8 L220.0 477.8 L221.0 477.8 L222.0 477.8 L223.0 477.8 L224.0 477.8 L225.0 477.8 L226.0 477.8 L227.0 477.8 L228.0 477.8 L229.0 477.8 L230.0 477.8 L231.0 477.8 L232.0 477.8 L233.0 477.8 L234.0 477.8 L235.0 477.8 L236.0 477.8 L237.0 477.8 L238.0 477.8 L239.0 477.8 L240.0 477.8 L241.0 477.8 L242.0 477.8 L243.0 477.8 L244.0 477.8 L245.0 477.8 L246.0 477.8 L247.0 477.8 L248.0 477.8 L249.0 477.8 L250.0 477.8 L251.0 477.8 L252.0 477.8 L253.0 477.8 L254.0 477.8 L255.0 477.8 L256.0 477.8 L257.0 477.8 L258.0 477.8 L259.0 477.8 L260.0 477.8 L261.0 477.8 L262.0 477.8 L263.0 477.8 L264.0 477.8 L265.0 477.8 L266.0 477.8 L267.0 477.8 L268.0 477.8 L269.0 477.8 L270.0 477.8 L271.0 477.8 L272.0 477.8 L273.0 477.8 L274.0 477.8 L275.0 477.8 L276.0 477.8 L277.0 477.8 L278.0 477.8 L279.0 477.8 L280.0 477.8 L281.0 477.8 L282.0 477.8 L283.0 477.8 L284.0 477.8 L285.0 477.8 L286.0 477.8 L287.0 477.8 L288.0 477.8 L289.0 477.8 L290.0 477.8 L291.0 477.8 L292.0 477.8 L293.0 477.8 L294.0 477.8 L295.0 477.8 L296.0 477.8 L297.0 477.8 L298.0 477.8 L299.0 477.8 L300.0 477.8 L301.0 477.8 L302.0 477.8 L303.0 477.8 L304.0 477.8 L305.0 477.8 L306.0 477.8 L307.0 477.8 L308.0 477.8 L309.0 477.8 L310.0 477.8 L311.0 477.8 L312.0 477.8 L313.0 477.8 L314.0 477.8 L315.0 477.8 L316.0 477.8 L317.0 477.8 L318.0 477.8 L319.0 477.8 L320.0 477.8 L321.0 477.8 L322.0 477.8 L323.0 477.8 L324.0 477.8 L325.0 477.8 L326.0 477.8 L327.0 477.8 L328.0 477.8 L329.0 477.8 L330.0 477.8 L331.0 477.8 L332.0 477.8 L333.0 477.8 L334.0 477.8 L335.0 477.8 L336.0 477.8 L337.0 477.8 L338.0 477.8 L339.0 477.8 L340.0 477.8 L341.0 477.8 L342.0 477.8 L343.0 477.8 L344.0 477.8 L345.0 477.8 L346.0 477.8 L347.0 477.8 L348.0 477.8 L349.0 477.8 L350.0 477.8 L351.0 477.8 L352.0 477.8 L353.0 477.8 L354.0 477.8 L355.0 477.8 L356.0 477.8 L357.0 477.8 L358.0 477.8 L359.0 477.8 L360.0 477.8 L361.0 477.8 L362.0 477.8 L363.0 477.8 L364.0 477.8 L365.0 477.8 L366.0 477.8 L367.0 477.8 L368.0 477.8 L369.0 477.8 L370.0 477.8 L371.0 477.8 L372.0 477.8 L373.0 477.8 L374.0 477.8 L375.0 477.8 L376.0 477.8 L377.0 477.8 L378.0 477.8 L379.0 477.8 L380.0 477.8 L381.0 477.8 L382.0 477.8 L383.0 477.8 L384.0 477.8 L385.0 477.8 L386.0 477.7 L387.0 477.7 L388.0 477.7 L389.0 477.7 L390.0 477.7 L391.0 477.6 L392.0 477.6 L393.0 477.6 L394.0 477.5 L395.0 477.5 L396.0 477.5 L397.0 477.5 L398.0 477.4 L399.0 477.4 L400.0 477.4 L401.0 477.3 L402.0 477.3 L403.0 477.2 L404.0 477.2 L405.0 477.1 L406.0 477.0 L407.0 476.9 L408.0 476.9 L409.0 476.8 L410.0 476.7 L411.0 476.6 L412.0 476.6 L413.0 476.5 L414.0 476.4 L415.0 476.4 L416.0 476.3 L417.0 476.3 L418.0 476.3 L419.0 476.3 L420.0 476.2 L421.0 476.2 L422.0 476.2 L423.0 476.2 L424.0 476.2 L425.0 476.2 L426.0 476.2 L427.0 476.2 L428.0 476.2 L429.0 476.2 L430.0 476.2 L431.0 476.2 L432.0 476.2 L433.0 476.2 L434.0 476.2 L435.0 476.2 L436.0 476.2 L437.0 476.2 L438.0 476.2 L439.0 476.2 L440.0 476.2 L441.0 476.2 L442.0 476.2 L443.0 476.2 L444.0 476.2 L445.0 476.2 L446.0 476.2 L447.0 476.2 L448.0 476.2 L449.0 476.2 L450.0 476.2 L451.0 476.2 L452.0 476.2 L453.0 476.2 L454.0 476.2 L455.0 476.2 L456.0 476.2 L457.0 476.2 L458.0 476.2 L459.0 476.2 L460.0 476.2 L461.0 476.2 L462.0 476.2 L463.0 476.2 L464.0 476.2 L465.0 476.2 L466.0 476.2 L467.0 476.2 L468.0 476.2 L469.0 476.1 L470.0 476.1 L471.0 476.0 L472.0 476.0 L473.0 475.9 L474.0 475.9 L475.0 475.8 L476.0 475.7 L477.0 475.6 L478.0 475.6 L479.0 475.5 L480.0 475.4 L481.0 475.3 L482.0 475.2 L483.0 475.1 L484.0 475.0 L485.0 474.9 L486.0 474.8 L487.0 474.7 L488.0 474.7 L489.0 474.6 L490.0 474.5 L491.0 474.3 L492.0 474.2 L493.0 474.1 L494.0 474.0 L495.0 473.8 L496.0 473.7 L497.0 473.5 L498.0 473.4 L499.0 473.2 L500.0 473.0 L501.0 472.9 L502.0 472.7 L503.0 472.5 L504.0 472.3 L505.0 472.2 L506.0 472.0 L507.0 471.8 L508.0 471.6 L509.0 471.4 L510.0 471.2 L511.0 471.0 L512.0 470.8 L513.0 470.5 L514.0 470.3 L515.0 470.1 L516.0 469.9 L517.0 469.7 L518.0 469.5 L519.0 469.2 L520.0 469.0 L521.0 468.8 L522.0 468.6 L523.0 468.4 L524.0 468.1 L525.0 467.9 L526.0 467.7 L527.0 467.5 L528.0 467.3 L529.0 467.0 L530.0 466.8 L531.0 466.6 L532.0 466.4 L533.0 466.2 L534.0 466.0 L535.0 465.8 L536.0 465.6 L537.0 465.4 L538.0 465.2 L539.0 465.0 L540.0 464.8 L541.0 464.5 L542.0 464.3 L543.0 464.1 L544.0 463.9 L545.0 463.7 L546.0 463.5 L547.0 463.3 L548.0 463.1 L549.0 462.9 L550.0 462.7 L551.0 462.5 L552.0 462.3 L553.0 462.0 L554.0 461.8 L555.0 461.6 L556.0 461.4 L557.0 461.2 L558.0 461.0 L559.0 460.7 L560.0 460.5 L561.0 460.3 L562.0 460.1 L563.0 459.8 L564.0 459.6 L565.0 459.4 L566.0 459.2 L567.0 458.9 L568.0 458.7 L569.0 458.5 L570.0 458.2 L571.0 458.0 L572.0 457.7 L573.0 457.5 L574.0 457.2 L575.0 457.0 L576.0 456.7 L577.0 456.5 L578.0 456.2 L579.0 456.0 L580.0 455.7 L581.0 455.4 L582.0 455.2 L583.0 454.9 L584.0 454.6 L585.0 454.3 L586.0 454.0 L587.0 453.7 L588.0 453.4 L589.0 453.1 L590.0 452.8 L591.0 452.4 L592.0 452.1 L593.0 451.7 L594.0 451.4 L595.0 451.1 L596.0 450.7 L597.0 450.4 L598.0 450.0 L599.0 449.7 L600.0 449.4 L601.0 449.0 L602.0 448.7 L603.0 448.4 L604.0 448.1 L605.0 447.8 L606.0 447.5 L607.0 447.2 L608.0 446.9 L609.0 446.7 L610.0 446.4 L611.0 446.1 L612.0 445.9 L613.0 445.6 L614.0 445.4 L615.0 445.1 L616.0 444.9 L617.0 444.7 L618.0 444.4 L619.0 444.2 L620.0 443.9 L621.0 443.7 L622.0 443.4 L623.0 443.1 L624.0 442.9 L625.0 442.6 L626.0 442.3 L627.0 442.0 L628.0 441.7 L629.0 441.4 L630.0 441.1 L631.0 440.8 L632.0 440.5 L633.0 440.1 L634.0 439.8 L635.0 439.4 L636.0 439.0 L637.0 438.6 L638.0 438.3 L639.0 437.9 L640.0 437.5 L641.0 437.0 L642.0 436.6 L643.0 436.2 L644.0 435.8 L645.0 435.4 L646.0 434.9 L647.0 434.5 L648.0 434.0 L649.0 433.6 L650.0 433.2 L651.0 432.7 L652.0 432.2 L653.0 431.8 L654.0 431.3 L655.0 430.9 L656.0 430.4 L657.0 429.9 L658.0 429.4 L659.0 428.9 L660.0 428.4 L661.0 427.9 L662.0 427.4 L663.0 426.9 L664.0 426.4 L665.0 425.9 L666.0 425.3 L667.0 424.8 L668.0 424.3 L669.0 423.7 L670.0 423.2 L671.0 422.6 L672.0 422.1 L673.0 421.5 L674.0 420.9 L675.0 420.4 L676.0 419.8 L677.0 419.2 L678.0 418.7 L679.0 418.1 L680.0 417.5 L681.0 416.9 L682.0 416.4 L683.0 415.8 L684.0 415.2 L685.0 414.6 L686.0 414.0 L687.0 413.4 L688.0 412.8 L689.0 412.2 L690.0 411.5 L691.0 410.9 L692.0 410.3 L693.0 409.7 L694.0 409.0 L695.0 408.4 L696.0 407.7 L697.0 407.1 L698.0 406.4 L699.0 405.8 L700.0 405.1 L701.0 404.4 L702.0 403.8 L703.0 403.1 L704.0 402.4 L705.0 401.7 L706.0 401.0 L707.0 400.3 L708.0 399.6 L709.0 398.9 L710.0 398.2 L711.0 397.4 L712.0 396.7 L713.0 396.0 L714.0 395.2 L715.0 394.5 L716.0 393.7 L717.0 393.0 L718.0 392.2 L719.0 391.4 L720.0 390.6 L721.0 389.9 L722.0 389.1 L723.0 388.3 L724.0 387.5 L725.0 386.7 L726.0 385.9 L727.0 385.0 L728.0 384.2 L729.0 383.4 L730.0 382.5 L731.0 381.7 L732.0 380.8 L733.0 379.9 L734.0 379.1 L735.0 378.2 L736.0 377.3 L737.0 376.4 L738.0 375.5 L739.0 374.6 L740.0 373.7 L741.0 372.8 L742.0 371.9 L743.0 371.0 L744.0 370.0 L745.0 369.1 L746.0 368.2 L747.0 367.2 L748.0 366.3 L749.0 365.3 L750.0 364.4 L751.0 363.4 L752.0 362.5 L753.0 361.5 L754.0 360.5 L755.0 359.5 L756.0 358.5 L757.0 357.5 L758.0 356.5 L759.0 355.5 L760.0 354.5 L761.0 353.4 L762.0 352.4 L763.0 351.4 L764.0 350.4 L765.0 349.3 L766.0 348.3 L767.0 347.3 L768.0 346.2 L769.0 345.2 L770.0 344.2 L771.0 343.1 L772.0 342.1 L773.0 341.1 L774.0 340.1 L775.0 339.0 L776.0 338.0 L777.0 336.9 L778.0 335.9 L779.0 334.9 L780.0 333.8 L781.0 332.8 L782.0 331.7 L783.0 330.7 L784.0 329.6 L785.0 328.6 L786.0 327.5 L787.0 326.5 L788.0 325.4 L789.0 324.4 L790.0 323.3 L791.0 322.2 L792.0 321.2 L793.0 320.1 L794.0 319.1 L795.0 318.1 L796.0 317.0 L797.0 316.0 L798.0 314.9 L799.0 313.9 L800.0 312.9 L801.0 311.8 L802.0 310.8 L803.0 309.8 L804.0 308.7 L805.0 307.7 L806.0 306.7 L807.0 305.7 L808.0 304.6 L809.0 303.6 L810.0 302.6 L811.0 301.5 L812.0 300.5 L813.0 299.4 L814.0 298.4 L815.0 297.3 L816.0 296.3 L817.0 295.2 L818.0 294.1 L819.0 293.1 L820.0 292.0 L821.0 290.9 L822.0 289.8 L823.0 288.7 L824.0 287.6 L825.0 286.5 L826.0 285.4 L827.0 284.3 L828.0 283.2 L829.0 282.0 L830.0 280.8 L831.0 279.6 L832.0 278.4 L833.0 277.2 L834.0 275.9 L835.0 274.6 L836.0 273.3 L837.0 272.0 L838.0 270.7 L839.0 269.4 L840.0 268.0 L841.0 266.6 L842.0 265.3 L843.0 263.9 L844.0 262.5 L845.0 261.0 L846.0 259.6 L847.0 258.2 L848.0 256.7 L849.0 255.2 L850.0 253.8 L851.0 252.3 L852.0 250.8 L853.0 249.3 L854.0 247.7 L855.0 246.2 L856.0 244.6 L857.0 243.0 L858.0 241.4 L859.0 239.8 L860.0 238.1 L861.0 236.4 L862.0 234.7 L863.0 233.0 L864.0 231.3 L865.0 229.6 L866.0 227.8 L867.0 226.1 L868.0 224.3 L869.0 222.5 L870.0 220.8 L871.0 219.0 L872.0 217.2 L873.0 215.4 L874.0 213.7 L875.0 211.9 L876.0 210.1 L877.0 208.4 L878.0 206.7 L879.0 204.9 L880.0 203.2 L881.0 201.5 L882.0 199.8 L883.0 198.0 L884.0 196.3 L885.0 194.6 L886.0 192.9 L887.0 191.2 L888.0 189.4 L889.0 187.7 L890.0 186.0 L891.0 184.2 L892.0 182.5 L893.0 180.7 L894.0 179.0 L895.0 177.2 L896.0 175.4 L897.0 173.6 L898.0 171.8 L899.0 169.9 L900.0 168.1 L901.0 166.2 L902.0 164.3 L903.0 162.4 L904.0 160.5 L905.0 158.5 L906.0 156.6 L907.0 154.6 L908.0 152.7 L909.0 150.7 L910.0 148.7 L911.0 146.7 L912.0 144.6 L913.0 142.6 L914.0 140.6 L915.0 138.5 L916.0 136.5 L917.0 134.4 L918.0 132.3 L919.0 130.3 L920.0 128.2 L921.0 126.1 L922.0 124.0 L923.0 121.9 L924.0 119.8 L925.0 117.6 L926.0 115.5 L927.0 113.4 L928.0 111.3 L929.0 109.2 L930.0 107.0 L931.0 104.9 L932.0 102.8 L933.0 100.6 L934.0 98.5 L935.0 96.3 L936.0 94.1 L937.0 92.0 L938.0 89.8 L939.0 87.6 L940.0 85.4 L941.0 83.2 L942.0 81.0 L943.0 78.8 L944.0 76.5 L945.0 74.3 L946.0 72.1 L947.0 69.8 L948.0 67.6 L949.0 65.3 L950.0 63.1 L951.0 60.8 L952.0 58.6 L953.0 56.3 L954.0 54.0 L955.0 51.8 L956.0 49.5 L957.0 47.2 L958.0 45.0 L959.0 42.7 L960.0 40.4 L961.0 38.1 L962.0 35.8 L963.0 33.5 L964.0 31.3 L965.0 29.0 L966.0 26.7 L967.0 24.4 L968.0 22.1 L969.0 19.7 L970.0 17.4 L971.0 15.1 L972.0 12.8 L973.0 10.5 L974.0 8.1 L975.0 5.8 L976.0 3.5 L977.0 1.1 L978.0 -1.2 L979.0 -3.5 L980.0 -5.9 L981.0 -8.3 L982.0 -10.6" fill="none" stroke="#7a6666" stroke-width="1.1" stroke-dasharray="4.5 1.8"/>
<path d="M-2.0 476.8 L-1.0 476.8 L0.0 476.8 L1.0 476.8 L2.0 476.7 L3.0 476.7 L4.0 476.7 L5.0 476.7 L6.0 476.7 L7.0 476.7 L8.0 476.7 L9.0 476.6 L10.0 476.6 L11.0 476.6 L12.0 476.6 L13.0 476.6 L14.0 476.6 L15.0 476.5 L16.0 476.5 L17.0 476.5 L18.0 476.5 L19.0 476.5 L20.0 476.4 L21.0 476.4 L22.0 476.4 L23.0 476.4 L24.0 476.4 L25.0 476.3 L26.0 476.3 L27.0 476.3 L28.0 476.3 L29.0 476.3 L30.0 476.2 L31.0 476.2 L32.0 476.2 L33.0 476.2 L34.0 476.1 L35.0 476.1 L36.0 476.1 L37.0 476.0 L38.0 476.0 L39.0 476.0 L40.0 476.0 L41.0 475.9 L42.0 475.9 L43.0 475.9 L44.0 475.8 L45.0 475.8 L46.0 475.8 L47.0 475.7 L48.0 475.7 L49.0 475.7 L50.0 475.6 L51.0 475.6 L52.0 475.5 L53.0 475.5 L54.0 475.5 L55.0 475.4 L56.0 475.4 L57.0 475.3 L58.0 475.3 L59.0 475.2 L60.0 475.2 L61.0 475.1 L62.0 475.1 L63.0 475.0 L64.0 475.0 L65.0 474.9 L66.0 474.9 L67.0 474.8 L68.0 474.7 L69.0 474.7 L70.0 474.6 L71.0 474.6 L72.0 474.5 L73.0 474.4 L74.0 474.4 L75.0 474.3 L76.0 474.2 L77.0 474.1 L78.0 474.1 L79.0 474.0 L80.0 473.9 L81.0 473.8 L82.0 473.7 L83.0 473.6 L84.0 473.6 L85.0 473.5 L86.0 473.4 L87.0 473.3 L88.0 473.2 L89.0 473.1 L90.0 473.0 L91.0 472.9 L92.0 472.8 L93.0 472.6 L94.0 472.5 L95.0 472.4 L96.0 472.3 L97.0 472.2 L98.0 472.1 L99.0 471.9 L100.0 471.8 L101.0 471.7 L102.0 471.5 L103.0 471.4 L104.0 471.3 L105.0 471.1 L106.0 471.0 L107.0 470.8 L108.0 470.7 L109.0 470.5 L110.0 470.4 L111.0 470.2 L112.0 470.0 L113.0 469.9 L114.0 469.7 L115.0 469.5 L116.0 469.4 L117.0 469.2 L118.0 469.0 L119.0 468.8 L120.0 468.6 L121.0 468.4 L122.0 468.2 L123.0 468.1 L124.0 467.9 L125.0 467.7 L126.0 467.4 L127.0 467.2 L128.0 467.0 L129.0 466.8 L130.0 466.6 L131.0 466.4 L132.0 466.2 L133.0 465.9 L134.0 465.7 L135.0 465.5 L136.0 465.2 L137.0 465.0 L138.0 464.7 L139.0 464.5 L140.0 464.3 L141.0 464.0 L142.0 463.7 L143.0 463.5 L144.0 463.2 L145.0 463.0 L146.0 462.7 L147.0 462.4 L148.0 462.1 L149.0 461.9 L150.0 461.6 L151.0 461.3 L152.0 461.0 L153.0 460.7 L154.0 460.4 L155.0 460.1 L156.0 459.8 L157.0 459.5 L158.0 459.1 L159.0 458.8 L160.0 458.5 L161.0 458.1 L162.0 457.8 L163.0 457.4 L164.0 457.1 L165.0 456.7 L166.0 456.4 L167.0 456.0 L168.0 455.6 L169.0 455.2 L170.0 454.8 L171.0 454.4 L172.0 454.0 L173.0 453.6 L174.0 453.1 L175.0 452.7 L176.0 452.3 L177.0 451.8 L178.0 451.3 L179.0 450.8 L180.0 450.4 L181.0 449.9 L182.0 449.3 L183.0 448.8 L184.0 448.3 L185.0 447.7 L186.0 447.1 L187.0 446.6 L188.0 446.0 L189.0 445.4 L190.0 444.7 L191.0 444.1 L192.0 443.4 L193.0 442.7 L194.0 442.1 L195.0 441.3 L196.0 440.6 L197.0 439.8 L198.0 439.1 L199.0 438.3 L200.0 437.5 L201.0 436.6 L202.0 435.7 L203.0 434.9 L204.0 433.9 L205.0 433.0 L206.0 432.0 L207.0 431.0 L208.0 430.0 L209.0 428.9 L210.0 427.8 L211.0 426.7 L212.0 425.6 L213.0 424.4 L214.0 423.1 L215.0 421.9 L216.0 420.6 L217.0 419.2 L218.0 417.8 L219.0 416.4 L220.0 414.9 L221.0 413.4 L222.0 411.9 L223.0 410.2 L224.0 408.6 L225.0 406.8 L226.0 405.1 L227.0 403.2 L228.0 401.3 L229.0 399.4 L230.0 397.4 L231.0 395.3 L232.0 393.1 L233.0 390.9 L234.0 388.6 L235.0 386.2 L236.0 383.7 L237.0 381.2 L238.0 378.5 L239.0 375.8 L240.0 373.0 L241.0 370.0 L242.0 367.0 L243.0 363.9 L244.0 360.6 L245.0 357.3 L246.0 353.8 L247.0 350.2 L248.0 346.4 L249.0 342.5 L250.0 338.5 L251.0 334.4 L252.0 330.1 L253.0 325.6 L254.0 320.9 L255.0 316.2 L256.0 311.2 L257.0 306.0 L258.0 300.7 L259.0 295.2 L260.0 289.5 L261.0 283.6 L262.0 277.5 L263.0 271.3 L264.0 264.8 L265.0 258.2 L266.0 251.4 L267.0 244.4 L268.0 237.2 L269.0 229.9 L270.0 222.5 L271.0 215.0 L272.0 207.4 L273.0 199.7 L274.0 192.1 L275.0 184.6 L276.0 177.1 L277.0 169.8 L278.0 162.7 L279.0 156.0 L280.0 149.6 L281.0 143.7 L282.0 138.3 L283.0 133.6 L284.0 129.5 L285.0 126.2 L286.0 123.8 L287.0 122.2 L288.0 121.4 L289.0 121.7 L290.0 123.1 L291.0 125.6 L292.0 129.1 L293.0 133.7 L294.0 139.1 L295.0 145.3 L296.0 152.1 L297.0 159.5 L298.0 167.3 L299.0 175.5 L300.0 183.8 L301.0 192.4 L302.0 200.9 L303.0 209.5 L304.0 218.0 L305.0 226.4 L306.0 234.7 L307.0 242.8 L308.0 250.7 L309.0 258.3 L310.0 265.8 L311.0 273.0 L312.0 300.5 L313.0 300.5 L314.0 300.5 L315.0 299.3 L316.0 305.3 L317.0 311.1 L318.0 316.7 L319.0 322.0 L320.0 327.1 L321.0 332.0 L322.0 336.8 L323.0 341.3 L324.0 345.7 L325.0 349.9 L326.0 353.9 L327.0 357.8 L328.0 361.5 L329.0 365.1 L330.0 368.6 L331.0 371.9 L332.0 375.1 L333.0 378.1 L334.0 381.1 L335.0 383.9 L336.0 386.7 L337.0 389.3 L338.0 391.9 L339.0 394.3 L340.0 396.7 L341.0 399.0 L342.0 401.2 L343.0 403.3 L344.0 405.4 L345.0 407.3 L346.0 409.3 L347.0 411.1 L348.0 412.9 L349.0 414.6 L350.0 416.3 L351.0 417.9 L352.0 419.5 L353.0 421.0 L354.0 422.5 L355.0 423.9 L356.0 425.3 L357.0 426.6 L358.0 427.9 L359.0 429.1 L360.0 430.1 L361.0 431.0 L362.0 431.7 L363.0 432.3 L364.0 432.7 L365.0 433.1 L366.0 433.7 L367.0 434.5 L368.0 435.6 L369.0 437.0 L370.0 438.6 L371.0 440.1 L372.0 441.5 L373.0 442.8 L374.0 443.9 L375.0 444.8 L376.0 445.7 L377.0 446.4 L378.0 447.2 L379.0 447.9 L380.0 448.6 L381.0 449.2 L382.0 449.9 L383.0 450.5 L384.0 451.1 L385.0 451.7 L386.0 452.2 L387.0 452.8 L388.0 453.3 L389.0 453.8 L390.0 454.3 L391.0 454.8 L392.0 455.3 L393.0 455.8 L394.0 456.2 L395.0 456.6 L396.0 457.1 L397.0 457.5 L398.0 457.9 L399.0 458.3 L400.0 458.6 L401.0 459.0 L402.0 459.3 L403.0 459.7 L404.0 460.0 L405.0 460.3 L406.0 460.6 L407.0 460.8 L408.0 461.1 L409.0 461.3 L410.0 461.6 L411.0 461.8 L412.0 462.1 L413.0 462.3 L414.0 462.5 L415.0 462.8 L416.0 463.0 L417.0 463.2 L418.0 463.5 L419.0 463.7 L420.0 464.0 L421.0 464.2 L422.0 464.4 L423.0 464.7 L424.0 464.9 L425.0 465.1 L426.0 465.4 L427.0 465.6 L428.0 465.8 L429.0 466.0 L430.0 466.2 L431.0 466.4 L432.0 466.6 L433.0 466.8 L434.0 467.0 L435.0 467.2 L436.0 467.3 L437.0 467.5 L438.0 467.7 L439.0 467.9 L440.0 468.0 L441.0 468.2 L442.0 468.3 L443.0 468.5 L444.0 468.6 L445.0 468.8 L446.0 468.9 L447.0 469.1 L448.0 469.2 L449.0 469.3 L450.0 469.5 L451.0 469.6 L452.0 469.7 L453.0 469.8 L454.0 470.0 L455.0 470.1 L456.0 470.2 L457.0 470.3 L458.0 470.4 L459.0 470.5 L460.0 470.6 L461.0 470.7 L462.0 470.8 L463.0 470.9 L464.0 471.0 L465.0 471.1 L466.0 471.2 L467.0 471.3 L468.0 471.3 L469.0 471.4 L470.0 471.4 L471.0 471.5 L472.0 471.5 L473.0 471.5 L474.0 471.5 L475.0 471.5 L476.0 471.5 L477.0 471.5 L478.0 471.5 L479.0 471.5 L480.0 471.5 L481.0 471.5 L482.0 471.5 L483.0 471.4 L484.0 471.4 L485.0 471.4 L486.0 471.3 L487.0 471.3 L488.0 471.3 L489.0 471.2 L490.0 471.2 L491.0 471.1 L492.0 471.1 L493.0 471.0 L494.0 470.9 L495.0 470.8 L496.0 470.7 L497.0 470.6 L498.0 470.5 L499.0 470.4 L500.0 470.3 L501.0 470.2 L502.0 470.1 L503.0 469.9 L504.0 469.8 L505.0 469.6 L506.0 469.5 L507.0 469.3 L508.0 469.2 L509.0 469.0 L510.0 468.8 L511.0 468.7 L512.0 468.5 L513.0 468.3 L514.0 468.2 L515.0 468.0 L516.0 467.8 L517.0 467.6 L518.0 467.4 L519.0 467.2 L520.0 467.0 L521.0 466.9 L522.0 466.7 L523.0 466.5 L524.0 466.3 L525.0 466.1 L526.0 465.9 L527.0 465.7 L528.0 465.5 L529.0 465.3 L530.0 465.1 L531.0 464.9 L532.0 464.8 L533.0 464.6 L534.0 464.4 L535.0 464.2 L536.0 464.0 L537.0 463.8 L538.0 463.7 L539.0 463.5 L540.0 463.3 L541.0 463.1 L542.0 462.9 L543.0 462.7 L544.0 462.5 L545.0 462.4 L546.0 462.2 L547.0 462.0 L548.0 461.8 L549.0 461.6 L550.0 461.4 L551.0 461.2 L552.0 461.0 L553.0 460.8 L554.0 460.6 L555.0 460.4 L556.0 460.2 L557.0 460.0 L558.0 459.8 L559.0 459.6 L560.0 459.4 L561.0 459.2 L562.0 459.0 L563.0 458.8 L564.0 458.6 L565.0 458.3 L566.0 458.1 L567.0 457.9 L568.0 457.7 L569.0 457.5 L570.0 457.2 L571.0 457.0 L572.0 456.8 L573.0 456.5 L574.0 456.3 L575.0 456.1 L576.0 455.8 L577.0 455.6 L578.0 455.3 L579.0 455.1 L580.0 454.8 L581.0 454.6 L582.0 454.3 L583.0 454.0 L584.0 453.8 L585.0 453.5 L586.0 453.2 L587.0 452.9 L588.0 452.6 L589.0 452.3 L590.0 452.0 L591.0 451.6 L592.0 451.3 L593.0 451.0 L594.0 450.6 L595.0 450.3 L596.0 449.9 L597.0 449.6 L598.0 449.2 L599.0 448.8 L600.0 448.4 L601.0 447.9 L602.0 447.4 L603.0 446.9 L604.0 446.4 L605.0 445.9 L606.0 445.4 L607.0 445.0 L608.0 444.7 L609.0 444.4 L610.0 444.3 L611.0 444.2 L612.0 444.2 L613.0 444.2 L614.0 444.1 L615.0 444.1 L616.0 444.0 L617.0 443.8 L618.0 443.7 L619.0 443.5 L620.0 443.3 L621.0 443.0 L622.0 442.8 L623.0 442.5 L624.0 442.3 L625.0 442.0 L626.0 441.7 L627.0 441.4 L628.0 441.2 L629.0 440.9 L630.0 440.5 L631.0 440.2 L632.0 439.9 L633.0 439.5 L634.0 439.2 L635.0 438.8 L636.0 438.5 L637.0 438.1 L638.0 437.7 L639.0 437.3 L640.0 436.9 L641.0 436.5 L642.0 436.1 L643.0 435.7 L644.0 435.3 L645.0 434.8 L646.0 434.4 L647.0 434.0 L648.0 433.5 L649.0 433.1 L650.0 432.6 L651.0 432.2 L652.0 431.7 L653.0 431.3 L654.0 430.8 L655.0 430.4 L656.0 429.9 L657.0 429.4 L658.0 428.9 L659.0 428.4 L660.0 427.9 L661.0 427.4 L662.0 426.9 L663.0 426.4 L664.0 425.9 L665.0 425.4 L666.0 424.8 L667.0 424.3 L668.0 423.8 L669.0 423.2 L670.0 422.7 L671.0 422.1 L672.0 421.6 L673.0 421.0 L674.0 420.5 L675.0 419.9 L676.0 419.3 L677.0 418.8 L678.0 418.2 L679.0 417.6 L680.0 417.1 L681.0 416.5 L682.0 415.9 L683.0 415.3 L684.0 414.7 L685.0 414.1 L686.0 413.5 L687.0 412.9 L688.0 412.3 L689.0 411.7 L690.0 411.1 L691.0 410.5 L692.0 409.8 L693.0 409.2 L694.0 408.6 L695.0 407.9 L696.0 407.3 L697.0 406.6 L698.0 406.0 L699.0 405.3 L700.0 404.7 L701.0 404.0 L702.0 403.3 L703.0 402.6 L704.0 402.0 L705.0 401.3 L706.0 400.6 L707.0 399.9 L708.0 399.2 L709.0 398.4 L710.0 397.7 L711.0 397.0 L712.0 396.3 L713.0 395.5 L714.0 394.8 L715.0 394.0 L716.0 393.3 L717.0 392.5 L718.0 391.8 L719.0 391.0 L720.0 390.2 L721.0 389.4 L722.0 388.6 L723.0 387.8 L724.0 387.0 L725.0 386.2 L726.0 385.4 L727.0 384.6 L728.0 383.8 L729.0 382.9 L730.0 382.0 L731.0 381.2 L732.0 380.3 L733.0 379.3 L734.0 378.4 L735.0 377.4 L736.0 376.3 L737.0 375.3 L738.0 374.2 L739.0 373.1 L740.0 372.0 L741.0 370.9 L742.0 369.8 L743.0 368.8 L744.0 367.7 L745.0 366.8 L746.0 365.9 L747.0 365.0 L748.0 364.2 L749.0 363.4 L750.0 362.7 L751.0 361.9 L752.0 361.2 L753.0 360.4 L754.0 359.5 L755.0 358.7 L756.0 357.8 L757.0 356.9 L758.0 355.9 L759.0 355.0 L760.0 354.0 L761.0 353.0 L762.0 352.0 L763.0 351.0 L764.0 349.9 L765.0 348.9 L766.0 347.9 L767.0 346.9 L768.0 345.8 L769.0 344.8 L770.0 343.8 L771.0 342.7 L772.0 341.7 L773.0 340.7 L774.0 339.6 L775.0 338.6 L776.0 337.6 L777.0 336.5 L778.0 335.5 L779.0 334.4 L780.0 333.4 L781.0 332.4 L782.0 331.3 L783.0 330.3 L784.0 329.2 L785.0 328.2 L786.0 327.1 L787.0 326.0 L788.0 325.0 L789.0 323.9 L790.0 322.9 L791.0 321.8 L792.0 320.8 L793.0 319.7 L794.0 318.7 L795.0 317.6 L796.0 316.6 L797.0 315.6 L798.0 314.5 L799.0 313.5 L800.0 312.5 L801.0 311.4 L802.0 310.4 L803.0 309.4 L804.0 308.3 L805.0 307.3 L806.0 306.3 L807.0 305.3 L808.0 304.2 L809.0 303.2 L810.0 302.2 L811.0 301.1 L812.0 300.1 L813.0 299.0 L814.0 298.0 L815.0 296.9 L816.0 295.9 L817.0 294.8 L818.0 293.7 L819.0 292.7 L820.0 291.6 L821.0 290.5 L822.0 289.4 L823.0 288.3 L824.0 287.2 L825.0 286.1 L826.0 285.0 L827.0 283.9 L828.0 282.8 L829.0 281.6 L830.0 280.4 L831.0 279.2 L832.0 278.0 L833.0 276.8 L834.0 275.5 L835.0 274.2 L836.0 272.9 L837.0 271.6 L838.0 270.3 L839.0 269.0 L840.0 267.6 L841.0 266.2 L842.0 264.9 L843.0 263.5 L844.0 262.1 L845.0 260.6 L846.0 259.2 L847.0 257.8 L848.0 256.3 L849.0 254.8 L850.0 253.4 L851.0 251.9 L852.0 250.4 L853.0 248.8 L854.0 247.3 L855.0 245.8 L856.0 244.2 L857.0 242.6 L858.0 241.0 L859.0 239.4 L860.0 237.7 L861.0 236.0 L862.0 234.3 L863.0 232.6 L864.0 230.9 L865.0 229.2 L866.0 227.4 L867.0 225.7 L868.0 223.9 L869.0 222.1 L870.0 220.4 L871.0 218.6 L872.0 216.8 L873.0 215.0 L874.0 213.3 L875.0 211.5 L876.0 209.7 L877.0 208.0 L878.0 206.3 L879.0 204.5 L880.0 202.8 L881.0 201.1 L882.0 199.4 L883.0 197.6 L884.0 195.9 L885.0 194.2 L886.0 192.5 L887.0 190.8 L888.0 189.0 L889.0 187.3 L890.0 185.6 L891.0 183.8 L892.0 182.1 L893.0 180.3 L894.0 178.6 L895.0 176.8 L896.0 175.0 L897.0 173.2 L898.0 171.4 L899.0 169.5 L900.0 167.7 L901.0 165.8 L902.0 163.9 L903.0 162.0 L904.0 160.1 L905.0 158.1 L906.0 156.2 L907.0 154.2 L908.0 152.3 L909.0 150.3 L910.0 148.3 L911.0 146.3 L912.0 144.2 L913.0 142.2 L914.0 140.2 L915.0 138.1 L916.0 136.1 L917.0 134.0 L918.0 131.9 L919.0 129.9 L920.0 127.8 L921.0 125.7 L922.0 123.6 L923.0 121.5 L924.0 119.4 L925.0 117.2 L926.0 115.1 L927.0 113.0 L928.0 110.9 L929.0 108.8 L930.0 106.6 L931.0 104.5 L932.0 102.4 L933.0 100.2 L934.0 98.1 L935.0 95.9 L936.0 93.7 L937.0 91.6 L938.0 89.4 L939.0 87.2 L940.0 85.0 L941.0 82.8 L942.0 80.6 L943.0 78.4 L944.0 76.1 L945.0 73.9 L946.0 71.7 L947.0 69.4 L948.0 67.2 L949.0 64.9 L950.0 62.7 L951.0 60.4 L952.0 58.2 L953.0 55.9 L954.0 53.6 L955.0 51.4 L956.0 49.1 L957.0 46.8 L958.0 44.6 L959.0 42.3 L960.0 40.0 L961.0 37.7 L962.0 35.4 L963.0 33.1 L964.0 30.9 L965.0 28.6 L966.0 26.3 L967.0 24.0 L968.0 21.7 L969.0 19.3 L970.0 17.0 L971.0 14.7 L972.0 12.4 L973.0 10.1 L974.0 7.7 L975.0 5.4 L976.0 3.1 L977.0 0.7 L978.0 -1.6 L979.0 -3.9 L980.0 -6.3 L981.0 -8.7 L982.0 -11.0" fill="none" stroke="#3adf97" stroke-width="2.6" opacity=".22"/>
<path d="M-2.0 476.8 L-1.0 476.8 L0.0 476.8 L1.0 476.8 L2.0 476.7 L3.0 476.7 L4.0 476.7 L5.0 476.7 L6.0 476.7 L7.0 476.7 L8.0 476.7 L9.0 476.6 L10.0 476.6 L11.0 476.6 L12.0 476.6 L13.0 476.6 L14.0 476.6 L15.0 476.5 L16.0 476.5 L17.0 476.5 L18.0 476.5 L19.0 476.5 L20.0 476.4 L21.0 476.4 L22.0 476.4 L23.0 476.4 L24.0 476.4 L25.0 476.3 L26.0 476.3 L27.0 476.3 L28.0 476.3 L29.0 476.3 L30.0 476.2 L31.0 476.2 L32.0 476.2 L33.0 476.2 L34.0 476.1 L35.0 476.1 L36.0 476.1 L37.0 476.0 L38.0 476.0 L39.0 476.0 L40.0 476.0 L41.0 475.9 L42.0 475.9 L43.0 475.9 L44.0 475.8 L45.0 475.8 L46.0 475.8 L47.0 475.7 L48.0 475.7 L49.0 475.7 L50.0 475.6 L51.0 475.6 L52.0 475.5 L53.0 475.5 L54.0 475.5 L55.0 475.4 L56.0 475.4 L57.0 475.3 L58.0 475.3 L59.0 475.2 L60.0 475.2 L61.0 475.1 L62.0 475.1 L63.0 475.0 L64.0 475.0 L65.0 474.9 L66.0 474.9 L67.0 474.8 L68.0 474.7 L69.0 474.7 L70.0 474.6 L71.0 474.6 L72.0 474.5 L73.0 474.4 L74.0 474.4 L75.0 474.3 L76.0 474.2 L77.0 474.1 L78.0 474.1 L79.0 474.0 L80.0 473.9 L81.0 473.8 L82.0 473.7 L83.0 473.6 L84.0 473.6 L85.0 473.5 L86.0 473.4 L87.0 473.3 L88.0 473.2 L89.0 473.1 L90.0 473.0 L91.0 472.9 L92.0 472.8 L93.0 472.6 L94.0 472.5 L95.0 472.4 L96.0 472.3 L97.0 472.2 L98.0 472.1 L99.0 471.9 L100.0 471.8 L101.0 471.7 L102.0 471.5 L103.0 471.4 L104.0 471.3 L105.0 471.1 L106.0 471.0 L107.0 470.8 L108.0 470.7 L109.0 470.5 L110.0 470.4 L111.0 470.2 L112.0 470.0 L113.0 469.9 L114.0 469.7 L115.0 469.5 L116.0 469.4 L117.0 469.2 L118.0 469.0 L119.0 468.8 L120.0 468.6 L121.0 468.4 L122.0 468.2 L123.0 468.1 L124.0 467.9 L125.0 467.7 L126.0 467.4 L127.0 467.2 L128.0 467.0 L129.0 466.8 L130.0 466.6 L131.0 466.4 L132.0 466.2 L133.0 465.9 L134.0 465.7 L135.0 465.5 L136.0 465.2 L137.0 465.0 L138.0 464.7 L139.0 464.5 L140.0 464.3 L141.0 464.0 L142.0 463.7 L143.0 463.5 L144.0 463.2 L145.0 463.0 L146.0 462.7 L147.0 462.4 L148.0 462.1 L149.0 461.9 L150.0 461.6 L151.0 461.3 L152.0 461.0 L153.0 460.7 L154.0 460.4 L155.0 460.1 L156.0 459.8 L157.0 459.5 L158.0 459.1 L159.0 458.8 L160.0 458.5 L161.0 458.1 L162.0 457.8 L163.0 457.4 L164.0 457.1 L165.0 456.7 L166.0 456.4 L167.0 456.0 L168.0 455.6 L169.0 455.2 L170.0 454.8 L171.0 454.4 L172.0 454.0 L173.0 453.6 L174.0 453.1 L175.0 452.7 L176.0 452.3 L177.0 451.8 L178.0 451.3 L179.0 450.8 L180.0 450.4 L181.0 449.9 L182.0 449.3 L183.0 448.8 L184.0 448.3 L185.0 447.7 L186.0 447.1 L187.0 446.6 L188.0 446.0 L189.0 445.4 L190.0 444.7 L191.0 444.1 L192.0 443.4 L193.0 442.7 L194.0 442.1 L195.0 441.3 L196.0 440.6 L197.0 439.8 L198.0 439.1 L199.0 438.3 L200.0 437.5 L201.0 436.6 L202.0 435.7 L203.0 434.9 L204.0 433.9 L205.0 433.0 L206.0 432.0 L207.0 431.0 L208.0 430.0 L209.0 428.9 L210.0 427.8 L211.0 426.7 L212.0 425.6 L213.0 424.4 L214.0 423.1 L215.0 421.9 L216.0 420.6 L217.0 419.2 L218.0 417.8 L219.0 416.4 L220.0 414.9 L221.0 413.4 L222.0 411.9 L223.0 410.2 L224.0 408.6 L225.0 406.8 L226.0 405.1 L227.0 403.2 L228.0 401.3 L229.0 399.4 L230.0 397.4 L231.0 395.3 L232.0 393.1 L233.0 390.9 L234.0 388.6 L235.0 386.2 L236.0 383.7 L237.0 381.2 L238.0 378.5 L239.0 375.8 L240.0 373.0 L241.0 370.0 L242.0 367.0 L243.0 363.9 L244.0 360.6 L245.0 357.3 L246.0 353.8 L247.0 350.2 L248.0 346.4 L249.0 342.5 L250.0 338.5 L251.0 334.4 L252.0 330.1 L253.0 325.6 L254.0 320.9 L255.0 316.2 L256.0 311.2 L257.0 306.0 L258.0 300.7 L259.0 295.2 L260.0 289.5 L261.0 283.6 L262.0 277.5 L263.0 271.3 L264.0 264.8 L265.0 258.2 L266.0 251.4 L267.0 244.4 L268.0 237.2 L269.0 229.9 L270.0 222.5 L271.0 215.0 L272.0 207.4 L273.0 199.7 L274.0 192.1 L275.0 184.6 L276.0 177.1 L277.0 169.8 L278.0 162.7 L279.0 156.0 L280.0 149.6 L281.0 143.7 L282.0 138.3 L283.0 133.6 L284.0 129.5 L285.0 126.2 L286.0 123.8 L287.0 122.2 L288.0 121.4 L289.0 121.7 L290.0 123.1 L291.0 125.6 L292.0 129.1 L293.0 133.7 L294.0 139.1 L295.0 145.3 L296.0 152.1 L297.0 159.5 L298.0 167.3 L299.0 175.5 L300.0 183.8 L301.0 192.4 L302.0 200.9 L303.0 209.5 L304.0 218.0 L305.0 226.4 L306.0 234.7 L307.0 242.8 L308.0 250.7 L309.0 258.3 L310.0 265.8 L311.0 273.0 L312.0 300.5 L313.0 300.5 L314.0 300.5 L315.0 299.3 L316.0 305.3 L317.0 311.1 L318.0 316.7 L319.0 322.0 L320.0 327.1 L321.0 332.0 L322.0 336.8 L323.0 341.3 L324.0 345.7 L325.0 349.9 L326.0 353.9 L327.0 357.8 L328.0 361.5 L329.0 365.1 L330.0 368.6 L331.0 371.9 L332.0 375.1 L333.0 378.1 L334.0 381.1 L335.0 383.9 L336.0 386.7 L337.0 389.3 L338.0 391.9 L339.0 394.3 L340.0 396.7 L341.0 399.0 L342.0 401.2 L343.0 403.3 L344.0 405.4 L345.0 407.3 L346.0 409.3 L347.0 411.1 L348.0 412.9 L349.0 414.6 L350.0 416.3 L351.0 417.9 L352.0 419.5 L353.0 421.0 L354.0 422.5 L355.0 423.9 L356.0 425.3 L357.0 426.6 L358.0 427.9 L359.0 429.1 L360.0 430.1 L361.0 431.0 L362.0 431.7 L363.0 432.3 L364.0 432.7 L365.0 433.1 L366.0 433.7 L367.0 434.5 L368.0 435.6 L369.0 437.0 L370.0 438.6 L371.0 440.1 L372.0 441.5 L373.0 442.8 L374.0 443.9 L375.0 444.8 L376.0 445.7 L377.0 446.4 L378.0 447.2 L379.0 447.9 L380.0 448.6 L381.0 449.2 L382.0 449.9 L383.0 450.5 L384.0 451.1 L385.0 451.7 L386.0 452.2 L387.0 452.8 L388.0 453.3 L389.0 453.8 L390.0 454.3 L391.0 454.8 L392.0 455.3 L393.0 455.8 L394.0 456.2 L395.0 456.6 L396.0 457.1 L397.0 457.5 L398.0 457.9 L399.0 458.3 L400.0 458.6 L401.0 459.0 L402.0 459.3 L403.0 459.7 L404.0 460.0 L405.0 460.3 L406.0 460.6 L407.0 460.8 L408.0 461.1 L409.0 461.3 L410.0 461.6 L411.0 461.8 L412.0 462.1 L413.0 462.3 L414.0 462.5 L415.0 462.8 L416.0 463.0 L417.0 463.2 L418.0 463.5 L419.0 463.7 L420.0 464.0 L421.0 464.2 L422.0 464.4 L423.0 464.7 L424.0 464.9 L425.0 465.1 L426.0 465.4 L427.0 465.6 L428.0 465.8 L429.0 466.0 L430.0 466.2 L431.0 466.4 L432.0 466.6 L433.0 466.8 L434.0 467.0 L435.0 467.2 L436.0 467.3 L437.0 467.5 L438.0 467.7 L439.0 467.9 L440.0 468.0 L441.0 468.2 L442.0 468.3 L443.0 468.5 L444.0 468.6 L445.0 468.8 L446.0 468.9 L447.0 469.1 L448.0 469.2 L449.0 469.3 L450.0 469.5 L451.0 469.6 L452.0 469.7 L453.0 469.8 L454.0 470.0 L455.0 470.1 L456.0 470.2 L457.0 470.3 L458.0 470.4 L459.0 470.5 L460.0 470.6 L461.0 470.7 L462.0 470.8 L463.0 470.9 L464.0 471.0 L465.0 471.1 L466.0 471.2 L467.0 471.3 L468.0 471.3 L469.0 471.4 L470.0 471.4 L471.0 471.5 L472.0 471.5 L473.0 471.5 L474.0 471.5 L475.0 471.5 L476.0 471.5 L477.0 471.5 L478.0 471.5 L479.0 471.5 L480.0 471.5 L481.0 471.5 L482.0 471.5 L483.0 471.4 L484.0 471.4 L485.0 471.4 L486.0 471.3 L487.0 471.3 L488.0 471.3 L489.0 471.2 L490.0 471.2 L491.0 471.1 L492.0 471.1 L493.0 471.0 L494.0 470.9 L495.0 470.8 L496.0 470.7 L497.0 470.6 L498.0 470.5 L499.0 470.4 L500.0 470.3 L501.0 470.2 L502.0 470.1 L503.0 469.9 L504.0 469.8 L505.0 469.6 L506.0 469.5 L507.0 469.3 L508.0 469.2 L509.0 469.0 L510.0 468.8 L511.0 468.7 L512.0 468.5 L513.0 468.3 L514.0 468.2 L515.0 468.0 L516.0 467.8 L517.0 467.6 L518.0 467.4 L519.0 467.2 L520.0 467.0 L521.0 466.9 L522.0 466.7 L523.0 466.5 L524.0 466.3 L525.0 466.1 L526.0 465.9 L527.0 465.7 L528.0 465.5 L529.0 465.3 L530.0 465.1 L531.0 464.9 L532.0 464.8 L533.0 464.6 L534.0 464.4 L535.0 464.2 L536.0 464.0 L537.0 463.8 L538.0 463.7 L539.0 463.5 L540.0 463.3 L541.0 463.1 L542.0 462.9 L543.0 462.7 L544.0 462.5 L545.0 462.4 L546.0 462.2 L547.0 462.0 L548.0 461.8 L549.0 461.6 L550.0 461.4 L551.0 461.2 L552.0 461.0 L553.0 460.8 L554.0 460.6 L555.0 460.4 L556.0 460.2 L557.0 460.0 L558.0 459.8 L559.0 459.6 L560.0 459.4 L561.0 459.2 L562.0 459.0 L563.0 458.8 L564.0 458.6 L565.0 458.3 L566.0 458.1 L567.0 457.9 L568.0 457.7 L569.0 457.5 L570.0 457.2 L571.0 457.0 L572.0 456.8 L573.0 456.5 L574.0 456.3 L575.0 456.1 L576.0 455.8 L577.0 455.6 L578.0 455.3 L579.0 455.1 L580.0 454.8 L581.0 454.6 L582.0 454.3 L583.0 454.0 L584.0 453.8 L585.0 453.5 L586.0 453.2 L587.0 452.9 L588.0 452.6 L589.0 452.3 L590.0 452.0 L591.0 451.6 L592.0 451.3 L593.0 451.0 L594.0 450.6 L595.0 450.3 L596.0 449.9 L597.0 449.6 L598.0 449.2 L599.0 448.8 L600.0 448.4 L601.0 447.9 L602.0 447.4 L603.0 446.9 L604.0 446.4 L605.0 445.9 L606.0 445.4 L607.0 445.0 L608.0 444.7 L609.0 444.4 L610.0 444.3 L611.0 444.2 L612.0 444.2 L613.0 444.2 L614.0 444.1 L615.0 444.1 L616.0 444.0 L617.0 443.8 L618.0 443.7 L619.0 443.5 L620.0 443.3 L621.0 443.0 L622.0 442.8 L623.0 442.5 L624.0 442.3 L625.0 442.0 L626.0 441.7 L627.0 441.4 L628.0 441.2 L629.0 440.9 L630.0 440.5 L631.0 440.2 L632.0 439.9 L633.0 439.5 L634.0 439.2 L635.0 438.8 L636.0 438.5 L637.0 438.1 L638.0 437.7 L639.0 437.3 L640.0 436.9 L641.0 436.5 L642.0 436.1 L643.0 435.7 L644.0 435.3 L645.0 434.8 L646.0 434.4 L647.0 434.0 L648.0 433.5 L649.0 433.1 L650.0 432.6 L651.0 432.2 L652.0 431.7 L653.0 431.3 L654.0 430.8 L655.0 430.4 L656.0 429.9 L657.0 429.4 L658.0 428.9 L659.0 428.4 L660.0 427.9 L661.0 427.4 L662.0 426.9 L663.0 426.4 L664.0 425.9 L665.0 425.4 L666.0 424.8 L667.0 424.3 L668.0 423.8 L669.0 423.2 L670.0 422.7 L671.0 422.1 L672.0 421.6 L673.0 421.0 L674.0 420.5 L675.0 419.9 L676.0 419.3 L677.0 418.8 L678.0 418.2 L679.0 417.6 L680.0 417.1 L681.0 416.5 L682.0 415.9 L683.0 415.3 L684.0 414.7 L685.0 414.1 L686.0 413.5 L687.0 412.9 L688.0 412.3 L689.0 411.7 L690.0 411.1 L691.0 410.5 L692.0 409.8 L693.0 409.2 L694.0 408.6 L695.0 407.9 L696.0 407.3 L697.0 406.6 L698.0 406.0 L699.0 405.3 L700.0 404.7 L701.0 404.0 L702.0 403.3 L703.0 402.6 L704.0 402.0 L705.0 401.3 L706.0 400.6 L707.0 399.9 L708.0 399.2 L709.0 398.4 L710.0 397.7 L711.0 397.0 L712.0 396.3 L713.0 395.5 L714.0 394.8 L715.0 394.0 L716.0 393.3 L717.0 392.5 L718.0 391.8 L719.0 391.0 L720.0 390.2 L721.0 389.4 L722.0 388.6 L723.0 387.8 L724.0 387.0 L725.0 386.2 L726.0 385.4 L727.0 384.6 L728.0 383.8 L729.0 382.9 L730.0 382.0 L731.0 381.2 L732.0 380.3 L733.0 379.3 L734.0 378.4 L735.0 377.4 L736.0 376.3 L737.0 375.3 L738.0 374.2 L739.0 373.1 L740.0 372.0 L741.0 370.9 L742.0 369.8 L743.0 368.8 L744.0 367.7 L745.0 366.8 L746.0 365.9 L747.0 365.0 L748.0 364.2 L749.0 363.4 L750.0 362.7 L751.0 361.9 L752.0 361.2 L753.0 360.4 L754.0 359.5 L755.0 358.7 L756.0 357.8 L757.0 356.9 L758.0 355.9 L759.0 355.0 L760.0 354.0 L761.0 353.0 L762.0 352.0 L763.0 351.0 L764.0 349.9 L765.0 348.9 L766.0 347.9 L767.0 346.9 L768.0 345.8 L769.0 344.8 L770.0 343.8 L771.0 342.7 L772.0 341.7 L773.0 340.7 L774.0 339.6 L775.0 338.6 L776.0 337.6 L777.0 336.5 L778.0 335.5 L779.0 334.4 L780.0 333.4 L781.0 332.4 L782.0 331.3 L783.0 330.3 L784.0 329.2 L785.0 328.2 L786.0 327.1 L787.0 326.0 L788.0 325.0 L789.0 323.9 L790.0 322.9 L791.0 321.8 L792.0 320.8 L793.0 319.7 L794.0 318.7 L795.0 317.6 L796.0 316.6 L797.0 315.6 L798.0 314.5 L799.0 313.5 L800.0 312.5 L801.0 311.4 L802.0 310.4 L803.0 309.4 L804.0 308.3 L805.0 307.3 L806.0 306.3 L807.0 305.3 L808.0 304.2 L809.0 303.2 L810.0 302.2 L811.0 301.1 L812.0 300.1 L813.0 299.0 L814.0 298.0 L815.0 296.9 L816.0 295.9 L817.0 294.8 L818.0 293.7 L819.0 292.7 L820.0 291.6 L821.0 290.5 L822.0 289.4 L823.0 288.3 L824.0 287.2 L825.0 286.1 L826.0 285.0 L827.0 283.9 L828.0 282.8 L829.0 281.6 L830.0 280.4 L831.0 279.2 L832.0 278.0 L833.0 276.8 L834.0 275.5 L835.0 274.2 L836.0 272.9 L837.0 271.6 L838.0 270.3 L839.0 269.0 L840.0 267.6 L841.0 266.2 L842.0 264.9 L843.0 263.5 L844.0 262.1 L845.0 260.6 L846.0 259.2 L847.0 257.8 L848.0 256.3 L849.0 254.8 L850.0 253.4 L851.0 251.9 L852.0 250.4 L853.0 248.8 L854.0 247.3 L855.0 245.8 L856.0 244.2 L857.0 242.6 L858.0 241.0 L859.0 239.4 L860.0 237.7 L861.0 236.0 L862.0 234.3 L863.0 232.6 L864.0 230.9 L865.0 229.2 L866.0 227.4 L867.0 225.7 L868.0 223.9 L869.0 222.1 L870.0 220.4 L871.0 218.6 L872.0 216.8 L873.0 215.0 L874.0 213.3 L875.0 211.5 L876.0 209.7 L877.0 208.0 L878.0 206.3 L879.0 204.5 L880.0 202.8 L881.0 201.1 L882.0 199.4 L883.0 197.6 L884.0 195.9 L885.0 194.2 L886.0 192.5 L887.0 190.8 L888.0 189.0 L889.0 187.3 L890.0 185.6 L891.0 183.8 L892.0 182.1 L893.0 180.3 L894.0 178.6 L895.0 176.8 L896.0 175.0 L897.0 173.2 L898.0 171.4 L899.0 169.5 L900.0 167.7 L901.0 165.8 L902.0 163.9 L903.0 162.0 L904.0 160.1 L905.0 158.1 L906.0 156.2 L907.0 154.2 L908.0 152.3 L909.0 150.3 L910.0 148.3 L911.0 146.3 L912.0 144.2 L913.0 142.2 L914.0 140.2 L915.0 138.1 L916.0 136.1 L917.0 134.0 L918.0 131.9 L919.0 129.9 L920.0 127.8 L921.0 125.7 L922.0 123.6 L923.0 121.5 L924.0 119.4 L925.0 117.2 L926.0 115.1 L927.0 113.0 L928.0 110.9 L929.0 108.8 L930.0 106.6 L931.0 104.5 L932.0 102.4 L933.0 100.2 L934.0 98.1 L935.0 95.9 L936.0 93.7 L937.0 91.6 L938.0 89.4 L939.0 87.2 L940.0 85.0 L941.0 82.8 L942.0 80.6 L943.0 78.4 L944.0 76.1 L945.0 73.9 L946.0 71.7 L947.0 69.4 L948.0 67.2 L949.0 64.9 L950.0 62.7 L951.0 60.4 L952.0 58.2 L953.0 55.9 L954.0 53.6 L955.0 51.4 L956.0 49.1 L957.0 46.8 L958.0 44.6 L959.0 42.3 L960.0 40.0 L961.0 37.7 L962.0 35.4 L963.0 33.1 L964.0 30.9 L965.0 28.6 L966.0 26.3 L967.0 24.0 L968.0 21.7 L969.0 19.3 L970.0 17.0 L971.0 14.7 L972.0 12.4 L973.0 10.1 L974.0 7.7 L975.0 5.4 L976.0 3.1 L977.0 0.7 L978.0 -1.6 L979.0 -3.9 L980.0 -6.3 L981.0 -8.7 L982.0 -11.0" fill="none" stroke="#46735f" stroke-width="1.3"/>
<path d="M-2.0 568.9 L-1.0 568.8 L0.0 568.8 L1.0 568.7 L2.0 568.6 L3.0 568.5 L4.0 568.4 L5.0 568.3 L6.0 568.2 L7.0 568.1 L8.0 568.0 L9.0 567.9 L10.0 567.8 L11.0 567.7 L12.0 567.6 L13.0 567.5 L14.0 567.4 L15.0 567.3 L16.0 567.2 L17.0 567.1 L18.0 567.0 L19.0 566.9 L20.0 566.7 L21.0 566.6 L22.0 566.5 L23.0 566.4 L24.0 566.3 L25.0 566.2 L26.0 566.1 L27.0 565.9 L28.0 565.8 L29.0 565.7 L30.0 565.6 L31.0 565.5 L32.0 565.3 L33.0 565.2 L34.0 565.1 L35.0 564.9 L36.0 564.8 L37.0 564.7 L38.0 564.5 L39.0 564.4 L40.0 564.3 L41.0 564.1 L42.0 564.0 L43.0 563.9 L44.0 563.7 L45.0 563.6 L46.0 563.4 L47.0 563.3 L48.0 563.1 L49.0 563.0 L50.0 562.8 L51.0 562.7 L52.0 562.5 L53.0 562.4 L54.0 562.2 L55.0 562.0 L56.0 561.9 L57.0 561.7 L58.0 561.5 L59.0 561.4 L60.0 561.2 L61.0 561.0 L62.0 560.9 L63.0 560.7 L64.0 560.5 L65.0 560.3 L66.0 560.1 L67.0 560.0 L68.0 559.8 L69.0 559.6 L70.0 559.4 L71.0 559.2 L72.0 559.0 L73.0 558.8 L74.0 558.6 L75.0 558.4 L76.0 558.2 L77.0 558.0 L78.0 557.8 L79.0 557.6 L80.0 557.4 L81.0 557.2 L82.0 556.9 L83.0 556.7 L84.0 556.5 L85.0 556.3 L86.0 556.0 L87.0 555.8 L88.0 555.6 L89.0 555.3 L90.0 555.1 L91.0 554.9 L92.0 554.6 L93.0 554.4 L94.0 554.1 L95.0 553.9 L96.0 553.6 L97.0 553.3 L98.0 553.1 L99.0 552.8 L100.0 552.5 L101.0 552.3 L102.0 552.0 L103.0 551.7 L104.0 551.5 L105.0 551.2 L106.0 550.9 L107.0 550.6 L108.0 550.3 L109.0 550.0 L110.0 549.7 L111.0 549.4 L112.0 549.1 L113.0 548.8 L114.0 548.5 L115.0 548.2 L116.0 547.9 L117.0 547.5 L118.0 547.2 L119.0 546.9 L120.0 546.6 L121.0 546.2 L122.0 545.9 L123.0 545.5 L124.0 545.2 L125.0 544.9 L126.0 544.5 L127.0 544.1 L128.0 543.8 L129.0 543.4 L130.0 543.1 L131.0 542.7 L132.0 542.3 L133.0 541.9 L134.0 541.5 L135.0 541.2 L136.0 540.8 L137.0 540.4 L138.0 540.0 L139.0 539.6 L140.0 539.2 L141.0 538.7 L142.0 538.3 L143.0 537.9 L144.0 537.5 L145.0 537.0 L146.0 536.6 L147.0 536.2 L148.0 535.7 L149.0 535.3 L150.0 534.8 L151.0 534.3 L152.0 533.9 L153.0 533.4 L154.0 532.9 L155.0 532.4 L156.0 531.9 L157.0 531.4 L158.0 530.9 L159.0 530.4 L160.0 529.9 L161.0 529.4 L162.0 528.8 L163.0 528.3 L164.0 527.7 L165.0 527.2 L166.0 526.6 L167.0 526.0 L168.0 525.5 L169.0 524.9 L170.0 524.3 L171.0 523.7 L172.0 523.1 L173.0 522.4 L174.0 521.8 L175.0 521.2 L176.0 520.5 L177.0 519.8 L178.0 519.2 L179.0 518.5 L180.0 517.8 L181.0 517.1 L182.0 516.4 L183.0 515.6 L184.0 514.9 L185.0 514.1 L186.0 513.4 L187.0 512.6 L188.0 511.8 L189.0 511.0 L190.0 510.1 L191.0 509.3 L192.0 508.4 L193.0 507.6 L194.0 506.7 L195.0 505.8 L196.0 504.9 L197.0 503.9 L198.0 503.0 L199.0 502.0 L200.0 501.0 L201.0 500.0 L202.0 499.0 L203.0 497.9 L204.0 496.8 L205.0 495.7 L206.0 494.6 L207.0 493.5 L208.0 492.3 L209.0 491.1 L210.0 489.9 L211.0 488.6 L212.0 487.4 L213.0 486.1 L214.0 484.7 L215.0 483.4 L216.0 482.0 L217.0 480.5 L218.0 479.1 L219.0 477.6 L220.0 476.0 L221.0 474.5 L222.0 472.9 L223.0 471.2 L224.0 469.5 L225.0 467.8 L226.0 466.0 L227.0 464.2 L228.0 462.3 L229.0 460.4 L230.0 458.4 L231.0 456.4 L232.0 454.3 L233.0 452.2 L234.0 450.0 L235.0 447.7 L236.0 445.4 L237.0 443.0 L238.0 440.5 L239.0 438.0 L240.0 435.4 L241.0 432.7 L242.0 429.9 L243.0 427.1 L244.0 424.1 L245.0 421.1 L246.0 417.9 L247.0 414.7 L248.0 411.4 L249.0 407.9 L250.0 404.4 L251.0 400.7 L252.0 396.9 L253.0 393.0 L254.0 389.0 L255.0 384.8 L256.0 380.5 L257.0 376.1 L258.0 371.5 L259.0 366.8 L260.0 361.9 L261.0 356.9 L262.0 351.7 L263.0 346.4 L264.0 341.0 L265.0 335.4 L266.0 329.6 L267.0 323.7 L268.0 317.7 L269.0 311.6 L270.0 305.5 L271.0 299.2 L272.0 292.9 L273.0 286.5 L274.0 280.2 L275.0 274.0 L276.0 267.8 L277.0 261.8 L278.0 255.9 L279.0 250.4 L280.0 245.1 L281.0 240.3 L282.0 235.9 L283.0 232.0 L284.0 228.6 L285.0 225.9 L286.0 223.9 L287.0 222.6 L288.0 222.0 L289.0 222.2 L290.0 223.4 L291.0 225.4 L292.0 228.3 L293.0 232.0 L294.0 236.5 L295.0 241.6 L296.0 247.2 L297.0 253.3 L298.0 259.7 L299.0 266.4 L300.0 273.4 L301.0 280.4 L302.0 287.5 L303.0 294.6 L304.0 301.7 L305.0 308.7 L306.0 315.6 L307.0 322.4 L308.0 329.0 L309.0 335.4 L310.0 341.7 L311.0 347.8 L312.0 353.7 L313.0 359.4 L314.0 364.9 L315.0 370.3 L316.0 375.4 L317.0 380.4 L318.0 385.2 L319.0 389.8 L320.0 394.3 L321.0 398.6 L322.0 402.7 L323.0 406.7 L324.0 410.6 L325.0 414.3 L326.0 417.9 L327.0 421.4 L328.0 424.8 L329.0 428.0 L330.0 431.1 L331.0 434.2 L332.0 437.1 L333.0 439.9 L334.0 442.7 L335.0 445.3 L336.0 447.9 L337.0 450.4 L338.0 452.8 L339.0 455.1 L340.0 457.4 L341.0 459.6 L342.0 461.7 L343.0 463.8 L344.0 465.8 L345.0 467.8 L346.0 469.7 L347.0 471.5 L348.0 473.3 L349.0 475.1 L350.0 476.8 L351.0 478.5 L352.0 480.1 L353.0 481.7 L354.0 483.2 L355.0 484.7 L356.0 486.2 L357.0 487.6 L358.0 489.0 L359.0 490.3 L360.0 491.7 L361.0 493.0 L362.0 494.2 L363.0 495.5 L364.0 496.7 L365.0 497.8 L366.0 499.0 L367.0 500.1 L368.0 501.2 L369.0 502.3 L370.0 503.4 L371.0 504.4 L372.0 505.4 L373.0 506.4 L374.0 507.4 L375.0 508.4 L376.0 509.3 L377.0 510.2 L378.0 511.1 L379.0 512.0 L380.0 512.9 L381.0 513.7 L382.0 514.6 L383.0 515.4 L384.0 516.2 L385.0 517.0 L386.0 517.7 L387.0 518.5 L388.0 519.3 L389.0 520.0 L390.0 520.7 L391.0 521.4 L392.0 522.1 L393.0 522.8 L394.0 523.5 L395.0 524.1 L396.0 524.8 L397.0 525.4 L398.0 526.1 L399.0 526.7 L400.0 527.3 L401.0 527.9 L402.0 528.5 L403.0 529.1 L404.0 529.7 L405.0 530.2 L406.0 530.8 L407.0 531.3 L408.0 531.9 L409.0 532.4 L410.0 532.9 L411.0 533.4 L412.0 533.9 L413.0 534.4 L414.0 534.9 L415.0 535.4 L416.0 535.9 L417.0 536.4 L418.0 536.8 L419.0 537.3 L420.0 537.8 L421.0 538.2 L422.0 538.6 L423.0 539.1 L424.0 539.5 L425.0 539.9 L426.0 540.4 L427.0 540.8 L428.0 541.2 L429.0 541.6 L430.0 542.0 L431.0 542.4 L432.0 542.7 L433.0 543.1 L434.0 543.5 L435.0 543.9 L436.0 544.2 L437.0 544.6 L438.0 545.0 L439.0 545.3 L440.0 545.7 L441.0 546.0 L442.0 546.3 L443.0 546.7 L444.0 547.0 L445.0 547.3 L446.0 547.7 L447.0 548.0 L448.0 548.3 L449.0 548.6 L450.0 548.9 L451.0 549.2 L452.0 549.5 L453.0 549.8 L454.0 550.1 L455.0 550.4 L456.0 550.7 L457.0 551.0 L458.0 551.2 L459.0 551.5 L460.0 551.8 L461.0 552.1 L462.0 552.3 L463.0 552.6 L464.0 552.9 L465.0 553.1 L466.0 553.4 L467.0 553.6 L468.0 553.9 L469.0 554.1 L470.0 554.4 L471.0 554.6 L472.0 554.8 L473.0 555.1 L474.0 555.3 L475.0 555.5 L476.0 555.8 L477.0 556.0 L478.0 556.2 L479.0 556.4 L480.0 556.7 L481.0 556.9 L482.0 557.1 L483.0 557.3 L484.0 557.5 L485.0 557.7 L486.0 557.9 L487.0 558.1 L488.0 558.3 L489.0 558.5 L490.0 558.7 L491.0 558.9 L492.0 559.1 L493.0 559.3 L494.0 559.5 L495.0 559.6 L496.0 559.8 L497.0 560.0 L498.0 560.2 L499.0 560.4 L500.0 560.5 L501.0 560.7 L502.0 560.9 L503.0 561.1 L504.0 561.2 L505.0 561.4 L506.0 561.6 L507.0 561.7 L508.0 561.9 L509.0 562.0 L510.0 562.2 L511.0 562.4 L512.0 562.5 L513.0 562.7 L514.0 562.8 L515.0 563.0 L516.0 563.1 L517.0 563.3 L518.0 563.4 L519.0 563.6 L520.0 563.7 L521.0 563.8 L522.0 564.0 L523.0 564.1 L524.0 564.3 L525.0 564.4 L526.0 564.5 L527.0 564.7 L528.0 564.8 L529.0 564.9 L530.0 565.0 L531.0 565.2 L532.0 565.3 L533.0 565.4 L534.0 565.5 L535.0 565.7 L536.0 565.8 L537.0 565.9 L538.0 566.0 L539.0 566.1 L540.0 566.3 L541.0 566.4 L542.0 566.5 L543.0 566.6 L544.0 566.7 L545.0 566.8 L546.0 566.9 L547.0 567.0 L548.0 567.1 L549.0 567.3 L550.0 567.4 L551.0 567.5 L552.0 567.6 L553.0 567.7 L554.0 567.8 L555.0 567.9 L556.0 568.0 L557.0 568.1 L558.0 568.2 L559.0 568.3 L560.0 568.4 L561.0 568.4 L562.0 568.5 L563.0 568.6 L564.0 568.7 L565.0 568.8 L566.0 568.9 L567.0 569.0 L568.0 569.1 L569.0 569.2 L570.0 569.3 L571.0 569.3 L572.0 569.4 L573.0 569.5 L574.0 569.6 L575.0 569.7 L576.0 569.7 L577.0 569.8 L578.0 569.9 L579.0 570.0 L580.0 570.1 L581.0 570.1 L582.0 570.2 L583.0 570.3 L584.0 570.4 L585.0 570.4 L586.0 570.5 L587.0 570.6 L588.0 570.7 L589.0 570.7 L590.0 570.8 L591.0 570.9 L592.0 570.9 L593.0 571.0 L594.0 571.1 L595.0 571.1 L596.0 571.2 L597.0 571.2 L598.0 571.3 L599.0 571.3 L600.0 571.3 L601.0 571.2 L602.0 571.1 L603.0 571.0 L604.0 570.8 L605.0 570.6 L606.0 570.3 L607.0 570.1 L608.0 569.9 L609.0 569.7 L610.0 569.6 L611.0 569.6 L612.0 569.7 L613.0 569.9 L614.0 570.2 L615.0 570.5 L616.0 570.9 L617.0 571.3 L618.0 571.6 L619.0 571.9 L620.0 572.1 L621.0 572.4 L622.0 572.5 L623.0 572.6 L624.0 572.8 L625.0 572.8 L626.0 572.9 L627.0 573.0 L628.0 573.0 L629.0 573.1 L630.0 573.1 L631.0 573.2 L632.0 573.2 L633.0 573.3 L634.0 573.3 L635.0 573.4 L636.0 573.4 L637.0 573.4 L638.0 573.5 L639.0 573.5 L640.0 573.6 L641.0 573.6 L642.0 573.7 L643.0 573.7 L644.0 573.7 L645.0 573.8 L646.0 573.8 L647.0 573.9 L648.0 573.9 L649.0 573.9 L650.0 574.0 L651.0 574.0 L652.0 574.1 L653.0 574.1 L654.0 574.1 L655.0 574.2 L656.0 574.2 L657.0 574.3 L658.0 574.3 L659.0 574.3 L660.0 574.4 L661.0 574.4 L662.0 574.4 L663.0 574.5 L664.0 574.5 L665.0 574.5 L666.0 574.6 L667.0 574.6 L668.0 574.6 L669.0 574.7 L670.0 574.7 L671.0 574.7 L672.0 574.8 L673.0 574.8 L674.0 574.8 L675.0 574.9 L676.0 574.9 L677.0 574.9 L678.0 574.9 L679.0 575.0 L680.0 575.0 L681.0 575.0 L682.0 575.1 L683.0 575.1 L684.0 575.1 L685.0 575.2 L686.0 575.2 L687.0 575.2 L688.0 575.3 L689.0 575.3 L690.0 575.4 L691.0 575.4 L692.0 575.5 L693.0 575.6 L694.0 575.7 L695.0 575.7 L696.0 575.8 L697.0 575.9 L698.0 575.9 L699.0 576.0 L700.0 576.0 L701.0 576.0 L702.0 576.0 L703.0 576.0 L704.0 576.0 L705.0 576.0 L706.0 575.9 L707.0 575.9 L708.0 575.9 L709.0 575.9 L710.0 575.9 L711.0 575.9 L712.0 575.9 L713.0 575.9 L714.0 575.9 L715.0 575.9 L716.0 575.9 L717.0 575.9 L718.0 575.9 L719.0 575.9 L720.0 576.0 L721.0 576.0 L722.0 576.0 L723.0 576.0 L724.0 576.0 L725.0 576.1 L726.0 576.1 L727.0 576.1 L728.0 576.1 L729.0 576.1 L730.0 576.2 L731.0 576.2 L732.0 576.2 L733.0 576.2 L734.0 576.2 L735.0 576.2 L736.0 576.2 L737.0 576.3 L738.0 576.2 L739.0 576.2 L740.0 576.1 L741.0 576.0 L742.0 575.9 L743.0 575.7 L744.0 575.5 L745.0 575.3 L746.0 575.2 L747.0 575.2 L748.0 575.2 L749.0 575.4 L750.0 575.6 L751.0 575.8 L752.0 576.0 L753.0 576.2 L754.0 576.4 L755.0 576.5 L756.0 576.5 L757.0 576.6 L758.0 576.6 L759.0 576.6 L760.0 576.6 L761.0 576.6 L762.0 576.6 L763.0 576.7 L764.0 576.7 L765.0 576.7 L766.0 576.7 L767.0 576.7 L768.0 576.7 L769.0 576.7 L770.0 576.7 L771.0 576.8 L772.0 576.8 L773.0 576.8 L774.0 576.8 L775.0 576.8 L776.0 576.8 L777.0 576.8 L778.0 576.8 L779.0 576.9 L780.0 576.9 L781.0 576.9 L782.0 576.9 L783.0 576.9 L784.0 576.9 L785.0 576.9 L786.0 576.9 L787.0 576.9 L788.0 576.8 L789.0 576.8 L790.0 576.7 L791.0 576.6 L792.0 576.4 L793.0 576.2 L794.0 575.9 L795.0 575.6 L796.0 575.3 L797.0 574.9 L798.0 574.5 L799.0 574.0 L800.0 573.6 L801.0 573.2 L802.0 572.8 L803.0 572.6 L804.0 572.4 L805.0 572.4 L806.0 572.4 L807.0 572.6 L808.0 572.9 L809.0 573.2 L810.0 573.7 L811.0 574.1 L812.0 574.6 L813.0 575.0 L814.0 575.4 L815.0 575.8 L816.0 576.1 L817.0 576.4 L818.0 576.6 L819.0 576.8 L820.0 576.9 L821.0 577.0 L822.0 577.1 L823.0 577.2 L824.0 577.2 L825.0 577.2 L826.0 577.3 L827.0 577.3 L828.0 577.3 L829.0 577.3 L830.0 577.3 L831.0 577.3 L832.0 577.3 L833.0 577.3 L834.0 577.3 L835.0 577.3 L836.0 577.3 L837.0 577.3 L838.0 577.4 L839.0 577.4 L840.0 577.4 L841.0 577.4 L842.0 577.4 L843.0 577.4 L844.0 577.4 L845.0 577.4 L846.0 577.4 L847.0 577.4 L848.0 577.4 L849.0 577.4 L850.0 577.4 L851.0 577.4 L852.0 577.4 L853.0 577.4 L854.0 577.4 L855.0 577.5 L856.0 577.5 L857.0 577.5 L858.0 577.5 L859.0 577.5 L860.0 577.5 L861.0 577.5 L862.0 577.5 L863.0 577.5 L864.0 577.5 L865.0 577.5 L866.0 577.5 L867.0 577.5 L868.0 577.5 L869.0 577.5 L870.0 577.5 L871.0 577.5 L872.0 577.5 L873.0 577.5 L874.0 577.5 L875.0 577.5 L876.0 577.6 L877.0 577.6 L878.0 577.6 L879.0 577.6 L880.0 577.6 L881.0 577.6 L882.0 577.6 L883.0 577.6 L884.0 577.6 L885.0 577.6 L886.0 577.6 L887.0 577.6 L888.0 577.6 L889.0 577.6 L890.0 577.6 L891.0 577.6 L892.0 577.6 L893.0 577.6 L894.0 577.6 L895.0 577.6 L896.0 577.6 L897.0 577.6 L898.0 577.6 L899.0 577.6 L900.0 577.6 L901.0 577.6 L902.0 577.7 L903.0 577.7 L904.0 577.7 L905.0 577.7 L906.0 577.7 L907.0 577.7 L908.0 577.7 L909.0 577.7 L910.0 577.7 L911.0 577.7 L912.0 577.7 L913.0 577.7 L914.0 577.7 L915.0 577.7 L916.0 577.7 L917.0 577.7 L918.0 577.7 L919.0 577.7 L920.0 577.7 L921.0 577.7 L922.0 577.7 L923.0 577.7 L924.0 577.7 L925.0 577.7 L926.0 577.7 L927.0 577.7 L928.0 577.7 L929.0 577.7 L930.0 577.7 L931.0 577.7 L932.0 577.7 L933.0 577.7 L934.0 577.7 L935.0 577.7 L936.0 577.7 L937.0 577.7 L938.0 577.7 L939.0 577.7 L940.0 577.7 L941.0 577.7 L942.0 577.7 L943.0 577.7 L944.0 577.7 L945.0 577.7 L946.0 577.7 L947.0 577.7 L948.0 577.7 L949.0 577.7 L950.0 577.7 L951.0 577.7 L952.0 577.7 L953.0 577.7 L954.0 577.7 L955.0 577.7 L956.0 577.7 L957.0 577.7 L958.0 577.7 L959.0 577.7 L960.0 577.7 L961.0 577.7 L962.0 577.7 L963.0 577.7 L964.0 577.7 L965.0 577.7 L966.0 577.7 L967.0 577.7 L968.0 577.7 L969.0 577.7 L970.0 577.7 L971.0 577.7 L972.0 577.7 L973.0 577.7 L974.0 577.7 L975.0 577.7 L976.0 577.7 L977.0 577.7 L978.0 577.7 L979.0 577.7 L980.0 577.7 L981.0 577.7 L982.0 577.7" fill="none" stroke="#46735f" stroke-width="1.3" stroke-dasharray="9 1.5"/>
<path d="M-2.0 477.4 L-1.0 477.4 L0.0 477.4 L1.0 477.4 L2.0 477.4 L3.0 477.4 L4.0 477.4 L5.0 477.4 L6.0 477.4 L7.0 477.4 L8.0 477.4 L9.0 477.4 L10.0 477.4 L11.0 477.4 L12.0 477.4 L13.0 477.4 L14.0 477.4 L15.0 477.4 L16.0 477.4 L17.0 477.4 L18.0 477.4 L19.0 477.4 L20.0 477.4 L21.0 477.4 L22.0 477.4 L23.0 477.4 L24.0 477.4 L25.0 477.4 L26.0 477.4 L27.0 477.4 L28.0 477.4 L29.0 477.4 L30.0 477.4 L31.0 477.4 L32.0 477.4 L33.0 477.4 L34.0 477.4 L35.0 477.4 L36.0 477.4 L37.0 477.4 L38.0 477.4 L39.0 477.4 L40.0 477.4 L41.0 477.4 L42.0 477.4 L43.0 477.4 L44.0 477.4 L45.0 477.4 L46.0 477.4 L47.0 477.4 L48.0 477.4 L49.0 477.4 L50.0 477.4 L51.0 477.4 L52.0 477.4 L53.0 477.4 L54.0 477.4 L55.0 477.4 L56.0 477.4 L57.0 477.4 L58.0 477.4 L59.0 477.4 L60.0 477.4 L61.0 477.4 L62.0 477.4 L63.0 477.4 L64.0 477.4 L65.0 477.4 L66.0 477.4 L67.0 477.4 L68.0 477.3 L69.0 477.3 L70.0 477.3 L71.0 477.3 L72.0 477.3 L73.0 477.3 L74.0 477.3 L75.0 477.3 L76.0 477.3 L77.0 477.3 L78.0 477.3 L79.0 477.3 L80.0 477.3 L81.0 477.3 L82.0 477.3 L83.0 477.3 L84.0 477.3 L85.0 477.3 L86.0 477.3 L87.0 477.3 L88.0 477.3 L89.0 477.3 L90.0 477.3 L91.0 477.3 L92.0 477.3 L93.0 477.3 L94.0 477.3 L95.0 477.3 L96.0 477.3 L97.0 477.3 L98.0 477.3 L99.0 477.3 L100.0 477.3 L101.0 477.3 L102.0 477.3 L103.0 477.3 L104.0 477.3 L105.0 477.3 L106.0 477.3 L107.0 477.3 L108.0 477.3 L109.0 477.3 L110.0 477.3 L111.0 477.3 L112.0 477.3 L113.0 477.3 L114.0 477.3 L115.0 477.3 L116.0 477.3 L117.0 477.3 L118.0 477.3 L119.0 477.3 L120.0 477.3 L121.0 477.3 L122.0 477.3 L123.0 477.2 L124.0 477.2 L125.0 477.2 L126.0 477.2 L127.0 477.2 L128.0 477.2 L129.0 477.2 L130.0 477.2 L131.0 477.2 L132.0 477.2 L133.0 477.2 L134.0 477.2 L135.0 477.2 L136.0 477.2 L137.0 477.2 L138.0 477.2 L139.0 477.2 L140.0 477.2 L141.0 477.2 L142.0 477.2 L143.0 477.2 L144.0 477.2 L145.0 477.2 L146.0 477.2 L147.0 477.2 L148.0 477.1 L149.0 477.1 L150.0 477.1 L151.0 477.1 L152.0 477.1 L153.0 477.1 L154.0 477.1 L155.0 477.1 L156.0 477.1 L157.0 477.1 L158.0 477.1 L159.0 477.1 L160.0 477.1 L161.0 477.1 L162.0 477.1 L163.0 477.1 L164.0 477.0 L165.0 477.0 L166.0 477.0 L167.0 477.0 L168.0 477.0 L169.0 477.0 L170.0 477.0 L171.0 477.0 L172.0 477.0 L173.0 477.0 L174.0 477.0 L175.0 476.9 L176.0 476.9 L177.0 476.9 L178.0 476.9 L179.0 476.9 L180.0 476.9 L181.0 476.9 L182.0 476.9 L183.0 476.9 L184.0 476.8 L185.0 476.8 L186.0 476.8 L187.0 476.7 L188.0 476.7 L189.0 476.7 L190.0 476.6 L191.0 476.6 L192.0 476.5 L193.0 476.5 L194.0 476.4 L195.0 476.4 L196.0 476.3 L197.0 476.3 L198.0 476.2 L199.0 476.1 L200.0 476.1 L201.0 476.0 L202.0 476.0 L203.0 475.9 L204.0 475.9 L205.0 475.8 L206.0 475.7 L207.0 475.7 L208.0 475.6 L209.0 475.6 L210.0 475.5 L211.0 475.4 L212.0 475.4 L213.0 475.3 L214.0 475.2 L215.0 475.1 L216.0 475.0 L217.0 474.9 L218.0 474.8 L219.0 474.6 L220.0 474.4 L221.0 474.1 L222.0 473.8 L223.0 473.5 L224.0 473.1 L225.0 472.8 L226.0 472.5 L227.0 472.2 L228.0 471.9 L229.0 471.7 L230.0 471.6 L231.0 471.5 L232.0 471.4 L233.0 471.3 L234.0 471.3 L235.0 471.2 L236.0 471.1 L237.0 471.1 L238.0 471.0 L239.0 471.0 L240.0 470.9 L241.0 470.9 L242.0 470.8 L243.0 470.8 L244.0 470.7 L245.0 470.6 L246.0 470.5 L247.0 470.3 L248.0 470.2 L249.0 470.0 L250.0 469.7 L251.0 469.5 L252.0 469.3 L253.0 469.1 L254.0 468.9 L255.0 468.7 L256.0 468.5 L257.0 468.4 L258.0 468.3 L259.0 468.3 L260.0 468.5 L261.0 469.1 L262.0 469.9 L263.0 470.9 L264.0 471.8 L265.0 472.7 L266.0 473.5 L267.0 474.2 L268.0 475.0 L269.0 475.8 L270.0 476.6 L271.0 477.4 L272.0 478.3 L273.0 479.4 L274.0 480.8 L275.0 482.3 L276.0 483.6 L277.0 484.6 L278.0 485.0 L279.0 484.1 L280.0 482.0 L281.0 479.6 L282.0 477.6 L283.0 476.6 L284.0 475.9 L285.0 475.3 L286.0 474.8 L287.0 474.4 L288.0 474.2 L289.0 474.2 L290.0 474.5 L291.0 474.9 L292.0 475.4 L293.0 476.0 L294.0 476.6 L295.0 477.3 L296.0 477.9 L297.0 478.5 L298.0 479.0 L299.0 479.4 L300.0 479.8 L301.0 480.2 L302.0 480.6 L303.0 481.1 L304.0 481.6 L305.0 482.3 L306.0 483.0 L307.0 484.4 L308.0 486.6 L309.0 488.8 L310.0 490.2 L311.0 488.4 L312.0 481.2 L313.0 476.8 L314.0 474.1 L315.0 473.4 L316.0 476.3 L317.0 478.5 L318.0 476.8 L319.0 475.0 L320.0 475.6 L321.0 476.6 L322.0 477.2 L323.0 477.0 L324.0 476.6 L325.0 476.1 L326.0 475.8 L327.0 475.7 L328.0 475.7 L329.0 475.8 L330.0 475.9 L331.0 476.0 L332.0 476.1 L333.0 476.2 L334.0 476.3 L335.0 476.4 L336.0 476.5 L337.0 476.6 L338.0 476.6 L339.0 476.6 L340.0 476.6 L341.0 476.5 L342.0 476.5 L343.0 476.4 L344.0 476.4 L345.0 476.3 L346.0 476.2 L347.0 476.1 L348.0 476.0 L349.0 475.8 L350.0 475.7 L351.0 475.5 L352.0 475.1 L353.0 474.6 L354.0 474.0 L355.0 473.4 L356.0 472.8 L357.0 472.2 L358.0 471.6 L359.0 471.2 L360.0 470.7 L361.0 470.1 L362.0 469.6 L363.0 469.1 L364.0 468.6 L365.0 468.3 L366.0 468.0 L367.0 467.8 L368.0 467.8 L369.0 468.1 L370.0 468.6 L371.0 469.3 L372.0 470.0 L373.0 470.8 L374.0 471.5 L375.0 472.2 L376.0 472.6 L377.0 472.9 L378.0 473.1 L379.0 473.4 L380.0 473.6 L381.0 473.8 L382.0 474.0 L383.0 474.2 L384.0 474.4 L385.0 474.5 L386.0 474.7 L387.0 474.8 L388.0 474.9 L389.0 474.9 L390.0 475.0 L391.0 475.0 L392.0 475.0 L393.0 475.0 L394.0 475.0 L395.0 475.0 L396.0 475.1 L397.0 475.1 L398.0 475.2 L399.0 475.3 L400.0 475.3 L401.0 475.4 L402.0 475.4 L403.0 475.4 L404.0 475.5 L405.0 475.5 L406.0 475.5 L407.0 475.5 L408.0 475.6 L409.0 475.6 L410.0 475.6 L411.0 475.6 L412.0 475.6 L413.0 475.6 L414.0 475.6 L415.0 475.6 L416.0 475.6 L417.0 475.6 L418.0 475.6 L419.0 475.6 L420.0 475.7 L421.0 475.7 L422.0 475.7 L423.0 475.8 L424.0 475.8 L425.0 475.8 L426.0 475.8 L427.0 475.8 L428.0 475.8 L429.0 475.8 L430.0 475.8 L431.0 475.8 L432.0 475.8 L433.0 475.8 L434.0 475.8 L435.0 475.8 L436.0 475.8 L437.0 475.8 L438.0 475.8 L439.0 475.8 L440.0 475.8 L441.0 475.8 L442.0 475.8 L443.0 475.8 L444.0 475.8 L445.0 475.8 L446.0 475.8 L447.0 475.8 L448.0 475.8 L449.0 475.8 L450.0 475.8 L451.0 475.8 L452.0 475.8 L453.0 475.8 L454.0 475.8 L455.0 475.8 L456.0 475.8 L457.0 475.8 L458.0 475.8 L459.0 475.8 L460.0 475.8 L461.0 475.8 L462.0 475.8 L463.0 475.8 L464.0 475.8 L465.0 475.8 L466.0 475.8 L467.0 475.8 L468.0 475.8 L469.0 475.7 L470.0 475.7 L471.0 475.6 L472.0 475.6 L473.0 475.5 L474.0 475.5 L475.0 475.4 L476.0 475.3 L477.0 475.2 L478.0 475.2 L479.0 475.1 L480.0 475.0 L481.0 474.9 L482.0 474.8 L483.0 474.7 L484.0 474.6 L485.0 474.5 L486.0 474.4 L487.0 474.3 L488.0 474.3 L489.0 474.2 L490.0 474.1 L491.0 473.9 L492.0 473.8 L493.0 473.7 L494.0 473.6 L495.0 473.4 L496.0 473.3 L497.0 473.1 L498.0 473.0 L499.0 472.8 L500.0 472.6 L501.0 472.5 L502.0 472.3 L503.0 472.1 L504.0 471.9 L505.0 471.8 L506.0 471.6 L507.0 471.4 L508.0 471.2 L509.0 471.0 L510.0 470.8 L511.0 470.6 L512.0 470.4 L513.0 470.1 L514.0 469.9 L515.0 469.7 L516.0 469.5 L517.0 469.3 L518.0 469.1 L519.0 468.8 L520.0 468.6 L521.0 468.4 L522.0 468.2 L523.0 468.0 L524.0 467.7 L525.0 467.5 L526.0 467.3 L527.0 467.1 L528.0 466.9 L529.0 466.6 L530.0 466.4 L531.0 466.2 L532.0 466.0 L533.0 465.8 L534.0 465.6 L535.0 465.4 L536.0 465.2 L537.0 465.0 L538.0 464.8 L539.0 464.6 L540.0 464.4 L541.0 464.1 L542.0 463.9 L543.0 463.7 L544.0 463.5 L545.0 463.3 L546.0 463.1 L547.0 462.9 L548.0 462.7 L549.0 462.5 L550.0 462.3 L551.0 462.1 L552.0 461.9 L553.0 461.6 L554.0 461.4 L555.0 461.2 L556.0 461.0 L557.0 460.8 L558.0 460.6 L559.0 460.3 L560.0 460.1 L561.0 459.9 L562.0 459.7 L563.0 459.4 L564.0 459.2 L565.0 459.0 L566.0 458.8 L567.0 458.5 L568.0 458.3 L569.0 458.1 L570.0 457.8 L571.0 457.6 L572.0 457.3 L573.0 457.1 L574.0 456.8 L575.0 456.6 L576.0 456.3 L577.0 456.1 L578.0 455.8 L579.0 455.6 L580.0 455.3 L581.0 455.0 L582.0 454.8 L583.0 454.5 L584.0 454.2 L585.0 453.9 L586.0 453.6 L587.0 453.3 L588.0 453.0 L589.0 452.7 L590.0 452.4 L591.0 452.0 L592.0 451.7 L593.0 451.3 L594.0 451.0 L595.0 450.7 L596.0 450.3 L597.0 449.9 L598.0 449.5 L599.0 449.1 L600.0 448.7 L601.0 448.2 L602.0 447.7 L603.0 447.2 L604.0 446.7 L605.0 446.2 L606.0 445.7 L607.0 445.3 L608.0 444.9 L609.0 444.7 L610.0 444.6 L611.0 444.5 L612.0 444.5 L613.0 444.4 L614.0 444.4 L615.0 444.3 L616.0 444.2 L617.0 444.1 L618.0 443.9 L619.0 443.7 L620.0 443.5 L621.0 443.2 L622.0 443.0 L623.0 442.7 L624.0 442.5 L625.0 442.2 L626.0 441.9 L627.0 441.6 L628.0 441.3 L629.0 441.0 L630.0 440.7 L631.0 440.4 L632.0 440.1 L633.0 439.7 L634.0 439.4 L635.0 439.0 L636.0 438.6 L637.0 438.2 L638.0 437.9 L639.0 437.5 L640.0 437.1 L641.0 436.6 L642.0 436.2 L643.0 435.8 L644.0 435.4 L645.0 435.0 L646.0 434.5 L647.0 434.1 L648.0 433.6 L649.0 433.2 L650.0 432.8 L651.0 432.3 L652.0 431.8 L653.0 431.4 L654.0 430.9 L655.0 430.5 L656.0 430.0 L657.0 429.5 L658.0 429.0 L659.0 428.5 L660.0 428.0 L661.0 427.5 L662.0 427.0 L663.0 426.5 L664.0 426.0 L665.0 425.5 L666.0 424.9 L667.0 424.4 L668.0 423.9 L669.0 423.3 L670.0 422.8 L671.0 422.2 L672.0 421.7 L673.0 421.1 L674.0 420.5 L675.0 420.0 L676.0 419.4 L677.0 418.8 L678.0 418.3 L679.0 417.7 L680.0 417.1 L681.0 416.5 L682.0 416.0 L683.0 415.4 L684.0 414.8 L685.0 414.2 L686.0 413.6 L687.0 413.0 L688.0 412.4 L689.0 411.8 L690.0 411.1 L691.0 410.5 L692.0 409.9 L693.0 409.3 L694.0 408.6 L695.0 408.0 L696.0 407.3 L697.0 406.7 L698.0 406.0 L699.0 405.4 L700.0 404.7 L701.0 404.0 L702.0 403.4 L703.0 402.7 L704.0 402.0 L705.0 401.3 L706.0 400.6 L707.0 399.9 L708.0 399.2 L709.0 398.5 L710.0 397.8 L711.0 397.0 L712.0 396.3 L713.0 395.6 L714.0 394.8 L715.0 394.1 L716.0 393.3 L717.0 392.6 L718.0 391.8 L719.0 391.0 L720.0 390.2 L721.0 389.5 L722.0 388.7 L723.0 387.9 L724.0 387.1 L725.0 386.3 L726.0 385.4 L727.0 384.6 L728.0 383.8 L729.0 382.9 L730.0 382.1 L731.0 381.2 L732.0 380.3 L733.0 379.4 L734.0 378.4 L735.0 377.5 L736.0 376.5 L737.0 375.4 L738.0 374.4 L739.0 373.3 L740.0 372.2 L741.0 371.2 L742.0 370.1 L743.0 369.1 L744.0 368.1 L745.0 367.1 L746.0 366.2 L747.0 365.3 L748.0 364.5 L749.0 363.7 L750.0 362.9 L751.0 362.1 L752.0 361.3 L753.0 360.5 L754.0 359.7 L755.0 358.8 L756.0 357.9 L757.0 356.9 L758.0 356.0 L759.0 355.0 L760.0 354.0 L761.0 353.0 L762.0 352.0 L763.0 351.0 L764.0 350.0 L765.0 348.9 L766.0 347.9 L767.0 346.9 L768.0 345.8 L769.0 344.8 L770.0 343.8 L771.0 342.7 L772.0 341.7 L773.0 340.7 L774.0 339.7 L775.0 338.6 L776.0 337.6 L777.0 336.5 L778.0 335.5 L779.0 334.5 L780.0 333.4 L781.0 332.4 L782.0 331.3 L783.0 330.3 L784.0 329.2 L785.0 328.2 L786.0 327.1 L787.0 326.1 L788.0 325.0 L789.0 324.0 L790.0 322.9 L791.0 321.8 L792.0 320.8 L793.0 319.7 L794.0 318.7 L795.0 317.7 L796.0 316.6 L797.0 315.6 L798.0 314.5 L799.0 313.5 L800.0 312.5 L801.0 311.4 L802.0 310.4 L803.0 309.4 L804.0 308.3 L805.0 307.3 L806.0 306.3 L807.0 305.3 L808.0 304.2 L809.0 303.2 L810.0 302.2 L811.0 301.1 L812.0 300.1 L813.0 299.0 L814.0 298.0 L815.0 296.9 L816.0 295.9 L817.0 294.8 L818.0 293.7 L819.0 292.7 L820.0 291.6 L821.0 290.5 L822.0 289.4 L823.0 288.3 L824.0 287.2 L825.0 286.1 L826.0 285.0 L827.0 283.9 L828.0 282.8 L829.0 281.6 L830.0 280.4 L831.0 279.2 L832.0 278.0 L833.0 276.8 L834.0 275.5 L835.0 274.2 L836.0 272.9 L837.0 271.6 L838.0 270.3 L839.0 269.0 L840.0 267.6 L841.0 266.2 L842.0 264.9 L843.0 263.5 L844.0 262.1 L845.0 260.6 L846.0 259.2 L847.0 257.8 L848.0 256.3 L849.0 254.8 L850.0 253.4 L851.0 251.9 L852.0 250.4 L853.0 248.9 L854.0 247.3 L855.0 245.8 L856.0 244.2 L857.0 242.6 L858.0 241.0 L859.0 239.4 L860.0 237.7 L861.0 236.0 L862.0 234.3 L863.0 232.6 L864.0 230.9 L865.0 229.2 L866.0 227.4 L867.0 225.7 L868.0 223.9 L869.0 222.1 L870.0 220.4 L871.0 218.6 L872.0 216.8 L873.0 215.0 L874.0 213.3 L875.0 211.5 L876.0 209.7 L877.0 208.0 L878.0 206.3 L879.0 204.5 L880.0 202.8 L881.0 201.1 L882.0 199.4 L883.0 197.6 L884.0 195.9 L885.0 194.2 L886.0 192.5 L887.0 190.8 L888.0 189.0 L889.0 187.3 L890.0 185.6 L891.0 183.8 L892.0 182.1 L893.0 180.3 L894.0 178.6 L895.0 176.8 L896.0 175.0 L897.0 173.2 L898.0 171.4 L899.0 169.5 L900.0 167.7 L901.0 165.8 L902.0 163.9 L903.0 162.0 L904.0 160.1 L905.0 158.1 L906.0 156.2 L907.0 154.2 L908.0 152.3 L909.0 150.3 L910.0 148.3 L911.0 146.3 L912.0 144.2 L913.0 142.2 L914.0 140.2 L915.0 138.1 L916.0 136.1 L917.0 134.0 L918.0 131.9 L919.0 129.9 L920.0 127.8 L921.0 125.7 L922.0 123.6 L923.0 121.5 L924.0 119.4 L925.0 117.2 L926.0 115.1 L927.0 113.0 L928.0 110.9 L929.0 108.8 L930.0 106.6 L931.0 104.5 L932.0 102.4 L933.0 100.2 L934.0 98.1 L935.0 95.9 L936.0 93.7 L937.0 91.6 L938.0 89.4 L939.0 87.2 L940.0 85.0 L941.0 82.8 L942.0 80.6 L943.0 78.4 L944.0 76.1 L945.0 73.9 L946.0 71.7 L947.0 69.4 L948.0 67.2 L949.0 64.9 L950.0 62.7 L951.0 60.4 L952.0 58.2 L953.0 55.9 L954.0 53.6 L955.0 51.4 L956.0 49.1 L957.0 46.8 L958.0 44.6 L959.0 42.3 L960.0 40.0 L961.0 37.7 L962.0 35.4 L963.0 33.1 L964.0 30.9 L965.0 28.6 L966.0 26.3 L967.0 24.0 L968.0 21.7 L969.0 19.3 L970.0 17.0 L971.0 14.7 L972.0 12.4 L973.0 10.1 L974.0 7.7 L975.0 5.4 L976.0 3.1 L977.0 0.7 L978.0 -1.6 L979.0 -3.9 L980.0 -6.3 L981.0 -8.7 L982.0 -11.0" fill="none" stroke="#46735f" stroke-width="1.3" stroke-dasharray="9 1.5"/>
</g>
<g transform="translate(965.5 106)"><circle cx="3.6" cy="3.4" r="2.9" fill="#f4f4f4" stroke="#b0b0b0" stroke-width=".9"/><path d="M5.6 5.6 L9.2 9.6" stroke="#9a9a9a" stroke-width="1.4"/><circle cx="2.2" cy="7.2" r="1.5" fill="#3a4a8a"/></g>
<g transform="translate(965.5 120.5)"><circle cx="3.6" cy="3.4" r="2.9" fill="#f4f4f4" stroke="#b0b0b0" stroke-width=".9"/><path d="M5.6 5.6 L9.2 9.6" stroke="#9a9a9a" stroke-width="1.4"/><circle cx="2.2" cy="7.2" r="1.5" fill="#3a4a8a"/></g>
<path d="M-1 113.2 L2 115.8 M-1 126.8 L2 129.4" stroke="#8a8a8a" stroke-width="1.8" stroke-linecap="round"/>
<rect x="-6" y="551.4" width="69" height="23.4" rx="4.5" fill="#ffffff" stroke="#8c8c8c" stroke-width="1.3"/>
</svg>
<div class="t" style="left:0.5px;top:554.9px;font-size:7.2px;line-height:8.6px;color:#333;letter-spacing:-0.29px;">,38 ohm + 52,6 mH</div>
<div class="t" style="left:0.5px;top:564.1px;font-size:7.2px;line-height:8.6px;color:#333;letter-spacing:-0.26px;">,45 ohm ‖ 4,96 H</div>
<div class="a" style="left:981.7px;top:90px;width:43px;height:504px;background:#f1f1f1;"></div>
<div class="t" style="left:981.2px;top:92.9px;font-size:7.4px;line-height:8.9px;color:#222;letter-spacing:-0.52px;">deg</div>
<div class="t" style="left:982.6px;top:100.2px;font-size:7.4px;line-height:8.9px;color:#222;letter-spacing:-0.25px;">450</div>
<div class="t" style="left:982.6px;top:131.4px;font-size:7.4px;line-height:8.9px;color:#222;letter-spacing:-0.25px;">360</div>
<div class="t" style="left:982.6px;top:163.2px;font-size:7.4px;line-height:8.9px;color:#222;letter-spacing:-0.25px;">270</div>
<div class="t" style="left:982.6px;top:194.8px;font-size:7.4px;line-height:8.9px;color:#222;letter-spacing:-0.25px;">180</div>
<div class="t" style="left:982.6px;top:226.4px;font-size:7.4px;line-height:8.9px;color:#222;">90</div>
<div class="t" style="left:982.6px;top:258.0px;font-size:7.4px;line-height:8.9px;color:#222;">0</div>
<div class="a" style="left:1012.3px;top:103.3px;width:10px;height:480px;background:#fafafa;border:1px solid #b5b5b5;box-sizing:border-box;"></div>
<div class="a" style="left:1012.3px;top:103.3px;width:10px;height:10.4px;background:linear-gradient(#fdfdfd,#dedede);border:1px solid #a8a8a8;box-sizing:border-box;"></div>
<svg class="a" style="left:1012.3px;top:103.3px" width="10" height="10.4"><path d="M5 3.6 L7.6 6.6 H2.4Z" fill="#333"/></svg>
<div class="a" style="left:0;top:578.6px;width:1024px;height:60px;background:#d6d6d6;"></div>
<div class="a" style="left:0;top:577.6px;width:982px;height:1.4px;background:#a9a9a9;"></div>
<div class="t" style="left:28.7px;top:581.9px;font-size:7.2px;line-height:8.6px;color:#222;">3</div>
<div class="t" style="left:58.4px;top:581.9px;font-size:7.2px;line-height:8.6px;color:#222;">4</div>
<div class="t" style="left:81.4px;top:581.9px;font-size:7.2px;line-height:8.6px;color:#222;">5</div>
<div class="t" style="left:100.2px;top:581.9px;font-size:7.2px;line-height:8.6px;color:#222;">6</div>
<div class="t" style="left:116.0px;top:581.9px;font-size:7.2px;line-height:8.6px;color:#222;">7</div>
<div class="t" style="left:129.8px;top:581.9px;font-size:7.2px;line-height:8.6px;color:#222;">8</div>
<div class="t" style="left:141.9px;top:581.9px;font-size:7.2px;line-height:8.6px;color:#222;">9</div>
<div class="t" style="left:152.6px;top:581.9px;font-size:7.2px;line-height:8.6px;color:#222;letter-spacing:-0.28px;">10</div>
<div class="t" style="left:222.5px;top:581.9px;font-size:7.2px;line-height:8.6px;color:#222;letter-spacing:-0.28px;">20</div>
<div class="t" style="left:264.3px;top:581.9px;font-size:7.2px;line-height:8.6px;color:#222;letter-spacing:-0.28px;">30</div>
<div class="t" style="left:293.9px;top:581.9px;font-size:7.2px;line-height:8.6px;color:#222;letter-spacing:-0.28px;">40</div>
<div class="t" style="left:316.9px;top:581.9px;font-size:7.2px;line-height:8.6px;color:#222;letter-spacing:-0.28px;">50</div>
<div class="t" style="left:335.7px;top:581.9px;font-size:7.2px;line-height:8.6px;color:#222;letter-spacing:-0.28px;">60</div>
<div class="t" style="left:351.6px;top:581.9px;font-size:7.2px;line-height:8.6px;color:#222;letter-spacing:-0.28px;">70</div>
<div class="t" style="left:365.4px;top:581.9px;font-size:7.2px;line-height:8.6px;color:#222;letter-spacing:-0.28px;">80</div>
<div class="t" style="left:387.5px;top:581.9px;font-size:7.2px;line-height:8.6px;color:#222;letter-spacing:-0.28px;">100</div>
<div class="t" style="left:457.9px;top:581.9px;font-size:7.2px;line-height:8.6px;color:#222;letter-spacing:-0.28px;">200</div>
<div class="t" style="left:499.7px;top:581.9px;font-size:7.2px;line-height:8.6px;color:#222;letter-spacing:-0.28px;">300</div>
<div class="t" style="left:529.4px;top:581.9px;font-size:7.2px;line-height:8.6px;color:#222;letter-spacing:-0.28px;">400</div>
<div class="t" style="left:552.4px;top:581.9px;font-size:7.2px;line-height:8.6px;color:#222;letter-spacing:-0.28px;">500</div>
<div class="t" style="left:571.2px;top:581.9px;font-size:7.2px;line-height:8.6px;color:#222;letter-spacing:-0.28px;">600</div>
<div class="t" style="left:600.8px;top:581.9px;font-size:7.2px;line-height:8.6px;color:#222;letter-spacing:-0.28px;">800</div>
<div class="t" style="left:625.9px;top:581.9px;font-size:7.2px;line-height:8.6px;color:#222;letter-spacing:-0.27px;">1k</div>
<div class="t" style="left:697.3px;top:581.9px;font-size:7.2px;line-height:8.6px;color:#222;letter-spacing:-0.27px;">2k</div>
<div class="t" style="left:739.1px;top:581.9px;font-size:7.2px;line-height:8.6px;color:#222;letter-spacing:-0.27px;">3k</div>
<div class="t" style="left:768.7px;top:581.9px;font-size:7.2px;line-height:8.6px;color:#222;letter-spacing:-0.27px;">4k</div>
<div class="t" style="left:791.7px;top:581.9px;font-size:7.2px;line-height:8.6px;color:#222;letter-spacing:-0.27px;">5k</div>
<div class="t" style="left:810.5px;top:581.9px;font-size:7.2px;line-height:8.6px;color:#222;letter-spacing:-0.27px;">6k</div>
<div class="t" style="left:826.4px;top:581.9px;font-size:7.2px;line-height:8.6px;color:#222;letter-spacing:-0.27px;">7k</div>
<div class="t" style="left:840.2px;top:581.9px;font-size:7.2px;line-height:8.6px;color:#222;letter-spacing:-0.27px;">8k</div>
<div class="a" style="left:11.6px;top:592.6px;width:1000px;height:43.6px;background:#fff;border:1.5px solid #8f8f8f;box-sizing:border-box;box-shadow:0 0 0 1px #c4c4c4;"></div>
<div class="a" style="left:0;top:638.5px;width:1024px;height:15px;background:linear-gradient(#e6e6e6,#dadada);border-top:1px solid #f6f6f6;"></div>
<div class="a" style="left:0;top:637.4px;width:1024px;height:1.1px;background:#bdbdbd;"></div>
<div class="t" style="left:-1.5px;top:644.0px;font-size:7.4px;line-height:8.9px;color:#1e1e1e;letter-spacing:-0.25px;">- measure; wheel to zoom;</div>
<div class="a" style="left:17.4px;top:596.8px;width:7.4px;height:7.4px;box-sizing:border-box;border:1px solid #a6afc4;background:linear-gradient(135deg,#e4e7ee,#fafbfc);"></div><svg class="a" style="left:17.4px;top:596.8px" width="7.4" height="7.4"><path d="M1.7 3.6 L3.2 5.6 L5.8 1.6" fill="none" stroke="#3a4664" stroke-width="1.3"/></svg>
<div class="t" style="left:27.4px;top:596.3px;font-size:7.3px;line-height:8.8px;color:#2f8a64;letter-spacing:-0.26px;">SPH170 harz+5g</div>
<svg class="a" style="left:116.6px;top:598.7px" width="21.0" height="4"><path d="M0 2 H21.0" stroke="#2f8a64" stroke-width="1.1" /></svg>
<div class="t" style="left:150.0px;top:596.3px;font-size:7.3px;line-height:8.8px;color:#2f8a64;letter-spacing:-0.19px;">6,42 ohm</div>
<div class="a" style="left:204.2px;top:596.8px;width:7.4px;height:7.4px;box-sizing:border-box;border:1px solid #a6afc4;background:linear-gradient(135deg,#e4e7ee,#fafbfc);"></div><svg class="a" style="left:204.2px;top:596.8px" width="7.4" height="7.4"><path d="M1.7 3.6 L3.2 5.6 L5.8 1.6" fill="none" stroke="#3a4664" stroke-width="1.3"/></svg>
<div class="t" style="left:214.2px;top:596.3px;font-size:7.3px;line-height:8.8px;color:#3fd391;letter-spacing:-0.21px;">Phase</div>
<svg class="a" style="left:303.4px;top:598.7px" width="21.0" height="4"><path d="M0 2 H21.0" stroke="#3fd391" stroke-width="1.1" /></svg>
<div class="t" style="left:342.6px;top:596.3px;font-size:7.3px;line-height:8.8px;color:#3fd391;letter-spacing:-0.17px;">6,9 deg</div>
<div class="a" style="left:391.0px;top:596.8px;width:7.4px;height:7.4px;box-sizing:border-box;border:1px solid #a6afc4;background:linear-gradient(135deg,#e4e7ee,#fafbfc);"></div><svg class="a" style="left:391.0px;top:596.8px" width="7.4" height="7.4"><path d="M1.7 3.6 L3.2 5.6 L5.8 1.6" fill="none" stroke="#3a4664" stroke-width="1.3"/></svg>
<div class="t" style="left:401.0px;top:596.3px;font-size:7.3px;line-height:8.8px;color:#7c7c7c;letter-spacing:-0.15px;">ZT<sub>sim</sub> magn</div>
<svg class="a" style="left:490.2px;top:598.7px" width="21.0" height="4"><path d="M0 2 H21.0" stroke="#5e5e5e" stroke-width="1.1" stroke-dasharray="5.4 2"/></svg>
<div class="t" style="left:523.6px;top:596.3px;font-size:7.3px;line-height:8.8px;color:#7c7c7c;letter-spacing:-0.19px;">6,38 ohm</div>
<div class="a" style="left:578.2px;top:596.8px;width:7.4px;height:7.4px;box-sizing:border-box;border:1px solid #a6afc4;background:linear-gradient(135deg,#e4e7ee,#fafbfc);"></div><svg class="a" style="left:578.2px;top:596.8px" width="7.4" height="7.4"><path d="M1.7 3.6 L3.2 5.6 L5.8 1.6" fill="none" stroke="#3a4664" stroke-width="1.3"/></svg>
<div class="t" style="left:588.2px;top:596.3px;font-size:7.3px;line-height:8.8px;color:#7c7c7c;letter-spacing:-0.15px;">ZT<sub>sim</sub> phase</div>
<svg class="a" style="left:677.4px;top:598.7px" width="21.0" height="4"><path d="M0 2 H21.0" stroke="#5e5e5e" stroke-width="1.1" stroke-dasharray="1.2 1.4"/></svg>
<div class="t" style="left:716.6px;top:596.3px;font-size:7.3px;line-height:8.8px;color:#7c7c7c;letter-spacing:-0.17px;">4,5 deg</div>
<div class="a" style="left:765.4px;top:596.8px;width:7.4px;height:7.4px;box-sizing:border-box;border:1px solid #a6afc4;background:linear-gradient(135deg,#e4e7ee,#fafbfc);"></div><svg class="a" style="left:765.4px;top:596.8px" width="7.4" height="7.4"><path d="M1.7 3.6 L3.2 5.6 L5.8 1.6" fill="none" stroke="#3a4664" stroke-width="1.3"/></svg>
<div class="t" style="left:775.4px;top:596.3px;font-size:7.3px;line-height:8.8px;color:#2f8a64;letter-spacing:-0.15px;">ZM<sub>der</sub> magn</div>
<div class="a" style="left:17.4px;top:611.2px;width:7.4px;height:7.4px;box-sizing:border-box;border:1px solid #a6afc4;background:linear-gradient(135deg,#e4e7ee,#fafbfc);"></div><svg class="a" style="left:17.4px;top:611.2px" width="7.4" height="7.4"><path d="M1.7 3.6 L3.2 5.6 L5.8 1.6" fill="none" stroke="#3a4664" stroke-width="1.3"/></svg>
<div class="t" style="left:27.4px;top:610.7px;font-size:7.3px;line-height:8.8px;color:#3fd391;letter-spacing:-0.15px;">ZM<sub>der</sub> phase</div>
<svg class="a" style="left:116.6px;top:613.1px" width="21.0" height="4"><path d="M0 2 H21.0" stroke="#3fd391" stroke-width="1.1" stroke-dasharray="4 1.6"/></svg>
<div class="t" style="left:157.7px;top:610.7px;font-size:7.3px;line-height:8.8px;color:#3fd391;letter-spacing:-0.19px;">82 deg</div>
<div class="a" style="left:204.2px;top:611.2px;width:7.4px;height:7.4px;box-sizing:border-box;border:1px solid #a6afc4;background:linear-gradient(135deg,#e4e7ee,#fafbfc);"></div><svg class="a" style="left:204.2px;top:611.2px" width="7.4" height="7.4"><path d="M1.7 3.6 L3.2 5.6 L5.8 1.6" fill="none" stroke="#3a4664" stroke-width="1.3"/></svg>
<div class="t" style="left:214.2px;top:610.7px;font-size:7.3px;line-height:8.8px;color:#7c7c7c;letter-spacing:-0.15px;">ZM<sub>sim</sub> magn</div>
<svg class="a" style="left:303.4px;top:613.1px" width="21.0" height="4"><path d="M0 2 H21.0" stroke="#5e5e5e" stroke-width="1.1" stroke-dasharray="5.4 2"/></svg>
<div class="t" style="left:332.9px;top:610.7px;font-size:7.3px;line-height:8.8px;color:#7c7c7c;letter-spacing:-0.22px;">492 mohm</div>
<div class="a" style="left:391.0px;top:611.2px;width:7.4px;height:7.4px;box-sizing:border-box;border:1px solid #a6afc4;background:linear-gradient(135deg,#e4e7ee,#fafbfc);"></div><svg class="a" style="left:391.0px;top:611.2px" width="7.4" height="7.4"><path d="M1.7 3.6 L3.2 5.6 L5.8 1.6" fill="none" stroke="#3a4664" stroke-width="1.3"/></svg>
<div class="t" style="left:401.0px;top:610.7px;font-size:7.3px;line-height:8.8px;color:#7c7c7c;letter-spacing:-0.15px;">ZM<sub>sim</sub> phase</div>
<svg class="a" style="left:490.2px;top:613.1px" width="21.0" height="4"><path d="M0 2 H21.0" stroke="#5e5e5e" stroke-width="1.1" stroke-dasharray="1.2 1.4"/></svg>
<div class="t" style="left:531.3px;top:610.7px;font-size:7.3px;line-height:8.8px;color:#7c7c7c;letter-spacing:-0.19px;">82 deg</div>
<div class="a" style="left:578.2px;top:611.2px;width:7.4px;height:7.4px;box-sizing:border-box;border:1px solid #a6afc4;background:linear-gradient(135deg,#e4e7ee,#fafbfc);"></div><svg class="a" style="left:578.2px;top:611.2px" width="7.4" height="7.4"><path d="M1.7 3.6 L3.2 5.6 L5.8 1.6" fill="none" stroke="#3a4664" stroke-width="1.3"/></svg>
<div class="t" style="left:588.2px;top:610.7px;font-size:7.3px;line-height:8.8px;color:#2f8a64;letter-spacing:-0.15px;">ZE<sub>der</sub> magn</div>
<svg class="a" style="left:677.4px;top:613.1px" width="21.0" height="4"><path d="M0 2 H21.0" stroke="#2f8a64" stroke-width="1.1" stroke-dasharray="9 1.5"/></svg>
<div class="t" style="left:710.8px;top:610.7px;font-size:7.3px;line-height:8.8px;color:#2f8a64;letter-spacing:-0.19px;">6,32 ohm</div>
<div class="a" style="left:765.4px;top:611.2px;width:7.4px;height:7.4px;box-sizing:border-box;border:1px solid #a6afc4;background:linear-gradient(135deg,#e4e7ee,#fafbfc);"></div><svg class="a" style="left:765.4px;top:611.2px" width="7.4" height="7.4"><path d="M1.7 3.6 L3.2 5.6 L5.8 1.6" fill="none" stroke="#3a4664" stroke-width="1.3"/></svg>
<div class="t" style="left:775.4px;top:610.7px;font-size:7.3px;line-height:8.8px;color:#3fd391;letter-spacing:-0.15px;">ZE<sub>der</sub> phase</div>
<div class="a" style="left:17.4px;top:626.1px;width:7.4px;height:7.4px;box-sizing:border-box;border:1px solid #a6afc4;background:linear-gradient(135deg,#e4e7ee,#fafbfc);"></div><svg class="a" style="left:17.4px;top:626.1px" width="7.4" height="7.4"><path d="M1.7 3.6 L3.2 5.6 L5.8 1.6" fill="none" stroke="#3a4664" stroke-width="1.3"/></svg>
<div class="t" style="left:27.4px;top:625.6px;font-size:7.3px;line-height:8.8px;color:#7c7c7c;letter-spacing:-0.15px;">ZE<sub>sim</sub> magn</div>
<svg class="a" style="left:116.6px;top:628.0px" width="21.0" height="4"><path d="M0 2 H21.0" stroke="#5e5e5e" stroke-width="1.1" stroke-dasharray="5.4 2"/></svg>
<div class="t" style="left:150.0px;top:625.6px;font-size:7.3px;line-height:8.8px;color:#7c7c7c;letter-spacing:-0.19px;">6,29 ohm</div>
<div class="a" style="left:204.2px;top:626.1px;width:7.4px;height:7.4px;box-sizing:border-box;border:1px solid #a6afc4;background:linear-gradient(135deg,#e4e7ee,#fafbfc);"></div><svg class="a" style="left:204.2px;top:626.1px" width="7.4" height="7.4"><path d="M1.7 3.6 L3.2 5.6 L5.8 1.6" fill="none" stroke="#3a4664" stroke-width="1.3"/></svg>
<div class="t" style="left:214.2px;top:625.6px;font-size:7.3px;line-height:8.8px;color:#7c7c7c;letter-spacing:-0.15px;">ZE<sub>sim</sub> phase</div>
<svg class="a" style="left:303.4px;top:628.0px" width="21.0" height="4"><path d="M0 2 H21.0" stroke="#5e5e5e" stroke-width="1.1" stroke-dasharray="1.2 1.4"/></svg>
<div class="t" style="left:342.6px;top:625.6px;font-size:7.3px;line-height:8.8px;color:#7c7c7c;letter-spacing:-0.17px;">0,1 deg</div>
<div class="a" style="left:862.2px;top:270.2px;width:175px;height:381.6px;background:#f6f8fa;border:1px solid #9aa3ad;border-radius:5px 5px 3px 3px;box-sizing:border-box;box-shadow:0 0 3px rgba(120,200,220,.55);"></div>
<div class="a" style="left:899px;top:271.2px;width:22px;height:17.5px;background:linear-gradient(90deg,rgba(200,245,240,0),rgba(170,238,232,.9) 50%,rgba(200,245,240,0));"></div>
<svg class="a" style="left:867.2px;top:274.2px" width="10.5" height="10.5" viewBox="0 0 10.5 10.5"><rect x=".5" y=".5" width="9.5" height="9.5" rx="1" fill="#f4f4f4" stroke="#9a9a9a" stroke-width=".8"/><path d="M5.2 2 C4 3.5 6.2 4 5 5.8" fill="none" stroke="#c06030" stroke-width=".8"/><path d="M2.6 6.8 H7.6 M3 8.2 H7.2" stroke="#4a6a9a" stroke-width=".9"/></svg>
<div class="t" style="left:881.2px;top:274.3px;font-size:9.4px;line-height:11.3px;color:#222;letter-spacing:-1.11px;">Levels</div>
<div class="a" style="left:953.3px;top:270.2px;width:66px;height:12.2px;border:1px solid #a9b3bf;border-top:none;border-radius:0 0 3.5px 3.5px;box-sizing:border-box;background:linear-gradient(#fcfdfe,#eef2f6);"></div>
<div class="a" style="left:971.8px;top:270.2px;width:1px;height:12px;background:#b6bec8;"></div><div class="a" style="left:989.8px;top:270.2px;width:1px;height:12px;background:#b6bec8;"></div>
<svg class="a" style="left:953.3px;top:270.2px" width="66" height="12.2" viewBox="0 0 66 12.2"><rect x="6.4" y="6" width="6.4" height="2.6" fill="#fff" stroke="#6f7a88" stroke-width=".9"/><rect x="24" y="2.6" width="6.6" height="5.6" fill="#fff" stroke="#6f7a88" stroke-width=".9"/><rect x="25.8" y="4.6" width="3" height="1.8" fill="#8a94a2"/><path d="M48.2 2.8 L53.6 8.2 M53.6 2.8 L48.2 8.2" stroke="#7a8594" stroke-width="2.3"/><path d="M48.2 2.8 L53.6 8.2 M53.6 2.8 L48.2 8.2" stroke="#fff" stroke-width=".8"/></svg>
<div class="a" style="left:867.1px;top:289.0px;width:153.3px;height:361.7px;background:linear-gradient(#f2f2f2 0px,#dcdcdc 17px,#d2d2d2 40px,#cfcfcf 340px,#d6d6d6 346px,#9e9e9e 362px);box-shadow:0 0 0 .8px #a6a6a6;"></div>
<div class="a" style="left:870.6px;top:305.8px;width:144.6px;height:258.2px;border-radius:4px;box-sizing:border-box;background:#dadada;border:2.4px solid #f1f1f1;box-shadow:0 0 0 .8px #a2a2a2, inset 0 0 0 .6px #b4b4b4;"></div>
<div class="a" style="left:870.6px;top:572.0px;width:144.6px;height:62.4px;border-radius:4px;box-sizing:border-box;background:#dadada;border:2.4px solid #f1f1f1;box-shadow:0 0 0 .8px #a2a2a2, inset 0 0 0 .6px #b4b4b4;"></div>
<div class="a" style="left:877.2px;top:312.3px;width:39.7px;height:244.7px;background:#3d3d3d;box-shadow:inset 0 0 0 1px #2c2c2c;"></div>
<div class="t" style="left:890.0px;top:314.8px;font-size:7.6px;line-height:9.1px;color:#0c0c0c;letter-spacing:-0.22px;font-weight:bold;">Out</div>
<div class="a" style="left:902.3px;top:328px;width:8.8px;height:194.4px;background:#000;"></div>
<div class="t" style="left:889.0px;top:324.7px;font-size:6.6px;line-height:7.9px;color:#000;">0</div>
<div class="t" style="left:883.9px;top:344.0px;font-size:6.6px;line-height:7.9px;color:#000;letter-spacing:-0.25px;">-10</div>
<div class="t" style="left:883.9px;top:363.2px;font-size:6.6px;line-height:7.9px;color:#000;letter-spacing:-0.25px;">-20</div>
<div class="t" style="left:883.9px;top:382.5px;font-size:6.6px;line-height:7.9px;color:#000;letter-spacing:-0.25px;">-30</div>
<div class="t" style="left:883.9px;top:401.7px;font-size:6.6px;line-height:7.9px;color:#000;letter-spacing:-0.25px;">-40</div>
<div class="t" style="left:883.9px;top:421.0px;font-size:6.6px;line-height:7.9px;color:#000;letter-spacing:-0.25px;">-50</div>
<div class="t" style="left:883.9px;top:440.2px;font-size:6.6px;line-height:7.9px;color:#000;letter-spacing:-0.25px;">-60</div>
<div class="t" style="left:883.9px;top:459.5px;font-size:6.6px;line-height:7.9px;color:#000;letter-spacing:-0.25px;">-70</div>
<div class="t" style="left:883.9px;top:478.7px;font-size:6.6px;line-height:7.9px;color:#000;letter-spacing:-0.25px;">-80</div>
<div class="t" style="left:883.9px;top:498.0px;font-size:6.6px;line-height:7.9px;color:#000;letter-spacing:-0.25px;">-90</div>
<div class="t" style="left:880.5px;top:517.2px;font-size:6.6px;line-height:7.9px;color:#000;letter-spacing:-0.26px;">-100</div>
<div class="a" style="left:903.5px;top:519.2px;width:6.4px;height:2px;background:#9a9a9a;"></div>
<div class="a" style="left:881.8px;top:529.8px;width:30.2px;height:15.4px;background:#000;border-radius:2.5px;"></div>
<div class="t" style="left:889.4px;top:548.2px;font-size:6.0px;line-height:7.2px;color:#0a0a0a;letter-spacing:-0.12px;font-weight:bold;">dBFS</div>
<div class="a" style="left:923.5px;top:312.3px;width:39.6px;height:244.7px;background:#3d3d3d;box-shadow:inset 0 0 0 1px #2c2c2c;"></div>
<div class="t" style="left:940.1px;top:314.8px;font-size:7.6px;line-height:9.1px;color:#f4f4f4;letter-spacing:-0.17px;font-weight:bold;">In</div>
<div class="a" style="left:948.6px;top:328px;width:8.8px;height:194.4px;background:#000;"></div>
<div class="t" style="left:935.3px;top:324.7px;font-size:6.6px;line-height:7.9px;color:#cfcfcf;">0</div>
<div class="t" style="left:930.2px;top:344.0px;font-size:6.6px;line-height:7.9px;color:#cfcfcf;letter-spacing:-0.25px;">-10</div>
<div class="t" style="left:930.2px;top:363.2px;font-size:6.6px;line-height:7.9px;color:#cfcfcf;letter-spacing:-0.25px;">-20</div>
<div class="t" style="left:930.2px;top:382.5px;font-size:6.6px;line-height:7.9px;color:#cfcfcf;letter-spacing:-0.25px;">-30</div>
<div class="t" style="left:930.2px;top:401.7px;font-size:6.6px;line-height:7.9px;color:#cfcfcf;letter-spacing:-0.25px;">-40</div>
<div class="t" style="left:930.2px;top:421.0px;font-size:6.6px;line-height:7.9px;color:#cfcfcf;letter-spacing:-0.25px;">-50</div>
<div class="t" style="left:930.2px;top:440.2px;font-size:6.6px;line-height:7.9px;color:#cfcfcf;letter-spacing:-0.25px;">-60</div>
<div class="t" style="left:930.2px;top:459.5px;font-size:6.6px;line-height:7.9px;color:#cfcfcf;letter-spacing:-0.25px;">-70</div>
<div class="t" style="left:930.2px;top:478.7px;font-size:6.6px;line-height:7.9px;color:#cfcfcf;letter-spacing:-0.25px;">-80</div>
<div class="t" style="left:930.2px;top:498.0px;font-size:6.6px;line-height:7.9px;color:#cfcfcf;letter-spacing:-0.25px;">-90</div>
<div class="t" style="left:926.8px;top:517.2px;font-size:6.6px;line-height:7.9px;color:#cfcfcf;letter-spacing:-0.26px;">-100</div>
<svg class="a" style="left:923.5px;top:312.3px" width="39.6" height="245"><path d="M17.5 16.4 H23.9 M19.9 26.0 H23.9 M17.5 35.6 H23.9 M19.9 45.3 H23.9 M17.5 54.9 H23.9 M19.9 64.5 H23.9 M17.5 74.1 H23.9 M19.9 83.8 H23.9 M17.5 93.4 H23.9 M19.9 103.0 H23.9 M17.5 112.6 H23.9 M19.9 122.3 H23.9 M17.5 131.9 H23.9 M19.9 141.5 H23.9 M17.5 151.1 H23.9 M19.9 160.8 H23.9 M17.5 170.4 H23.9 M19.9 180.0 H23.9 M17.5 189.6 H23.9 M19.9 199.3 H23.9 M17.5 208.9 H23.9 " stroke="#dedede" stroke-width="1"/></svg>
<div class="a" style="left:948.6px;top:417.8px;width:8.8px;height:104.6px;background:linear-gradient(#27b84c 0%,#1fa777 30%,#1488a8 52%,#0a3fd8 78%,#0000f0 100%);"></div>
<div class="a" style="left:949.9px;top:385.2px;width:6.4px;height:2px;background:#c42424;border-radius:1px;"></div>
<div class="a" style="left:928.1px;top:529.8px;width:30.2px;height:15.4px;background:#000;border-radius:2.5px;"></div>
<div class="t" style="left:931.0px;top:531.5px;font-size:10.2px;line-height:12.2px;color:#fff;letter-spacing:0.25px;font-weight:bold;">-46,3</div>
<div class="t" style="left:935.7px;top:548.2px;font-size:6.0px;line-height:7.2px;color:#b4b4b4;letter-spacing:-0.12px;font-weight:bold;">dBFS</div>
<div class="a" style="left:970.0px;top:312.3px;width:39.4px;height:244.7px;background:#3d3d3d;box-shadow:inset 0 0 0 1px #2c2c2c;"></div>
<div class="t" style="left:979.7px;top:314.8px;font-size:7.6px;line-height:9.1px;color:#f4f4f4;letter-spacing:-0.18px;font-weight:bold;">Ref In</div>
<div class="a" style="left:995.1px;top:328px;width:8.8px;height:194.4px;background:#000;"></div>
<div class="t" style="left:981.8px;top:324.7px;font-size:6.6px;line-height:7.9px;color:#cfcfcf;">0</div>
<div class="t" style="left:976.7px;top:344.0px;font-size:6.6px;line-height:7.9px;color:#cfcfcf;letter-spacing:-0.25px;">-10</div>
<div class="t" style="left:976.7px;top:363.2px;font-size:6.6px;line-height:7.9px;color:#cfcfcf;letter-spacing:-0.25px;">-20</div>
<div class="t" style="left:976.7px;top:382.5px;font-size:6.6px;line-height:7.9px;color:#cfcfcf;letter-spacing:-0.25px;">-30</div>
<div class="t" style="left:976.7px;top:401.7px;font-size:6.6px;line-height:7.9px;color:#cfcfcf;letter-spacing:-0.25px;">-40</div>
<div class="t" style="left:976.7px;top:421.0px;font-size:6.6px;line-height:7.9px;color:#cfcfcf;letter-spacing:-0.25px;">-50</div>
<div class="t" style="left:976.7px;top:440.2px;font-size:6.6px;line-height:7.9px;color:#cfcfcf;letter-spacing:-0.25px;">-60</div>
<div class="t" style="left:976.7px;top:459.5px;font-size:6.6px;line-height:7.9px;color:#cfcfcf;letter-spacing:-0.25px;">-70</div>
<div class="t" style="left:976.7px;top:478.7px;font-size:6.6px;line-height:7.9px;color:#cfcfcf;letter-spacing:-0.25px;">-80</div>
<div class="t" style="left:976.7px;top:498.0px;font-size:6.6px;line-height:7.9px;color:#cfcfcf;letter-spacing:-0.25px;">-90</div>
<div class="t" style="left:973.3px;top:517.2px;font-size:6.6px;line-height:7.9px;color:#cfcfcf;letter-spacing:-0.26px;">-100</div>
<svg class="a" style="left:970.0px;top:312.3px" width="39.4" height="245"><path d="M17.5 16.4 H23.9 M19.9 26.0 H23.9 M17.5 35.6 H23.9 M19.9 45.3 H23.9 M17.5 54.9 H23.9 M19.9 64.5 H23.9 M17.5 74.1 H23.9 M19.9 83.8 H23.9 M17.5 93.4 H23.9 M19.9 103.0 H23.9 M17.5 112.6 H23.9 M19.9 122.3 H23.9 M17.5 131.9 H23.9 M19.9 141.5 H23.9 M17.5 151.1 H23.9 M19.9 160.8 H23.9 M17.5 170.4 H23.9 M19.9 180.0 H23.9 M17.5 189.6 H23.9 M19.9 199.3 H23.9 M17.5 208.9 H23.9 " stroke="#dedede" stroke-width="1"/></svg>
<div class="a" style="left:995.1px;top:417.8px;width:8.8px;height:104.6px;background:linear-gradient(#27b84c 0%,#1fa777 30%,#1488a8 52%,#0a3fd8 78%,#0000f0 100%);"></div>
<div class="a" style="left:996.4px;top:385.2px;width:6.4px;height:2px;background:#c42424;border-radius:1px;"></div>
<div class="a" style="left:974.6px;top:529.8px;width:30.2px;height:15.4px;background:#000;border-radius:2.5px;"></div>
<div class="t" style="left:977.5px;top:531.5px;font-size:10.2px;line-height:12.2px;color:#fff;letter-spacing:0.25px;font-weight:bold;">-46,3</div>
<div class="t" style="left:982.1px;top:548.2px;font-size:6.0px;line-height:7.2px;color:#b4b4b4;letter-spacing:-0.12px;font-weight:bold;">dBFS</div>
<div class="a" style="left:877.3px;top:578.4px;width:132.2px;height:49.0px;background:#3d3d3d;box-shadow:inset 0 0 0 1px #2c2c2c;"></div>
<div class="t" style="left:890.8px;top:588.3px;font-size:7.6px;line-height:9.1px;color:#0c0c0c;letter-spacing:-0.17px;font-weight:bold;">In to Ref gain</div>
<div class="t" style="left:890.8px;top:610.2px;font-size:7.6px;line-height:9.1px;color:#0c0c0c;letter-spacing:-0.13px;font-weight:bold;">In to Ref phase</div>
<div class="a" style="left:951.9px;top:584.4px;width:31.4px;height:15.6px;background:#000;border-radius:2.5px;"></div>
<div class="a" style="left:951.9px;top:606.2px;width:31.4px;height:15.4px;background:#000;border-radius:2.5px;"></div>
<div class="t" style="left:990.6px;top:589.5px;font-size:6.2px;line-height:7.4px;color:#0a0a0a;letter-spacing:-0.93px;font-weight:bold;">dB</div>
<div class="t" style="left:990.2px;top:611.7px;font-size:6.2px;line-height:7.4px;color:#0a0a0a;letter-spacing:-0.47px;font-weight:bold;">deg</div>
</body></html>
